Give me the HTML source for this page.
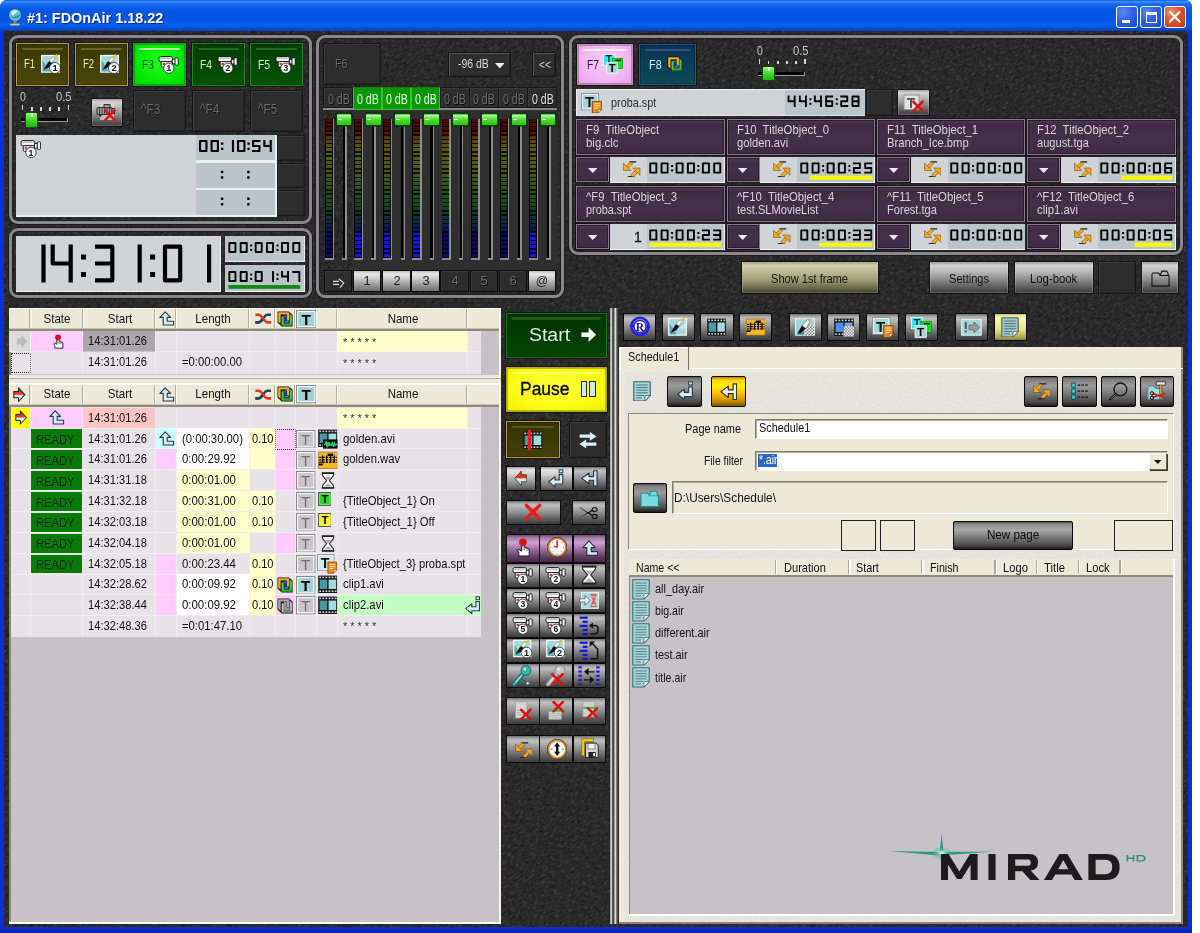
<!DOCTYPE html><html><head><meta charset="utf-8"><title>FDOnAir</title><style>
html,body{margin:0;padding:0;background:#fff;overflow:hidden}
body{width:1200px;height:933px;position:relative;font-family:"Liberation Sans",sans-serif}
.a{position:absolute;box-sizing:border-box}
.t{white-space:nowrap;font-family:"Liberation Sans",sans-serif}
.rp{border:3px solid #8a888a;border-radius:9px;box-shadow:0 0 0 1px #1c1c1c, inset 0 0 0 1px #1c1c1c}
.dk{background:#2d2d2d;border:1px solid #181818;box-shadow:inset 1px 1px 0 #3b3b3b, inset -1px -1px 0 #242424}
.mt{background:linear-gradient(#8e8e8e 0%,#d2d2d2 10%,#bdbdbd 28%,#8f8f8f 55%,#555 85%,#3a3a3a 100%);border:1px solid #111;box-shadow:inset 0 0 0 1px rgba(255,255,255,.18)}
.mtd{background:linear-gradient(#5e5e5e 0%,#8a8a8a 8%,#6f6f6f 35%,#4a4a4a 70%,#2c2c2c 100%);border:1px solid #0c0c0c;box-shadow:inset 0 0 0 1px rgba(255,255,255,.12)}
.lcd{background:#d0d4d6}
.lcd2{background:#b9c5c9}
</style></head><body><div style="position:absolute;left:0;top:0;width:1200px;height:933px;opacity:0.999"><div class="a" style="left:0px;top:0px;width:1192px;height:933px;background:linear-gradient(#0a31d8 0,#0a31d8 99.3%,#0820a8 100%);border-radius:7px 7px 0 0"></div><div class="a" style="left:4px;top:31px;width:1184px;height:896px;background:#2a2a2a;overflow:hidden"><svg width="1184" height="896" style="position:absolute;left:0;top:0"><filter id="nz" x="0" y="0" width="100%" height="100%" filterUnits="objectBoundingBox"><feTurbulence type="fractalNoise" baseFrequency="0.22 0.62" numOctaves="2" seed="3"/><feColorMatrix type="matrix" values="0 0 0 0 1  0 0 0 0 1  0 0 0 0 1  3.2 0 0 0 -1.55"/></filter><filter id="nz2" x="0" y="0" width="100%" height="100%" filterUnits="objectBoundingBox"><feTurbulence type="fractalNoise" baseFrequency="0.2 0.6" numOctaves="2" seed="17"/><feColorMatrix type="matrix" values="0 0 0 0 0  0 0 0 0 0  0 0 0 0 0  3.2 0 0 0 -1.55"/></filter><g transform="rotate(-38 592 448)"><rect x="-300" y="-400" width="1800" height="1700" filter="url(#nz)" opacity="0.11"/><rect x="-300" y="-400" width="1800" height="1700" filter="url(#nz2)" opacity="0.36"/></g></svg></div><div class="a" style="left:0px;top:0px;width:1192px;height:31px;border-radius:7px 7px 0 0;background:linear-gradient(#0a5bdc 0%,#3f8cf7 5%,#1a6cf0 12%,#0558e6 30%,#0455e4 60%,#0660f0 80%,#0750d8 92%,#0340b8 100%)"></div><svg class="a" style="left:6px;top:7px" width="18" height="20" viewBox="0 0 18 20"><circle cx="9" cy="8" r="6.5" fill="#5bc0d8" stroke="#1a4a8a" stroke-width="1"/><path d="M5 5 Q8 2 12 4 Q9 7 6 9 Z" fill="#e8f8ff" opacity=".85"/><path d="M6 10 Q10 12 14 8" stroke="#2a7a9a" stroke-width="1.3" fill="none"/><rect x="7.5" y="14" width="3" height="3" fill="#888"/><rect x="4" y="16.5" width="10" height="2" rx="1" fill="#ccc" stroke="#666" stroke-width=".5"/></svg><span class="a t" style="left:27px;transform-origin:0 0;top:9.57px;font-size:14px;line-height:16px;color:#fff;font-weight:bold;transform:scaleX(1.03);text-shadow:1px 1px 1px #0a2a8a">#1: FDOnAir 1.18.22</span><div class="a" style="left:1116px;top:6px;width:21.5px;height:21.5px;border:1px solid #fff;border-radius:3px;background:radial-gradient(circle at 30% 25%,#5b8cf5 0%,#2f62e6 45%,#1d47c8 100%)"><div class="a" style="left:5px;top:13px;width:8px;height:3px;background:#fff"></div></div><div class="a" style="left:1140px;top:6px;width:21.5px;height:21.5px;border:1px solid #fff;border-radius:3px;background:radial-gradient(circle at 30% 25%,#5b8cf5 0%,#2f62e6 45%,#1d47c8 100%)"><div class="a" style="left:4.5px;top:4.5px;width:11px;height:11px;border:1.5px solid #fff;border-top-width:3px"></div></div><div class="a" style="left:1164px;top:6px;width:21.5px;height:21.5px;border:1px solid #fff;border-radius:3px;background:radial-gradient(circle at 30% 25%,#f0936f 0%,#dd5028 45%,#c03a14 100%)"><svg width="20" height="20" style="position:absolute;left:0;top:0"><path d="M5 5 L14.5 14.5 M14.5 5 L5 14.5" stroke="#fff" stroke-width="2.2" stroke-linecap="round"/></svg></div>
<div class="a rp" style="left:8.5px;top:35px;width:303.5px;height:188.8px;"></div><div class="a" style="left:16.3px;top:43.4px;width:53px;height:43px;background:linear-gradient(#3a3800,#45420a 60%,#4a4606);border:1px solid #c29a3c;box-shadow:0 0 0 1px #141414, inset 0 0 0 1px rgba(0,0,0,.25)"><div class="a" style="left:5px;top:3.6px;right:5px;height:2.4px;border-radius:1.2px;filter:blur(.5px);background:rgba(140,135,70,.55)"></div></div><span class="a t" style="left:24.1px;transform-origin:0 0;top:56.49px;font-size:13.3px;line-height:15.3px;color:#f2eab4;font-weight:normal;transform:scaleX(0.72);">F1</span><svg class="a" style="left:41.2px;top:53.9px" width="20" height="20" viewBox="0 -0.6 20 20"><rect x=".7" y=".9" width="17.6" height="16.6" fill="#a6d8da" stroke="#f0fafa" stroke-width="1.3"/><path d="M1.5 16.8 V5.4 L8.8 16.8 Z" fill="#4f9ea6" opacity=".85"/><path d="M10 11.2 L18 5.4 V11 Z" fill="#d4eef0" opacity=".8"/><path d="M2.6 15.2 L7.2 7.6 L10.6 5.2 L11.4 8.4 L8.4 12.6 Z" fill="#0c0c0c"/><path d="M8.2 6.4 L12.2 2.4 L14 4.2 L10.6 8.4 Z" fill="#fbfbf4" stroke="#555" stroke-width=".4"/><path d="M12.2 2.4 L15.4 -.4 L17.2 .6 L14 4.2 Z" fill="#f0bc38"/><circle cx="14" cy="13.4" r="5.5" fill="#fff" stroke="#222" stroke-width=".8"/><text x="14" y="16.78" font-family="Liberation Sans" font-size="9.4" font-weight="bold" text-anchor="middle" fill="#111">1</text></svg><div class="a" style="left:74.7px;top:43.4px;width:53px;height:43px;background:linear-gradient(#3a3800,#45420a 60%,#4a4606);border:1px solid #c29a3c;box-shadow:0 0 0 1px #141414, inset 0 0 0 1px rgba(0,0,0,.25)"><div class="a" style="left:5px;top:3.6px;right:5px;height:2.4px;border-radius:1.2px;filter:blur(.5px);background:rgba(140,135,70,.55)"></div></div><span class="a t" style="left:82.5px;transform-origin:0 0;top:56.49px;font-size:13.3px;line-height:15.3px;color:#f2eab4;font-weight:normal;transform:scaleX(0.72);">F2</span><svg class="a" style="left:99.6px;top:53.9px" width="20" height="20" viewBox="0 -0.6 20 20"><rect x=".7" y=".9" width="17.6" height="16.6" fill="#a6d8da" stroke="#f0fafa" stroke-width="1.3"/><path d="M1.5 16.8 V5.4 L8.8 16.8 Z" fill="#4f9ea6" opacity=".85"/><path d="M10 11.2 L18 5.4 V11 Z" fill="#d4eef0" opacity=".8"/><path d="M2.6 15.2 L7.2 7.6 L10.6 5.2 L11.4 8.4 L8.4 12.6 Z" fill="#0c0c0c"/><path d="M8.2 6.4 L12.2 2.4 L14 4.2 L10.6 8.4 Z" fill="#fbfbf4" stroke="#555" stroke-width=".4"/><path d="M12.2 2.4 L15.4 -.4 L17.2 .6 L14 4.2 Z" fill="#f0bc38"/><circle cx="14" cy="13.4" r="5.5" fill="#fff" stroke="#222" stroke-width=".8"/><text x="14" y="16.78" font-family="Liberation Sans" font-size="9.4" font-weight="bold" text-anchor="middle" fill="#111">2</text></svg><div class="a" style="left:132.9px;top:43.4px;width:53.5px;height:42.6px;background:radial-gradient(ellipse at 50% 45%,#1cff1c 0%,#05ee05 55%,#00d400 100%);border:1px solid #19a919;box-shadow:0 0 0 1px #141414, inset 0 0 0 1px rgba(0,0,0,.25)"><div class="a" style="left:5px;top:3.6px;right:5px;height:2.4px;border-radius:1.2px;filter:blur(.5px);background:rgba(200,255,190,.85)"></div></div><span class="a t" style="left:141.6px;transform-origin:0 0;top:56.55px;font-size:13.5px;line-height:15.5px;color:#045004;font-weight:normal;transform:scaleX(0.77);">F3</span><svg class="a" style="left:157.9px;top:55.2px" width="21" height="19" viewBox="0 0 21 19"><g stroke="#111" stroke-width=".9" fill="#f4f4f4"><rect x="1" y="1.5" width="13.5" height="5.2" rx="1.8"/><rect x="3.2" y="6.6" width="11" height="5.5" rx="1"/><rect x="14.3" y="4.3" width="3" height="4.6"/><rect x="17" y="2.8" width="3.2" height="7.4" rx=".8"/></g><rect x="4.6" y="8" width="2.6" height="2" fill="#e0303a"/><path d="M2.2 3.1 H12.5" stroke="#888" stroke-width=".8"/><circle cx="10.8" cy="13.2" r="5.1" fill="#fff" stroke="#222" stroke-width=".8"/><text x="10.8" y="16.3" font-family="Liberation Sans" font-size="8.6" font-weight="bold" text-anchor="middle" fill="#111">1</text></svg><div class="a" style="left:191.5px;top:43.4px;width:53px;height:42.6px;background:linear-gradient(#013c01,#024a02 55%,#035203);border:1px solid #138f13;box-shadow:0 0 0 1px #141414, inset 0 0 0 1px rgba(0,0,0,.25)"><div class="a" style="left:5px;top:3.6px;right:5px;height:2.4px;border-radius:1.2px;filter:blur(.5px);background:rgba(60,130,60,.6)"></div></div><span class="a t" style="left:199.7px;transform-origin:0 0;top:56.55px;font-size:13.5px;line-height:15.5px;color:#cfeec4;font-weight:normal;transform:scaleX(0.77);">F4</span><svg class="a" style="left:216.5px;top:55.2px" width="21" height="19" viewBox="0 0 21 19"><g stroke="#111" stroke-width=".9" fill="#f4f4f4"><rect x="1" y="1.5" width="13.5" height="5.2" rx="1.8"/><rect x="3.2" y="6.6" width="11" height="5.5" rx="1"/><rect x="14.3" y="4.3" width="3" height="4.6"/><rect x="17" y="2.8" width="3.2" height="7.4" rx=".8"/></g><rect x="4.6" y="8" width="2.6" height="2" fill="#e0303a"/><path d="M2.2 3.1 H12.5" stroke="#888" stroke-width=".8"/><circle cx="10.8" cy="13.2" r="5.1" fill="#fff" stroke="#222" stroke-width=".8"/><text x="10.8" y="16.3" font-family="Liberation Sans" font-size="8.6" font-weight="bold" text-anchor="middle" fill="#111">2</text></svg><div class="a" style="left:250px;top:43.4px;width:53px;height:42.6px;background:linear-gradient(#013c01,#024a02 55%,#035203);border:1px solid #138f13;box-shadow:0 0 0 1px #141414, inset 0 0 0 1px rgba(0,0,0,.25)"><div class="a" style="left:5px;top:3.6px;right:5px;height:2.4px;border-radius:1.2px;filter:blur(.5px);background:rgba(60,130,60,.6)"></div></div><span class="a t" style="left:258.2px;transform-origin:0 0;top:56.55px;font-size:13.5px;line-height:15.5px;color:#cfeec4;font-weight:normal;transform:scaleX(0.77);">F5</span><svg class="a" style="left:275px;top:55.2px" width="21" height="19" viewBox="0 0 21 19"><g stroke="#111" stroke-width=".9" fill="#f4f4f4"><rect x="1" y="1.5" width="13.5" height="5.2" rx="1.8"/><rect x="3.2" y="6.6" width="11" height="5.5" rx="1"/><rect x="14.3" y="4.3" width="3" height="4.6"/><rect x="17" y="2.8" width="3.2" height="7.4" rx=".8"/></g><rect x="4.6" y="8" width="2.6" height="2" fill="#e0303a"/><path d="M2.2 3.1 H12.5" stroke="#888" stroke-width=".8"/><circle cx="10.8" cy="13.2" r="5.1" fill="#fff" stroke="#222" stroke-width=".8"/><text x="10.8" y="16.3" font-family="Liberation Sans" font-size="8.6" font-weight="bold" text-anchor="middle" fill="#111">3</text></svg><span class="a t" style="left:20.4px;transform-origin:0 0;top:90.4px;font-size:12.6px;line-height:14.6px;color:#c4c4c4;font-weight:normal;transform:scaleX(0.83);">0</span><span class="a t" style="left:55.7px;transform-origin:0 0;top:90.4px;font-size:12.6px;line-height:14.6px;color:#c4c4c4;font-weight:normal;transform:scaleX(0.89);">0.5</span><div class="a" style="left:21.8px;top:105.2px;width:1.6px;height:5.3px;background:#d8d8d8"></div><div class="a" style="left:30.96px;top:107px;width:1.6px;height:3.5px;background:#d8d8d8"></div><div class="a" style="left:40.12px;top:107px;width:1.6px;height:3.5px;background:#d8d8d8"></div><div class="a" style="left:49.28px;top:107px;width:1.6px;height:3.5px;background:#d8d8d8"></div><div class="a" style="left:58.44px;top:107px;width:1.6px;height:3.5px;background:#d8d8d8"></div><div class="a" style="left:67.6px;top:105.2px;width:1.6px;height:5.3px;background:#d8d8d8"></div><div class="a" style="left:21.1px;top:118.2px;width:47.4px;height:2.6px;background:#050505"></div><div class="a" style="left:21.1px;top:120.8px;width:47.4px;height:1.2px;background:#9a9a9a"></div><div class="a" style="left:67.3px;top:118.2px;width:1.2px;height:3.8px;background:#9a9a9a"></div><div class="a" style="left:25.4px;top:112px;width:12.9px;height:15.6px;border:1px solid #0b4d0b;border-radius:2px;background:linear-gradient(#9cf58a 0%,#63ea4a 25%,#35d51f 60%,#22b510 100%)"><div class="a" style="left:5px;top:0;width:1.4px;height:4px;background:#e8ffe0"></div></div><div class="a mt" style="left:90.6px;top:97.8px;width:32.6px;height:28.8px;"><svg class="a" style="left:4.6px;top:3.6px" width="22" height="20" viewBox="0 0 22 20"><rect x="4" y="1" width="14" height="17" fill="#d8d8d8" opacity=".75"/><g stroke="#222" stroke-width=".9" fill="#9a9a9a"><rect x="1" y="5.5" width="15" height="7" rx="1"/><rect x="8" y="2.6" width="6" height="3.2"/><rect x="16" y="6.4" width="2.6" height="5"/></g><path d="M3.5 6 V12 M6 6 V12 M8.5 6 V12 M11 6 V12 M13.5 6 V12" stroke="#333" stroke-width=".8"/><path d="M2.5 12.5 L4.5 15 L6 12.5 Z" fill="#222"/><path d="M9.4 8.6 L18.6 17.8 M18.6 8.6 L9.4 17.8" stroke="#e01010" stroke-width="2.4" stroke-linecap="round"/></svg></div><div class="a dk" style="left:132.9px;top:89.5px;width:53.4px;height:42.4px;"></div><span class="a t" style="left:140.9px;transform-origin:0 0;top:102.41px;font-size:13.8px;line-height:15.8px;color:#6a6a6a;font-weight:normal;transform:scaleX(0.85);text-shadow:1px 1px 0 #111">^F3</span><div class="a dk" style="left:191.5px;top:89.5px;width:53.4px;height:42.4px;"></div><span class="a t" style="left:199.5px;transform-origin:0 0;top:102.41px;font-size:13.8px;line-height:15.8px;color:#6a6a6a;font-weight:normal;transform:scaleX(0.85);text-shadow:1px 1px 0 #111">^F4</span><div class="a dk" style="left:250px;top:89.5px;width:53.4px;height:42.4px;"></div><span class="a t" style="left:258px;transform-origin:0 0;top:102.41px;font-size:13.8px;line-height:15.8px;color:#6a6a6a;font-weight:normal;transform:scaleX(0.85);text-shadow:1px 1px 0 #111">^F5</span><div class="a" style="left:15.6px;top:134.6px;width:261px;height:82.8px;background:#eef0f0"></div><div class="a lcd" style="left:16.4px;top:135.2px;width:179.6px;height:80px;"></div><div class="a lcd2" style="left:196px;top:135.2px;width:78.6px;height:25.2px;"></div><div class="a dk" style="left:277px;top:135.2px;width:28px;height:25.8px;"></div><div class="a lcd2" style="left:196px;top:163px;width:78.6px;height:24.6px;"></div><div class="a dk" style="left:277px;top:163px;width:28px;height:25.2px;"></div><div class="a lcd2" style="left:196px;top:190px;width:78.6px;height:25.2px;"></div><div class="a dk" style="left:277px;top:190px;width:28px;height:25.8px;"></div><svg class="a" style="left:19.5px;top:138.5px" width="21.42" height="19.38" viewBox="0 0 21 19"><g stroke="#111" stroke-width=".9" fill="#f4f4f4"><rect x="1" y="1.5" width="13.5" height="5.2" rx="1.8"/><rect x="3.2" y="6.6" width="11" height="5.5" rx="1"/><rect x="14.3" y="4.3" width="3" height="4.6"/><rect x="17" y="2.8" width="3.2" height="7.4" rx=".8"/></g><rect x="4.6" y="8" width="2.6" height="2" fill="#e0303a"/><path d="M2.2 3.1 H12.5" stroke="#888" stroke-width=".8"/><circle cx="10.8" cy="13.2" r="5.1" fill="#fff" stroke="#222" stroke-width=".8"/><text x="10.8" y="16.3" font-family="Liberation Sans" font-size="8.6" font-weight="bold" text-anchor="middle" fill="#111">1</text></svg><svg class="a" style="left:190px;top:130px" width="100" height="90" viewBox="190 130 100 90" ><path d="M200.05 141.05H206.45V150.95H200.05Z" fill="none" stroke="#000" stroke-width="2.1" stroke-linejoin="round" stroke-linecap="square"/><path d="M211.55 141.05H217.95V150.95H211.55Z" fill="none" stroke="#000" stroke-width="2.1" stroke-linejoin="round" stroke-linecap="square"/><rect x="221.05" y="142.45" width="2.3" height="2.3" fill="#000"/><rect x="221.05" y="147.73" width="2.3" height="2.3" fill="#000"/><path d="M232.95 141.05V150.95" fill="none" stroke="#000" stroke-width="2.1" stroke-linejoin="round" stroke-linecap="square"/><path d="M238.05 141.05H244.45V150.95H238.05Z" fill="none" stroke="#000" stroke-width="2.1" stroke-linejoin="round" stroke-linecap="square"/><rect x="247.45" y="142.45" width="2.3" height="2.3" fill="#000"/><rect x="247.45" y="147.73" width="2.3" height="2.3" fill="#000"/><path d="M259.45 141.05H253.05V146H259.45V150.95H253.05" fill="none" stroke="#000" stroke-width="2.1" stroke-linejoin="round" stroke-linecap="square"/><path d="M264.35 141.05V146H270.75M270.75 141.05V150.95" fill="none" stroke="#000" stroke-width="2.1" stroke-linejoin="round" stroke-linecap="square"/><rect x="220.9" y="170.76" width="2.4" height="2.4" fill="#000"/><rect x="220.9" y="176.28" width="2.4" height="2.4" fill="#000"/><rect x="247.2" y="170.76" width="2.4" height="2.4" fill="#000"/><rect x="247.2" y="176.28" width="2.4" height="2.4" fill="#000"/><rect x="220.9" y="197.56" width="2.4" height="2.4" fill="#000"/><rect x="220.9" y="203.08" width="2.4" height="2.4" fill="#000"/><rect x="247.2" y="197.56" width="2.4" height="2.4" fill="#000"/><rect x="247.2" y="203.08" width="2.4" height="2.4" fill="#000"/></svg><div class="a rp" style="left:8.5px;top:228.3px;width:303.5px;height:69.9px;"></div><div class="a lcd" style="left:15.6px;top:235.6px;width:205.2px;height:56.2px;border:1px solid #eef0f0;border-left:0;border-top:0"></div><div class="a lcd2" style="left:224.8px;top:235.6px;width:79.8px;height:26.8px;border:1px solid #eef0f0;border-left:0;border-top:0"></div><div class="a lcd2" style="left:224.8px;top:265.4px;width:79.8px;height:26.6px;border:1px solid #eef0f0;border-left:0;border-top:0"></div><svg class="a" style="left:10px;top:230px" width="300" height="66" viewBox="10 230 300 66" ><path d="M43.5 246.6V280.4" fill="none" stroke="#000" stroke-width="4.2" stroke-linejoin="round" stroke-linecap="square"/><path d="M52.7 246.6V263.5H70.7M70.7 246.6V280.4" fill="none" stroke="#000" stroke-width="4.2" stroke-linejoin="round" stroke-linecap="square"/><path d="M97.1 246.6H112.3V280.4H97.1M97.1 263.5H112.3" fill="none" stroke="#000" stroke-width="4.2" stroke-linejoin="round" stroke-linecap="square"/><path d="M139.7 246.6V280.4" fill="none" stroke="#000" stroke-width="4.2" stroke-linejoin="round" stroke-linecap="square"/><path d="M165 246.6H180.2V280.4H165Z" fill="none" stroke="#000" stroke-width="4.2" stroke-linejoin="round" stroke-linecap="square"/><path d="M209.1 246.6V280.4" fill="none" stroke="#000" stroke-width="4.2" stroke-linejoin="round" stroke-linecap="square"/><rect x="81" y="254.54" width="5" height="5" fill="#000"/><rect x="81" y="272.02" width="5" height="5" fill="#000"/><rect x="150.1" y="254.54" width="5" height="5" fill="#000"/><rect x="150.1" y="272.02" width="5" height="5" fill="#000"/><path d="M229.35 242.95H235.45V252.05H229.35Z" fill="none" stroke="#000" stroke-width="1.9" stroke-linejoin="round" stroke-linecap="square"/><path d="M240.65 242.95H246.75V252.05H240.65Z" fill="none" stroke="#000" stroke-width="1.9" stroke-linejoin="round" stroke-linecap="square"/><rect x="250.2" y="244.52" width="2" height="2" fill="#000"/><rect x="250.2" y="248.92" width="2" height="2" fill="#000"/><path d="M255.65 242.95H261.75V252.05H255.65Z" fill="none" stroke="#000" stroke-width="1.9" stroke-linejoin="round" stroke-linecap="square"/><path d="M266.95 242.95H273.05V252.05H266.95Z" fill="none" stroke="#000" stroke-width="1.9" stroke-linejoin="round" stroke-linecap="square"/><rect x="276.5" y="244.52" width="2" height="2" fill="#000"/><rect x="276.5" y="248.92" width="2" height="2" fill="#000"/><path d="M281.95 242.95H288.05V252.05H281.95Z" fill="none" stroke="#000" stroke-width="1.9" stroke-linejoin="round" stroke-linecap="square"/><path d="M293.25 242.95H299.35V252.05H293.25Z" fill="none" stroke="#000" stroke-width="1.9" stroke-linejoin="round" stroke-linecap="square"/><path d="M229.35 271.95H235.45V281.05H229.35Z" fill="none" stroke="#000" stroke-width="1.9" stroke-linejoin="round" stroke-linecap="square"/><path d="M240.65 271.95H246.75V281.05H240.65Z" fill="none" stroke="#000" stroke-width="1.9" stroke-linejoin="round" stroke-linecap="square"/><rect x="250.2" y="273.52" width="2" height="2" fill="#000"/><rect x="250.2" y="277.92" width="2" height="2" fill="#000"/><path d="M255.65 271.95H261.75V281.05H255.65Z" fill="none" stroke="#000" stroke-width="1.9" stroke-linejoin="round" stroke-linecap="square"/><path d="M273.05 271.95V281.05" fill="none" stroke="#000" stroke-width="1.9" stroke-linejoin="round" stroke-linecap="square"/><rect x="276.5" y="273.52" width="2" height="2" fill="#000"/><rect x="276.5" y="277.92" width="2" height="2" fill="#000"/><path d="M281.95 271.95V276.5H288.05M288.05 271.95V281.05" fill="none" stroke="#000" stroke-width="1.9" stroke-linejoin="round" stroke-linecap="square"/><path d="M293.25 271.95H299.35V281.05" fill="none" stroke="#000" stroke-width="1.9" stroke-linejoin="round" stroke-linecap="square"/><rect x="228.4" y="285" width="71.8" height="3.8" fill="#128a12"/></svg>
<div class="a rp" style="left:316.2px;top:35px;width:248px;height:263px;"></div><div class="a" style="left:352px;top:110px;width:205px;height:159.5px;background:#2f2f2f"></div><div class="a dk" style="left:323.4px;top:43.4px;width:58px;height:41.4px;"></div><span class="a t" style="left:334.5px;transform-origin:0 0;top:56.35px;font-size:13.5px;line-height:15.5px;color:#6a6a6a;font-weight:normal;transform:scaleX(0.79);text-shadow:1px 1px 0 #111">F6</span><div class="a" style="left:448.2px;top:52.4px;width:63px;height:24.6px;background:#2e2e2e;border:1px solid #151515;box-shadow:inset 1px 1px 0 #555,inset -1px -1px 0 #222"></div><span class="a t" style="left:457.5px;transform-origin:0 0;top:56.44px;font-size:13.6px;line-height:15.6px;color:#d8d8d8;font-weight:normal;transform:scaleX(0.77);">-96 dB</span><svg class="a" style="left:494.6px;top:62.6px" width="9.6" height="5.4" viewBox="0 0 9.6 5.4"><path d="M0 0 H9.6 L4.8 5.4 Z" fill="#f0f0f0"/></svg><div class="a" style="left:532px;top:52.4px;width:24.4px;height:24.2px;background:#2e2e2e;border:1px solid #151515;box-shadow:inset 1px 1px 0 #555,inset -1px -1px 0 #222"></div><span class="a t" style="left:538.6px;transform-origin:0 0;top:57.43px;font-size:13px;line-height:15px;color:#d0d0d0;font-weight:normal;transform:scaleX(0.79);">&lt;&lt;</span><div class="a" style="left:323.4px;top:87.4px;width:29.55px;height:20.4px;background:#2d2d2d;border:1px solid #171717;box-shadow:inset 1px 1px 0 #3a3a3a"></div><div class="a" style="left:323.4px;top:107.8px;width:29.55px;height:1.8px;background:#858585"></div><span class="a t" style="left:327.6px;transform-origin:0 0;top:90.97px;font-size:14px;line-height:16px;color:#6e6e6e;font-weight:normal;transform:scaleX(0.76);text-shadow:1px 1px 0 #0c0c0c">0 dB</span><div class="a" style="left:352.55px;top:87.4px;width:29.55px;height:22.2px;background:#0a970a;border:1px solid #38c238;border-top-color:#0d800d"></div><span class="a t" style="left:356.75px;transform-origin:0 0;top:90.97px;font-size:14px;line-height:16px;color:#dcffd8;font-weight:normal;transform:scaleX(0.76);">0 dB</span><div class="a" style="left:381.7px;top:87.4px;width:29.55px;height:22.2px;background:#0a970a;border:1px solid #38c238;border-top-color:#0d800d"></div><span class="a t" style="left:385.9px;transform-origin:0 0;top:90.97px;font-size:14px;line-height:16px;color:#dcffd8;font-weight:normal;transform:scaleX(0.76);">0 dB</span><div class="a" style="left:410.85px;top:87.4px;width:29.55px;height:22.2px;background:#0a970a;border:1px solid #38c238;border-top-color:#0d800d"></div><span class="a t" style="left:415.05px;transform-origin:0 0;top:90.97px;font-size:14px;line-height:16px;color:#dcffd8;font-weight:normal;transform:scaleX(0.76);">0 dB</span><div class="a" style="left:440px;top:87.4px;width:29.55px;height:20.4px;background:#2d2d2d;border:1px solid #171717;box-shadow:inset 1px 1px 0 #3a3a3a"></div><div class="a" style="left:440px;top:107.8px;width:29.55px;height:1.8px;background:#858585"></div><span class="a t" style="left:444.2px;transform-origin:0 0;top:90.97px;font-size:14px;line-height:16px;color:#6e6e6e;font-weight:normal;transform:scaleX(0.76);text-shadow:1px 1px 0 #0c0c0c">0 dB</span><div class="a" style="left:469.15px;top:87.4px;width:29.55px;height:20.4px;background:#2d2d2d;border:1px solid #171717;box-shadow:inset 1px 1px 0 #3a3a3a"></div><div class="a" style="left:469.15px;top:107.8px;width:29.55px;height:1.8px;background:#858585"></div><span class="a t" style="left:473.35px;transform-origin:0 0;top:90.97px;font-size:14px;line-height:16px;color:#6e6e6e;font-weight:normal;transform:scaleX(0.76);text-shadow:1px 1px 0 #0c0c0c">0 dB</span><div class="a" style="left:498.3px;top:87.4px;width:29.55px;height:20.4px;background:#2d2d2d;border:1px solid #171717;box-shadow:inset 1px 1px 0 #3a3a3a"></div><div class="a" style="left:498.3px;top:107.8px;width:29.55px;height:1.8px;background:#858585"></div><span class="a t" style="left:502.5px;transform-origin:0 0;top:90.97px;font-size:14px;line-height:16px;color:#6e6e6e;font-weight:normal;transform:scaleX(0.76);text-shadow:1px 1px 0 #0c0c0c">0 dB</span><div class="a" style="left:527.45px;top:87.4px;width:29.55px;height:20.4px;background:#2d2d2d;border:1px solid #171717;box-shadow:inset 1px 1px 0 #3a3a3a"></div><div class="a" style="left:527.45px;top:107.8px;width:29.55px;height:1.8px;background:#858585"></div><span class="a t" style="left:531.65px;transform-origin:0 0;top:90.97px;font-size:14px;line-height:16px;color:#e0e0e0;font-weight:normal;transform:scaleX(0.76);text-shadow:1px 1px 0 #0c0c0c">0 dB</span><div class="a" style="left:325px;top:118.6px;width:8px;height:140.2px;background:#000"></div><div class="a" style="left:325.8px;top:119.4px;width:6.4px;height:139px;background:linear-gradient(#4e0606 0%,#4e0606 8%,#582406 11%,#5c480c 16%,#5a5a14 22%,#4c5a14 38%,#285816 48%,#184c16 60%,#093e24 68%,#07303e 72%,#09244e 77%,#09095a 83%,#090962 100%)"><div class="a" style="left:0;top:0;width:100%;height:100%;background:repeating-linear-gradient(rgba(0,0,0,0) 0,rgba(0,0,0,0) 2.8px,rgba(0,0,0,.8) 2.8px,rgba(0,0,0,.8) 4.21px)"></div></div><div class="a" style="left:332.6px;top:119px;width:1.6px;height:140.6px;background:#8e8e8e"></div><div class="a" style="left:325px;top:258.4px;width:8px;height:1.3px;background:#8c8c8c"></div><div class="a" style="left:343px;top:125px;width:2.2px;height:133.6px;background:#000"></div><div class="a" style="left:345.2px;top:125px;width:1.6px;height:134.6px;background:#8e8e8e"></div><div class="a" style="left:342.2px;top:258.4px;width:3.4px;height:1.3px;background:#8c8c8c"></div><div class="a" style="left:335.6px;top:112.8px;width:16.8px;height:13.4px;border:1px solid #094a09;border-radius:2px;background:linear-gradient(#4aa84a 0%,#b6f7a4 14%,#7fe865 30%,#48d92c 55%,#2fc414 100%);box-shadow:0 0 0 .6px #0a2a0a"><div class="a" style="left:1px;top:5px;width:4px;height:1.3px;background:#f0fff0"></div></div><div class="a" style="left:354.15px;top:118.6px;width:8px;height:140.2px;background:#000"></div><div class="a" style="left:354.95px;top:119.4px;width:6.4px;height:139px;background:linear-gradient(#4e0606 0%,#4e0606 8%,#582406 11%,#5c480c 16%,#5a5a14 22%,#4c5a14 38%,#285816 48%,#184c16 60%,#093e24 68%,#07303e 72%,#09244e 77%,#09095a 83%,#090962 100%)"><div class="a" style="left:0;top:113px;width:100%;height:26px;background:#1515dc"></div><div class="a" style="left:0;top:0;width:100%;height:100%;background:repeating-linear-gradient(rgba(0,0,0,0) 0,rgba(0,0,0,0) 2.8px,rgba(0,0,0,.8) 2.8px,rgba(0,0,0,.8) 4.21px)"></div></div><div class="a" style="left:361.75px;top:119px;width:1.6px;height:140.6px;background:#8e8e8e"></div><div class="a" style="left:354.15px;top:258.4px;width:8px;height:1.3px;background:#8c8c8c"></div><div class="a" style="left:372.15px;top:125px;width:2.2px;height:133.6px;background:#000"></div><div class="a" style="left:374.35px;top:125px;width:1.6px;height:134.6px;background:#8e8e8e"></div><div class="a" style="left:371.35px;top:258.4px;width:3.4px;height:1.3px;background:#8c8c8c"></div><div class="a" style="left:364.75px;top:112.8px;width:16.8px;height:13.4px;border:1px solid #094a09;border-radius:2px;background:linear-gradient(#4aa84a 0%,#b6f7a4 14%,#7fe865 30%,#48d92c 55%,#2fc414 100%);box-shadow:0 0 0 .6px #0a2a0a"><div class="a" style="left:1px;top:5px;width:4px;height:1.3px;background:#f0fff0"></div></div><div class="a" style="left:383.3px;top:118.6px;width:8px;height:140.2px;background:#000"></div><div class="a" style="left:384.1px;top:119.4px;width:6.4px;height:139px;background:linear-gradient(#4e0606 0%,#4e0606 8%,#582406 11%,#5c480c 16%,#5a5a14 22%,#4c5a14 38%,#285816 48%,#184c16 60%,#093e24 68%,#07303e 72%,#09244e 77%,#09095a 83%,#090962 100%)"><div class="a" style="left:0;top:113px;width:100%;height:26px;background:#1515dc"></div><div class="a" style="left:0;top:0;width:100%;height:100%;background:repeating-linear-gradient(rgba(0,0,0,0) 0,rgba(0,0,0,0) 2.8px,rgba(0,0,0,.8) 2.8px,rgba(0,0,0,.8) 4.21px)"></div></div><div class="a" style="left:390.9px;top:119px;width:1.6px;height:140.6px;background:#8e8e8e"></div><div class="a" style="left:383.3px;top:258.4px;width:8px;height:1.3px;background:#8c8c8c"></div><div class="a" style="left:401.3px;top:125px;width:2.2px;height:133.6px;background:#000"></div><div class="a" style="left:403.5px;top:125px;width:1.6px;height:134.6px;background:#8e8e8e"></div><div class="a" style="left:400.5px;top:258.4px;width:3.4px;height:1.3px;background:#8c8c8c"></div><div class="a" style="left:393.9px;top:112.8px;width:16.8px;height:13.4px;border:1px solid #094a09;border-radius:2px;background:linear-gradient(#4aa84a 0%,#b6f7a4 14%,#7fe865 30%,#48d92c 55%,#2fc414 100%);box-shadow:0 0 0 .6px #0a2a0a"><div class="a" style="left:1px;top:5px;width:4px;height:1.3px;background:#f0fff0"></div></div><div class="a" style="left:412.45px;top:118.6px;width:8px;height:140.2px;background:#000"></div><div class="a" style="left:413.25px;top:119.4px;width:6.4px;height:139px;background:linear-gradient(#4e0606 0%,#4e0606 8%,#582406 11%,#5c480c 16%,#5a5a14 22%,#4c5a14 38%,#285816 48%,#184c16 60%,#093e24 68%,#07303e 72%,#09244e 77%,#09095a 83%,#090962 100%)"><div class="a" style="left:0;top:113px;width:100%;height:26px;background:#1515dc"></div><div class="a" style="left:0;top:0;width:100%;height:100%;background:repeating-linear-gradient(rgba(0,0,0,0) 0,rgba(0,0,0,0) 2.8px,rgba(0,0,0,.8) 2.8px,rgba(0,0,0,.8) 4.21px)"></div></div><div class="a" style="left:420.05px;top:119px;width:1.6px;height:140.6px;background:#8e8e8e"></div><div class="a" style="left:412.45px;top:258.4px;width:8px;height:1.3px;background:#8c8c8c"></div><div class="a" style="left:430.45px;top:125px;width:2.2px;height:133.6px;background:#000"></div><div class="a" style="left:432.65px;top:125px;width:1.6px;height:134.6px;background:#8e8e8e"></div><div class="a" style="left:429.65px;top:258.4px;width:3.4px;height:1.3px;background:#8c8c8c"></div><div class="a" style="left:423.05px;top:112.8px;width:16.8px;height:13.4px;border:1px solid #094a09;border-radius:2px;background:linear-gradient(#4aa84a 0%,#b6f7a4 14%,#7fe865 30%,#48d92c 55%,#2fc414 100%);box-shadow:0 0 0 .6px #0a2a0a"><div class="a" style="left:1px;top:5px;width:4px;height:1.3px;background:#f0fff0"></div></div><div class="a" style="left:441.6px;top:118.6px;width:8px;height:140.2px;background:#000"></div><div class="a" style="left:442.4px;top:119.4px;width:6.4px;height:139px;background:linear-gradient(#4e0606 0%,#4e0606 8%,#582406 11%,#5c480c 16%,#5a5a14 22%,#4c5a14 38%,#285816 48%,#184c16 60%,#093e24 68%,#07303e 72%,#09244e 77%,#09095a 83%,#090962 100%)"><div class="a" style="left:0;top:0;width:100%;height:100%;background:repeating-linear-gradient(rgba(0,0,0,0) 0,rgba(0,0,0,0) 2.8px,rgba(0,0,0,.8) 2.8px,rgba(0,0,0,.8) 4.21px)"></div></div><div class="a" style="left:449.2px;top:119px;width:1.6px;height:140.6px;background:#8e8e8e"></div><div class="a" style="left:441.6px;top:258.4px;width:8px;height:1.3px;background:#8c8c8c"></div><div class="a" style="left:459.6px;top:125px;width:2.2px;height:133.6px;background:#000"></div><div class="a" style="left:461.8px;top:125px;width:1.6px;height:134.6px;background:#8e8e8e"></div><div class="a" style="left:458.8px;top:258.4px;width:3.4px;height:1.3px;background:#8c8c8c"></div><div class="a" style="left:452.2px;top:112.8px;width:16.8px;height:13.4px;border:1px solid #094a09;border-radius:2px;background:linear-gradient(#4aa84a 0%,#b6f7a4 14%,#7fe865 30%,#48d92c 55%,#2fc414 100%);box-shadow:0 0 0 .6px #0a2a0a"><div class="a" style="left:1px;top:5px;width:4px;height:1.3px;background:#f0fff0"></div></div><div class="a" style="left:470.75px;top:118.6px;width:8px;height:140.2px;background:#000"></div><div class="a" style="left:471.55px;top:119.4px;width:6.4px;height:139px;background:linear-gradient(#4e0606 0%,#4e0606 8%,#582406 11%,#5c480c 16%,#5a5a14 22%,#4c5a14 38%,#285816 48%,#184c16 60%,#093e24 68%,#07303e 72%,#09244e 77%,#09095a 83%,#090962 100%)"><div class="a" style="left:0;top:0;width:100%;height:100%;background:repeating-linear-gradient(rgba(0,0,0,0) 0,rgba(0,0,0,0) 2.8px,rgba(0,0,0,.8) 2.8px,rgba(0,0,0,.8) 4.21px)"></div></div><div class="a" style="left:478.35px;top:119px;width:1.6px;height:140.6px;background:#8e8e8e"></div><div class="a" style="left:470.75px;top:258.4px;width:8px;height:1.3px;background:#8c8c8c"></div><div class="a" style="left:488.75px;top:125px;width:2.2px;height:133.6px;background:#000"></div><div class="a" style="left:490.95px;top:125px;width:1.6px;height:134.6px;background:#8e8e8e"></div><div class="a" style="left:487.95px;top:258.4px;width:3.4px;height:1.3px;background:#8c8c8c"></div><div class="a" style="left:481.35px;top:112.8px;width:16.8px;height:13.4px;border:1px solid #094a09;border-radius:2px;background:linear-gradient(#4aa84a 0%,#b6f7a4 14%,#7fe865 30%,#48d92c 55%,#2fc414 100%);box-shadow:0 0 0 .6px #0a2a0a"><div class="a" style="left:1px;top:5px;width:4px;height:1.3px;background:#f0fff0"></div></div><div class="a" style="left:499.9px;top:118.6px;width:8px;height:140.2px;background:#000"></div><div class="a" style="left:500.7px;top:119.4px;width:6.4px;height:139px;background:linear-gradient(#4e0606 0%,#4e0606 8%,#582406 11%,#5c480c 16%,#5a5a14 22%,#4c5a14 38%,#285816 48%,#184c16 60%,#093e24 68%,#07303e 72%,#09244e 77%,#09095a 83%,#090962 100%)"><div class="a" style="left:0;top:0;width:100%;height:100%;background:repeating-linear-gradient(rgba(0,0,0,0) 0,rgba(0,0,0,0) 2.8px,rgba(0,0,0,.8) 2.8px,rgba(0,0,0,.8) 4.21px)"></div></div><div class="a" style="left:507.5px;top:119px;width:1.6px;height:140.6px;background:#8e8e8e"></div><div class="a" style="left:499.9px;top:258.4px;width:8px;height:1.3px;background:#8c8c8c"></div><div class="a" style="left:517.9px;top:125px;width:2.2px;height:133.6px;background:#000"></div><div class="a" style="left:520.1px;top:125px;width:1.6px;height:134.6px;background:#8e8e8e"></div><div class="a" style="left:517.1px;top:258.4px;width:3.4px;height:1.3px;background:#8c8c8c"></div><div class="a" style="left:510.5px;top:112.8px;width:16.8px;height:13.4px;border:1px solid #094a09;border-radius:2px;background:linear-gradient(#4aa84a 0%,#b6f7a4 14%,#7fe865 30%,#48d92c 55%,#2fc414 100%);box-shadow:0 0 0 .6px #0a2a0a"><div class="a" style="left:1px;top:5px;width:4px;height:1.3px;background:#f0fff0"></div></div><div class="a" style="left:529.05px;top:118.6px;width:8px;height:140.2px;background:#000"></div><div class="a" style="left:529.85px;top:119.4px;width:6.4px;height:139px;background:linear-gradient(#4e0606 0%,#4e0606 8%,#582406 11%,#5c480c 16%,#5a5a14 22%,#4c5a14 38%,#285816 48%,#184c16 60%,#093e24 68%,#07303e 72%,#09244e 77%,#09095a 83%,#090962 100%)"><div class="a" style="left:0;top:113px;width:100%;height:26px;background:#1515dc"></div><div class="a" style="left:0;top:0;width:100%;height:100%;background:repeating-linear-gradient(rgba(0,0,0,0) 0,rgba(0,0,0,0) 2.8px,rgba(0,0,0,.8) 2.8px,rgba(0,0,0,.8) 4.21px)"></div></div><div class="a" style="left:536.65px;top:119px;width:1.6px;height:140.6px;background:#8e8e8e"></div><div class="a" style="left:529.05px;top:258.4px;width:8px;height:1.3px;background:#8c8c8c"></div><div class="a" style="left:547.05px;top:125px;width:2.2px;height:133.6px;background:#000"></div><div class="a" style="left:549.25px;top:125px;width:1.6px;height:134.6px;background:#8e8e8e"></div><div class="a" style="left:546.25px;top:258.4px;width:3.4px;height:1.3px;background:#8c8c8c"></div><div class="a" style="left:539.65px;top:112.8px;width:16.8px;height:13.4px;border:1px solid #094a09;border-radius:2px;background:linear-gradient(#4aa84a 0%,#b6f7a4 14%,#7fe865 30%,#48d92c 55%,#2fc414 100%);box-shadow:0 0 0 .6px #0a2a0a"><div class="a" style="left:1px;top:5px;width:4px;height:1.3px;background:#f0fff0"></div></div><div class="a" style="left:323.8px;top:270px;width:28.65px;height:22.4px;background:#2d2d2d;border:1px solid #0c0c0c;box-shadow:inset 1px 1px 0 #3a3a3a"></div><div class="a" style="left:353.15px;top:270px;width:28.25px;height:22.4px;background:linear-gradient(#bdbdbd 0%,#e6e6e6 14%,#cfcfcf 35%,#a4a4a4 62%,#6e6e6e 100%);border:1px solid #0a0a0a"></div><span class="a t" style="left:367.42px;transform-origin:0 0;top:273.24px;font-size:13.6px;line-height:15.6px;color:#222;font-weight:normal;transform:scaleX(0.95) translateX(-50%);">1</span><div class="a" style="left:382.3px;top:270px;width:28.25px;height:22.4px;background:linear-gradient(#bdbdbd 0%,#e6e6e6 14%,#cfcfcf 35%,#a4a4a4 62%,#6e6e6e 100%);border:1px solid #0a0a0a"></div><span class="a t" style="left:396.57px;transform-origin:0 0;top:273.24px;font-size:13.6px;line-height:15.6px;color:#222;font-weight:normal;transform:scaleX(0.95) translateX(-50%);">2</span><div class="a" style="left:411.45px;top:270px;width:28.25px;height:22.4px;background:linear-gradient(#bdbdbd 0%,#e6e6e6 14%,#cfcfcf 35%,#a4a4a4 62%,#6e6e6e 100%);border:1px solid #0a0a0a"></div><span class="a t" style="left:425.73px;transform-origin:0 0;top:273.24px;font-size:13.6px;line-height:15.6px;color:#222;font-weight:normal;transform:scaleX(0.95) translateX(-50%);">3</span><div class="a" style="left:440.4px;top:270px;width:28.65px;height:22.4px;background:#2d2d2d;border:1px solid #0c0c0c;box-shadow:inset 1px 1px 0 #3a3a3a"></div><span class="a t" style="left:454.88px;transform-origin:0 0;top:273.24px;font-size:13.6px;line-height:15.6px;color:#6e6e6e;font-weight:normal;transform:scaleX(0.95) translateX(-50%);text-shadow:1px 1px 0 #0c0c0c">4</span><div class="a" style="left:469.55px;top:270px;width:28.65px;height:22.4px;background:#2d2d2d;border:1px solid #0c0c0c;box-shadow:inset 1px 1px 0 #3a3a3a"></div><span class="a t" style="left:484.02px;transform-origin:0 0;top:273.24px;font-size:13.6px;line-height:15.6px;color:#6e6e6e;font-weight:normal;transform:scaleX(0.95) translateX(-50%);text-shadow:1px 1px 0 #0c0c0c">5</span><div class="a" style="left:498.7px;top:270px;width:28.65px;height:22.4px;background:#2d2d2d;border:1px solid #0c0c0c;box-shadow:inset 1px 1px 0 #3a3a3a"></div><span class="a t" style="left:513.17px;transform-origin:0 0;top:273.24px;font-size:13.6px;line-height:15.6px;color:#6e6e6e;font-weight:normal;transform:scaleX(0.95) translateX(-50%);text-shadow:1px 1px 0 #0c0c0c">6</span><div class="a" style="left:528.05px;top:270px;width:28.25px;height:22.4px;background:linear-gradient(#bdbdbd 0%,#e6e6e6 14%,#cfcfcf 35%,#a4a4a4 62%,#6e6e6e 100%);border:1px solid #0a0a0a"></div><span class="a t" style="left:542.33px;transform-origin:0 0;top:273.24px;font-size:13.6px;line-height:15.6px;color:#222;font-weight:normal;transform:scaleX(0.9) translateX(-50%);">@</span><svg class="a" style="left:332.4px;top:277.6px" width="14" height="10" viewBox="0 0 14 10"><path d="M1 3.4 H7 M1 6.4 H7" stroke="#ddd" stroke-width="1.1"/><path d="M6.6 .8 L11.8 4.9 L8 9.6" stroke="#ddd" stroke-width="1.1" fill="none"/></svg>
<div class="a rp" style="left:568.6px;top:35px;width:614.4px;height:219.6px;"></div><div class="a" style="left:576.6px;top:44px;width:56.8px;height:41.4px;background:radial-gradient(ellipse at 50% 40%,#f9cbf9 0%,#f2b6f2 60%,#e6a0e6 100%);border:1px solid #c48ac4;box-shadow:0 0 0 1px #141414, inset 0 0 0 1px rgba(0,0,0,.25)"><div class="a" style="left:5px;top:3.6px;right:5px;height:2.4px;border-radius:1.2px;filter:blur(.5px);background:rgba(255,240,255,.9)"></div></div><span class="a t" style="left:586.6px;transform-origin:0 0;top:56.87px;font-size:13.4px;line-height:15.4px;color:#3c123c;font-weight:normal;transform:scaleX(0.77);">F7</span><svg class="a" style="left:603px;top:54.4px" width="20.58" height="20.58" viewBox="0 0 21 21"><rect x=".5" y=".5" width="11" height="11" fill="#35e6f2" stroke="#e8ffff" stroke-width=".8"/><text x="6" y="9.6" font-family="Liberation Sans" font-weight="bold" font-size="10.5" text-anchor="middle" fill="#062a3a">T</text><rect x="9.5" y="4.5" width="10.5" height="10.5" fill="#12e21a" stroke="#0a7a0a" stroke-width=".6"/><path d="M12.5 6.6 H18.5" stroke="#053a05" stroke-width="1.6"/><rect x="4" y="8.5" width="11" height="11.5" fill="#a6d6d6" stroke="#f4ffff" stroke-width=".8"/><text x="9.5" y="18.4" font-family="Liberation Sans" font-weight="bold" font-size="11.5" text-anchor="middle" fill="#0a0a0a">T</text></svg><div class="a" style="left:638.8px;top:44px;width:57.6px;height:41.4px;background:linear-gradient(#0a3358,#0b3f5a 50%,#0c4a52);border:1px solid #1d5e92;box-shadow:0 0 0 1px #141414, inset 0 0 0 1px rgba(0,0,0,.25)"><div class="a" style="left:5px;top:3.6px;right:5px;height:2.4px;border-radius:1.2px;filter:blur(.5px);background:rgba(70,110,140,.6)"></div></div><span class="a t" style="left:648.6px;transform-origin:0 0;top:56.87px;font-size:13.4px;line-height:15.4px;color:#dce8f2;font-weight:normal;transform:scaleX(0.81);">F8</span><svg class="a" style="left:667.2px;top:55.8px" width="15.68" height="15.68" viewBox="0 0 16 16"><path d="M.9 .5 H11.9 L15.6 3.7 V15.4 H4.7 L.5 11.6 V.9 Z" fill="#181404"/><path d="M1.2 1.2 H12.2 V9.6 H9.8 V3.6 H3.6 V12.8 L1.2 10.8 Z" fill="#eba832"/><path d="M6.9 3.7 H9.7 V9.7 H12.5 V12.5 H6.9 Z" fill="#1c3c80"/><path d="M4.6 5.2 H6.8 V12.6 H12.7 V2.6 L14.9 4.4 V14.7 H5.2 L4.6 14.1 Z" fill="#4cc83c"/><path d="M7.6 4.6 L9 5.4 L8.2 6.6 Z M7.8 10.4 L10.6 9.8 L11.4 11 L8.6 11.6 Z" fill="#5a90d8"/><path d="M5 14.6 H14.9 V13.2 H6.2" fill="none" stroke="#1f7a16" stroke-width=".7"/></svg><span class="a t" style="left:757.2px;transform-origin:0 0;top:44.2px;font-size:12.6px;line-height:14.6px;color:#c4c4c4;font-weight:normal;transform:scaleX(0.83);">0</span><span class="a t" style="left:792.5px;transform-origin:0 0;top:44.2px;font-size:12.6px;line-height:14.6px;color:#c4c4c4;font-weight:normal;transform:scaleX(0.89);">0.5</span><div class="a" style="left:758.6px;top:59px;width:1.6px;height:5.3px;background:#d8d8d8"></div><div class="a" style="left:767.76px;top:60.8px;width:1.6px;height:3.5px;background:#d8d8d8"></div><div class="a" style="left:776.92px;top:60.8px;width:1.6px;height:3.5px;background:#d8d8d8"></div><div class="a" style="left:786.08px;top:60.8px;width:1.6px;height:3.5px;background:#d8d8d8"></div><div class="a" style="left:795.24px;top:60.8px;width:1.6px;height:3.5px;background:#d8d8d8"></div><div class="a" style="left:804.4px;top:59px;width:1.6px;height:5.3px;background:#d8d8d8"></div><div class="a" style="left:757.9px;top:72px;width:47.4px;height:2.6px;background:#050505"></div><div class="a" style="left:757.9px;top:74.6px;width:47.4px;height:1.2px;background:#9a9a9a"></div><div class="a" style="left:804.1px;top:72px;width:1.2px;height:3.8px;background:#9a9a9a"></div><div class="a" style="left:762.2px;top:65.8px;width:12.9px;height:15.6px;border:1px solid #0b4d0b;border-radius:2px;background:linear-gradient(#9cf58a 0%,#63ea4a 25%,#35d51f 60%,#22b510 100%)"><div class="a" style="left:5px;top:0;width:1.4px;height:4px;background:#e8ffe0"></div></div><div class="a lcd" style="left:575.6px;top:89.2px;width:289.8px;height:26.6px;border:1px solid #eef0f0;border-right:0;border-bottom-color:#e2e4e4"></div><div class="a lcd2" style="left:785px;top:90.2px;width:80.4px;height:25px;"></div><svg class="a" style="left:580.6px;top:92.8px" width="21.56" height="20.58" viewBox="0 0 22 21"><rect x=".6" y=".6" width="17.4" height="16.6" fill="#a4d6d6" stroke="#8a8a8a" stroke-width="1"/><rect x="1.6" y="1.6" width="15.4" height="14.6" fill="none" stroke="#f2ffff" stroke-width=".9"/><text x="8.6" y="14.6" font-family="Liberation Sans" font-weight="bold" font-size="15" text-anchor="middle" fill="#111">T</text><path d="M11.6 8.6 H21 V17 L17.6 20.4 H11.6 Z" fill="#f08a1c" stroke="#7a3a08" stroke-width=".8"/><path d="M13.4 11 H19.4 M13.4 13.2 H19.4 M13.4 15.4 H17.4" stroke="#ffe4b0" stroke-width="1"/><path d="M17.6 20.4 V17 H21 Z" fill="#fff" stroke="#7a3a08" stroke-width=".5"/></svg><span class="a t" style="left:610.8px;transform-origin:0 0;top:95.6px;font-size:12.6px;line-height:14.6px;color:#2a2a2a;font-weight:normal;transform:scaleX(0.86);">proba.spt</span><svg class="a" style="left:785px;top:90px" width="80" height="26" viewBox="785 90 80 26" ><path d="M788.55 96.55V101.3H794.65M794.65 96.55V106.05" fill="none" stroke="#000" stroke-width="1.9" stroke-linejoin="round" stroke-linecap="square"/><path d="M799.85 96.55V101.3H805.95M805.95 96.55V106.05" fill="none" stroke="#000" stroke-width="1.9" stroke-linejoin="round" stroke-linecap="square"/><rect x="809.4" y="98.25" width="2" height="2" fill="#000"/><rect x="809.4" y="102.81" width="2" height="2" fill="#000"/><path d="M814.85 96.55V101.3H820.95M820.95 96.55V106.05" fill="none" stroke="#000" stroke-width="1.9" stroke-linejoin="round" stroke-linecap="square"/><path d="M832.25 96.55H826.15V106.05H832.25V101.3H826.15" fill="none" stroke="#000" stroke-width="1.9" stroke-linejoin="round" stroke-linecap="square"/><rect x="835.7" y="98.25" width="2" height="2" fill="#000"/><rect x="835.7" y="102.81" width="2" height="2" fill="#000"/><path d="M841.15 96.55H847.25V101.3H841.15V106.05H847.25" fill="none" stroke="#000" stroke-width="1.9" stroke-linejoin="round" stroke-linecap="square"/><path d="M852.45 96.55H858.55V106.05H852.45ZM852.45 101.3H858.55" fill="none" stroke="#000" stroke-width="1.9" stroke-linejoin="round" stroke-linecap="square"/></svg><div class="a dk" style="left:866px;top:89.2px;width:27.4px;height:26.4px;"></div><div class="a mt" style="left:897px;top:89.2px;width:32.6px;height:26.4px;"><svg class="a" style="left:5.4px;top:3.6px" width="22" height="19" viewBox="0 0 22 19"><rect x="1" y="1" width="15" height="14.6" fill="#e2e2e2" stroke="#8a8a8a" stroke-width=".9"/><text x="8" y="13.6" font-family="Liberation Sans" font-weight="bold" font-size="14" text-anchor="middle" fill="#555">T</text><path d="M10.2 7.6 L19.8 17.2 M19.8 7.6 L10.2 17.2" stroke="#e01010" stroke-width="2.5" stroke-linecap="round"/></svg></div><div class="a" style="left:576.3px;top:118.8px;width:148.4px;height:36.4px;background:linear-gradient(#3b2a3e,#45304a 50%,#3e2b42);border:1px solid #8c7a8e;box-shadow:0 0 0 1px #1a121c, inset 0 0 0 1px #2a1c2c, inset 0 5px 4px -3px rgba(110,80,115,.55)"></div><span class="a t" style="left:586.2px;transform-origin:0 0;top:123.16px;font-size:12.2px;line-height:14.2px;color:#dcd4dc;font-weight:normal;transform:scaleX(0.93);">F9&nbsp; TitleObject</span><span class="a t" style="left:586.2px;transform-origin:0 0;top:136.46px;font-size:12.2px;line-height:14.2px;color:#dcd4dc;font-weight:normal;transform:scaleX(0.94);">big.clc</span><div class="a" style="left:576.3px;top:157.4px;width:33px;height:25px;background:linear-gradient(#3b2a3e,#45304a 50%,#3e2b42);border:1px solid #8c7a8e;box-shadow:0 0 0 1px #1a121c, inset 0 0 0 1px #2a1c2c, inset 0 5px 4px -3px rgba(110,80,115,.55)"></div><svg class="a" style="left:587.9px;top:167.8px" width="9.4" height="5" viewBox="0 0 9.4 5"><path d="M0 0 H9.4 L4.7 5 Z" fill="#f0e8f0"/></svg><div class="a lcd" style="left:610.1px;top:156.8px;width:114.8px;height:26.3px;border:1px solid #eef0f0;border-left:0;border-top:0"></div><div class="a lcd2" style="left:646.9px;top:156.8px;width:77.2px;height:25.5px;"></div><svg class="a" style="left:623.1px;top:160.8px" width="17.5" height="16.5" viewBox="0 0 17.5 16.5"><path d="M6.4 .9 H13.2" stroke="#222" stroke-width="1.3"/><path d="M4.8 15.7 H11.6" stroke="#222" stroke-width="1.3"/><path d="M2.6 5.6 L7.4 .8 L9.6 2.8 L4.8 7.6 Z" fill="#f7a81c" stroke="#5a3a08" stroke-width=".5" stroke-linejoin="round"/><path d="M.6 2.2 V9.5 H7.9 Z" fill="#f7a81c" stroke="#5a3a08" stroke-width=".5" stroke-linejoin="round"/><path d="M12.7 8.9 L15 11.1 L10.2 16 L7.9 13.8 Z" fill="#f7a81c" stroke="#5a3a08" stroke-width=".5" stroke-linejoin="round"/><path d="M17 7 H9.7 L17 14.3 Z" fill="#f7a81c" stroke="#5a3a08" stroke-width=".5" stroke-linejoin="round"/></svg><svg class="a" style="left:636.3px;top:157.4px" width="92" height="27" viewBox="636.3 157.4 92 27" ><path d="M650.55 163.75H656.65V173.05H650.55Z" fill="none" stroke="#000" stroke-width="1.9" stroke-linejoin="round" stroke-linecap="square"/><path d="M661.85 163.75H667.95V173.05H661.85Z" fill="none" stroke="#000" stroke-width="1.9" stroke-linejoin="round" stroke-linecap="square"/><rect x="671.4" y="165.38" width="2" height="2" fill="#000"/><rect x="671.4" y="169.86" width="2" height="2" fill="#000"/><path d="M676.85 163.75H682.95V173.05H676.85Z" fill="none" stroke="#000" stroke-width="1.9" stroke-linejoin="round" stroke-linecap="square"/><path d="M688.15 163.75H694.25V173.05H688.15Z" fill="none" stroke="#000" stroke-width="1.9" stroke-linejoin="round" stroke-linecap="square"/><rect x="697.7" y="165.38" width="2" height="2" fill="#000"/><rect x="697.7" y="169.86" width="2" height="2" fill="#000"/><path d="M703.15 163.75H709.25V173.05H703.15Z" fill="none" stroke="#000" stroke-width="1.9" stroke-linejoin="round" stroke-linecap="square"/><path d="M714.45 163.75H720.55V173.05H714.45Z" fill="none" stroke="#000" stroke-width="1.9" stroke-linejoin="round" stroke-linecap="square"/></svg><div class="a" style="left:726.6px;top:118.8px;width:148.4px;height:36.4px;background:linear-gradient(#3b2a3e,#45304a 50%,#3e2b42);border:1px solid #8c7a8e;box-shadow:0 0 0 1px #1a121c, inset 0 0 0 1px #2a1c2c, inset 0 5px 4px -3px rgba(110,80,115,.55)"></div><span class="a t" style="left:736.5px;transform-origin:0 0;top:123.16px;font-size:12.2px;line-height:14.2px;color:#dcd4dc;font-weight:normal;transform:scaleX(0.93);">F10&nbsp; TitleObject_0</span><span class="a t" style="left:736.5px;transform-origin:0 0;top:136.46px;font-size:12.2px;line-height:14.2px;color:#dcd4dc;font-weight:normal;transform:scaleX(0.92);">golden.avi</span><div class="a" style="left:726.6px;top:157.4px;width:33px;height:25px;background:linear-gradient(#3b2a3e,#45304a 50%,#3e2b42);border:1px solid #8c7a8e;box-shadow:0 0 0 1px #1a121c, inset 0 0 0 1px #2a1c2c, inset 0 5px 4px -3px rgba(110,80,115,.55)"></div><svg class="a" style="left:738.2px;top:167.8px" width="9.4" height="5" viewBox="0 0 9.4 5"><path d="M0 0 H9.4 L4.7 5 Z" fill="#f0e8f0"/></svg><div class="a lcd" style="left:760.4px;top:156.8px;width:114.8px;height:26.3px;border:1px solid #eef0f0;border-left:0;border-top:0"></div><div class="a lcd2" style="left:797.2px;top:156.8px;width:77.2px;height:25.5px;"></div><svg class="a" style="left:773.4px;top:160.8px" width="17.5" height="16.5" viewBox="0 0 17.5 16.5"><path d="M6.4 .9 H13.2" stroke="#222" stroke-width="1.3"/><path d="M4.8 15.7 H11.6" stroke="#222" stroke-width="1.3"/><path d="M2.6 5.6 L7.4 .8 L9.6 2.8 L4.8 7.6 Z" fill="#f7a81c" stroke="#5a3a08" stroke-width=".5" stroke-linejoin="round"/><path d="M.6 2.2 V9.5 H7.9 Z" fill="#f7a81c" stroke="#5a3a08" stroke-width=".5" stroke-linejoin="round"/><path d="M12.7 8.9 L15 11.1 L10.2 16 L7.9 13.8 Z" fill="#f7a81c" stroke="#5a3a08" stroke-width=".5" stroke-linejoin="round"/><path d="M17 7 H9.7 L17 14.3 Z" fill="#f7a81c" stroke="#5a3a08" stroke-width=".5" stroke-linejoin="round"/></svg><svg class="a" style="left:786.6px;top:157.4px" width="92" height="27" viewBox="786.6 157.4 92 27" ><path d="M800.85 163.75H806.95V173.05H800.85Z" fill="none" stroke="#000" stroke-width="1.9" stroke-linejoin="round" stroke-linecap="square"/><path d="M812.15 163.75H818.25V173.05H812.15Z" fill="none" stroke="#000" stroke-width="1.9" stroke-linejoin="round" stroke-linecap="square"/><rect x="821.7" y="165.38" width="2" height="2" fill="#000"/><rect x="821.7" y="169.86" width="2" height="2" fill="#000"/><path d="M827.15 163.75H833.25V173.05H827.15Z" fill="none" stroke="#000" stroke-width="1.9" stroke-linejoin="round" stroke-linecap="square"/><path d="M838.45 163.75H844.55V173.05H838.45Z" fill="none" stroke="#000" stroke-width="1.9" stroke-linejoin="round" stroke-linecap="square"/><rect x="848" y="165.38" width="2" height="2" fill="#000"/><rect x="848" y="169.86" width="2" height="2" fill="#000"/><path d="M853.45 163.75H859.55V168.4H853.45V173.05H859.55" fill="none" stroke="#000" stroke-width="1.9" stroke-linejoin="round" stroke-linecap="square"/><path d="M870.85 163.75H864.75V168.4H870.85V173.05H864.75" fill="none" stroke="#000" stroke-width="1.9" stroke-linejoin="round" stroke-linecap="square"/><rect x="809.4" y="176" width="62.6" height="4.2" fill="#f6f60e"/></svg><div class="a" style="left:876.9px;top:118.8px;width:148.4px;height:36.4px;background:linear-gradient(#3b2a3e,#45304a 50%,#3e2b42);border:1px solid #8c7a8e;box-shadow:0 0 0 1px #1a121c, inset 0 0 0 1px #2a1c2c, inset 0 5px 4px -3px rgba(110,80,115,.55)"></div><span class="a t" style="left:886.8px;transform-origin:0 0;top:123.16px;font-size:12.2px;line-height:14.2px;color:#dcd4dc;font-weight:normal;transform:scaleX(0.93);">F11&nbsp; TitleObject_1</span><span class="a t" style="left:886.8px;transform-origin:0 0;top:136.46px;font-size:12.2px;line-height:14.2px;color:#dcd4dc;font-weight:normal;transform:scaleX(0.92);">Branch_Ice.bmp</span><div class="a" style="left:876.9px;top:157.4px;width:33px;height:25px;background:linear-gradient(#3b2a3e,#45304a 50%,#3e2b42);border:1px solid #8c7a8e;box-shadow:0 0 0 1px #1a121c, inset 0 0 0 1px #2a1c2c, inset 0 5px 4px -3px rgba(110,80,115,.55)"></div><svg class="a" style="left:888.5px;top:167.8px" width="9.4" height="5" viewBox="0 0 9.4 5"><path d="M0 0 H9.4 L4.7 5 Z" fill="#f0e8f0"/></svg><div class="a lcd" style="left:910.7px;top:156.8px;width:114.8px;height:26.3px;border:1px solid #eef0f0;border-left:0;border-top:0"></div><div class="a lcd2" style="left:947.5px;top:156.8px;width:77.2px;height:25.5px;"></div><svg class="a" style="left:923.7px;top:160.8px" width="17.5" height="16.5" viewBox="0 0 17.5 16.5"><path d="M6.4 .9 H13.2" stroke="#222" stroke-width="1.3"/><path d="M4.8 15.7 H11.6" stroke="#222" stroke-width="1.3"/><path d="M2.6 5.6 L7.4 .8 L9.6 2.8 L4.8 7.6 Z" fill="#f7a81c" stroke="#5a3a08" stroke-width=".5" stroke-linejoin="round"/><path d="M.6 2.2 V9.5 H7.9 Z" fill="#f7a81c" stroke="#5a3a08" stroke-width=".5" stroke-linejoin="round"/><path d="M12.7 8.9 L15 11.1 L10.2 16 L7.9 13.8 Z" fill="#f7a81c" stroke="#5a3a08" stroke-width=".5" stroke-linejoin="round"/><path d="M17 7 H9.7 L17 14.3 Z" fill="#f7a81c" stroke="#5a3a08" stroke-width=".5" stroke-linejoin="round"/></svg><svg class="a" style="left:936.9px;top:157.4px" width="92" height="27" viewBox="936.9 157.4 92 27" ><path d="M951.15 163.75H957.25V173.05H951.15Z" fill="none" stroke="#000" stroke-width="1.9" stroke-linejoin="round" stroke-linecap="square"/><path d="M962.45 163.75H968.55V173.05H962.45Z" fill="none" stroke="#000" stroke-width="1.9" stroke-linejoin="round" stroke-linecap="square"/><rect x="972" y="165.38" width="2" height="2" fill="#000"/><rect x="972" y="169.86" width="2" height="2" fill="#000"/><path d="M977.45 163.75H983.55V173.05H977.45Z" fill="none" stroke="#000" stroke-width="1.9" stroke-linejoin="round" stroke-linecap="square"/><path d="M988.75 163.75H994.85V173.05H988.75Z" fill="none" stroke="#000" stroke-width="1.9" stroke-linejoin="round" stroke-linecap="square"/><rect x="998.3" y="165.38" width="2" height="2" fill="#000"/><rect x="998.3" y="169.86" width="2" height="2" fill="#000"/><path d="M1003.75 163.75H1009.85V173.05H1003.75Z" fill="none" stroke="#000" stroke-width="1.9" stroke-linejoin="round" stroke-linecap="square"/><path d="M1015.05 163.75H1021.15V173.05H1015.05Z" fill="none" stroke="#000" stroke-width="1.9" stroke-linejoin="round" stroke-linecap="square"/></svg><div class="a" style="left:1027.2px;top:118.8px;width:148.4px;height:36.4px;background:linear-gradient(#3b2a3e,#45304a 50%,#3e2b42);border:1px solid #8c7a8e;box-shadow:0 0 0 1px #1a121c, inset 0 0 0 1px #2a1c2c, inset 0 5px 4px -3px rgba(110,80,115,.55)"></div><span class="a t" style="left:1037.1px;transform-origin:0 0;top:123.16px;font-size:12.2px;line-height:14.2px;color:#dcd4dc;font-weight:normal;transform:scaleX(0.93);">F12&nbsp; TitleObject_2</span><span class="a t" style="left:1037.1px;transform-origin:0 0;top:136.46px;font-size:12.2px;line-height:14.2px;color:#dcd4dc;font-weight:normal;transform:scaleX(0.91);">august.tga</span><div class="a" style="left:1027.2px;top:157.4px;width:33px;height:25px;background:linear-gradient(#3b2a3e,#45304a 50%,#3e2b42);border:1px solid #8c7a8e;box-shadow:0 0 0 1px #1a121c, inset 0 0 0 1px #2a1c2c, inset 0 5px 4px -3px rgba(110,80,115,.55)"></div><svg class="a" style="left:1038.8px;top:167.8px" width="9.4" height="5" viewBox="0 0 9.4 5"><path d="M0 0 H9.4 L4.7 5 Z" fill="#f0e8f0"/></svg><div class="a lcd" style="left:1061px;top:156.8px;width:114.8px;height:26.3px;border:1px solid #eef0f0;border-left:0;border-top:0"></div><div class="a lcd2" style="left:1097.8px;top:156.8px;width:77.2px;height:25.5px;"></div><svg class="a" style="left:1074px;top:160.8px" width="17.5" height="16.5" viewBox="0 0 17.5 16.5"><path d="M6.4 .9 H13.2" stroke="#222" stroke-width="1.3"/><path d="M4.8 15.7 H11.6" stroke="#222" stroke-width="1.3"/><path d="M2.6 5.6 L7.4 .8 L9.6 2.8 L4.8 7.6 Z" fill="#f7a81c" stroke="#5a3a08" stroke-width=".5" stroke-linejoin="round"/><path d="M.6 2.2 V9.5 H7.9 Z" fill="#f7a81c" stroke="#5a3a08" stroke-width=".5" stroke-linejoin="round"/><path d="M12.7 8.9 L15 11.1 L10.2 16 L7.9 13.8 Z" fill="#f7a81c" stroke="#5a3a08" stroke-width=".5" stroke-linejoin="round"/><path d="M17 7 H9.7 L17 14.3 Z" fill="#f7a81c" stroke="#5a3a08" stroke-width=".5" stroke-linejoin="round"/></svg><svg class="a" style="left:1087.2px;top:157.4px" width="92" height="27" viewBox="1087.2 157.4 92 27" ><path d="M1101.45 163.75H1107.55V173.05H1101.45Z" fill="none" stroke="#000" stroke-width="1.9" stroke-linejoin="round" stroke-linecap="square"/><path d="M1112.75 163.75H1118.85V173.05H1112.75Z" fill="none" stroke="#000" stroke-width="1.9" stroke-linejoin="round" stroke-linecap="square"/><rect x="1122.3" y="165.38" width="2" height="2" fill="#000"/><rect x="1122.3" y="169.86" width="2" height="2" fill="#000"/><path d="M1127.75 163.75H1133.85V173.05H1127.75Z" fill="none" stroke="#000" stroke-width="1.9" stroke-linejoin="round" stroke-linecap="square"/><path d="M1139.05 163.75H1145.15V173.05H1139.05Z" fill="none" stroke="#000" stroke-width="1.9" stroke-linejoin="round" stroke-linecap="square"/><rect x="1148.6" y="165.38" width="2" height="2" fill="#000"/><rect x="1148.6" y="169.86" width="2" height="2" fill="#000"/><path d="M1154.05 163.75H1160.15V173.05H1154.05Z" fill="none" stroke="#000" stroke-width="1.9" stroke-linejoin="round" stroke-linecap="square"/><path d="M1171.45 163.75H1165.35V173.05H1171.45V168.4H1165.35" fill="none" stroke="#000" stroke-width="1.9" stroke-linejoin="round" stroke-linecap="square"/><rect x="1121.8" y="176" width="50.6" height="4.2" fill="#f6f60e"/></svg><div class="a" style="left:576.3px;top:185.7px;width:148.4px;height:36.4px;background:linear-gradient(#3b2a3e,#45304a 50%,#3e2b42);border:1px solid #8c7a8e;box-shadow:0 0 0 1px #1a121c, inset 0 0 0 1px #2a1c2c, inset 0 5px 4px -3px rgba(110,80,115,.55)"></div><span class="a t" style="left:586.2px;transform-origin:0 0;top:190.06px;font-size:12.2px;line-height:14.2px;color:#dcd4dc;font-weight:normal;transform:scaleX(0.93);">^F9&nbsp; TitleObject_3</span><span class="a t" style="left:586.2px;transform-origin:0 0;top:203.36px;font-size:12.2px;line-height:14.2px;color:#dcd4dc;font-weight:normal;transform:scaleX(0.89);">proba.spt</span><div class="a" style="left:576.3px;top:224.3px;width:33px;height:25px;background:linear-gradient(#3b2a3e,#45304a 50%,#3e2b42);border:1px solid #8c7a8e;box-shadow:0 0 0 1px #1a121c, inset 0 0 0 1px #2a1c2c, inset 0 5px 4px -3px rgba(110,80,115,.55)"></div><svg class="a" style="left:587.9px;top:234.7px" width="9.4" height="5" viewBox="0 0 9.4 5"><path d="M0 0 H9.4 L4.7 5 Z" fill="#f0e8f0"/></svg><div class="a lcd" style="left:610.1px;top:223.7px;width:114.8px;height:26.3px;border:1px solid #eef0f0;border-left:0;border-top:0"></div><div class="a lcd2" style="left:646.9px;top:223.7px;width:77.2px;height:25.5px;"></div><span class="a t" style="left:633.5px;transform-origin:0 0;top:228.58px;font-size:14.6px;line-height:16.6px;color:#111;font-weight:normal;transform:scaleX(0.95);-webkit-text-stroke:.3px #111">1</span><svg class="a" style="left:636.3px;top:224.3px" width="92" height="27" viewBox="636.3 224.3 92 27" ><path d="M650.55 230.65H656.65V239.95H650.55Z" fill="none" stroke="#000" stroke-width="1.9" stroke-linejoin="round" stroke-linecap="square"/><path d="M661.85 230.65H667.95V239.95H661.85Z" fill="none" stroke="#000" stroke-width="1.9" stroke-linejoin="round" stroke-linecap="square"/><rect x="671.4" y="232.28" width="2" height="2" fill="#000"/><rect x="671.4" y="236.76" width="2" height="2" fill="#000"/><path d="M676.85 230.65H682.95V239.95H676.85Z" fill="none" stroke="#000" stroke-width="1.9" stroke-linejoin="round" stroke-linecap="square"/><path d="M688.15 230.65H694.25V239.95H688.15Z" fill="none" stroke="#000" stroke-width="1.9" stroke-linejoin="round" stroke-linecap="square"/><rect x="697.7" y="232.28" width="2" height="2" fill="#000"/><rect x="697.7" y="236.76" width="2" height="2" fill="#000"/><path d="M703.15 230.65H709.25V235.3H703.15V239.95H709.25" fill="none" stroke="#000" stroke-width="1.9" stroke-linejoin="round" stroke-linecap="square"/><path d="M714.45 230.65H720.55V239.95H714.45M714.45 235.3H720.55" fill="none" stroke="#000" stroke-width="1.9" stroke-linejoin="round" stroke-linecap="square"/><rect x="649.6" y="242.9" width="72.2" height="4.2" fill="#f6f60e"/></svg><div class="a" style="left:726.6px;top:185.7px;width:148.4px;height:36.4px;background:linear-gradient(#3b2a3e,#45304a 50%,#3e2b42);border:1px solid #8c7a8e;box-shadow:0 0 0 1px #1a121c, inset 0 0 0 1px #2a1c2c, inset 0 5px 4px -3px rgba(110,80,115,.55)"></div><span class="a t" style="left:736.5px;transform-origin:0 0;top:190.06px;font-size:12.2px;line-height:14.2px;color:#dcd4dc;font-weight:normal;transform:scaleX(0.93);">^F10&nbsp; TitleObject_4</span><span class="a t" style="left:736.5px;transform-origin:0 0;top:203.36px;font-size:12.2px;line-height:14.2px;color:#dcd4dc;font-weight:normal;transform:scaleX(0.91);">test.SLMovieList</span><div class="a" style="left:726.6px;top:224.3px;width:33px;height:25px;background:linear-gradient(#3b2a3e,#45304a 50%,#3e2b42);border:1px solid #8c7a8e;box-shadow:0 0 0 1px #1a121c, inset 0 0 0 1px #2a1c2c, inset 0 5px 4px -3px rgba(110,80,115,.55)"></div><svg class="a" style="left:738.2px;top:234.7px" width="9.4" height="5" viewBox="0 0 9.4 5"><path d="M0 0 H9.4 L4.7 5 Z" fill="#f0e8f0"/></svg><div class="a lcd" style="left:760.4px;top:223.7px;width:114.8px;height:26.3px;border:1px solid #eef0f0;border-left:0;border-top:0"></div><div class="a lcd2" style="left:797.2px;top:223.7px;width:77.2px;height:25.5px;"></div><svg class="a" style="left:773.4px;top:227.7px" width="17.5" height="16.5" viewBox="0 0 17.5 16.5"><path d="M6.4 .9 H13.2" stroke="#222" stroke-width="1.3"/><path d="M4.8 15.7 H11.6" stroke="#222" stroke-width="1.3"/><path d="M2.6 5.6 L7.4 .8 L9.6 2.8 L4.8 7.6 Z" fill="#f7a81c" stroke="#5a3a08" stroke-width=".5" stroke-linejoin="round"/><path d="M.6 2.2 V9.5 H7.9 Z" fill="#f7a81c" stroke="#5a3a08" stroke-width=".5" stroke-linejoin="round"/><path d="M12.7 8.9 L15 11.1 L10.2 16 L7.9 13.8 Z" fill="#f7a81c" stroke="#5a3a08" stroke-width=".5" stroke-linejoin="round"/><path d="M17 7 H9.7 L17 14.3 Z" fill="#f7a81c" stroke="#5a3a08" stroke-width=".5" stroke-linejoin="round"/></svg><svg class="a" style="left:786.6px;top:224.3px" width="92" height="27" viewBox="786.6 224.3 92 27" ><path d="M800.85 230.65H806.95V239.95H800.85Z" fill="none" stroke="#000" stroke-width="1.9" stroke-linejoin="round" stroke-linecap="square"/><path d="M812.15 230.65H818.25V239.95H812.15Z" fill="none" stroke="#000" stroke-width="1.9" stroke-linejoin="round" stroke-linecap="square"/><rect x="821.7" y="232.28" width="2" height="2" fill="#000"/><rect x="821.7" y="236.76" width="2" height="2" fill="#000"/><path d="M827.15 230.65H833.25V239.95H827.15Z" fill="none" stroke="#000" stroke-width="1.9" stroke-linejoin="round" stroke-linecap="square"/><path d="M838.45 230.65H844.55V239.95H838.45Z" fill="none" stroke="#000" stroke-width="1.9" stroke-linejoin="round" stroke-linecap="square"/><rect x="848" y="232.28" width="2" height="2" fill="#000"/><rect x="848" y="236.76" width="2" height="2" fill="#000"/><path d="M853.45 230.65H859.55V239.95H853.45M853.45 235.3H859.55" fill="none" stroke="#000" stroke-width="1.9" stroke-linejoin="round" stroke-linecap="square"/><path d="M864.75 230.65H870.85V239.95H864.75M864.75 235.3H870.85" fill="none" stroke="#000" stroke-width="1.9" stroke-linejoin="round" stroke-linecap="square"/><rect x="818.6" y="242.9" width="53.4" height="4.2" fill="#f6f60e"/></svg><div class="a" style="left:876.9px;top:185.7px;width:148.4px;height:36.4px;background:linear-gradient(#3b2a3e,#45304a 50%,#3e2b42);border:1px solid #8c7a8e;box-shadow:0 0 0 1px #1a121c, inset 0 0 0 1px #2a1c2c, inset 0 5px 4px -3px rgba(110,80,115,.55)"></div><span class="a t" style="left:886.8px;transform-origin:0 0;top:190.06px;font-size:12.2px;line-height:14.2px;color:#dcd4dc;font-weight:normal;transform:scaleX(0.93);">^F11&nbsp; TitleObject_5</span><span class="a t" style="left:886.8px;transform-origin:0 0;top:203.36px;font-size:12.2px;line-height:14.2px;color:#dcd4dc;font-weight:normal;transform:scaleX(0.91);">Forest.tga</span><div class="a" style="left:876.9px;top:224.3px;width:33px;height:25px;background:linear-gradient(#3b2a3e,#45304a 50%,#3e2b42);border:1px solid #8c7a8e;box-shadow:0 0 0 1px #1a121c, inset 0 0 0 1px #2a1c2c, inset 0 5px 4px -3px rgba(110,80,115,.55)"></div><svg class="a" style="left:888.5px;top:234.7px" width="9.4" height="5" viewBox="0 0 9.4 5"><path d="M0 0 H9.4 L4.7 5 Z" fill="#f0e8f0"/></svg><div class="a lcd" style="left:910.7px;top:223.7px;width:114.8px;height:26.3px;border:1px solid #eef0f0;border-left:0;border-top:0"></div><div class="a lcd2" style="left:947.5px;top:223.7px;width:77.2px;height:25.5px;"></div><svg class="a" style="left:923.7px;top:227.7px" width="17.5" height="16.5" viewBox="0 0 17.5 16.5"><path d="M6.4 .9 H13.2" stroke="#222" stroke-width="1.3"/><path d="M4.8 15.7 H11.6" stroke="#222" stroke-width="1.3"/><path d="M2.6 5.6 L7.4 .8 L9.6 2.8 L4.8 7.6 Z" fill="#f7a81c" stroke="#5a3a08" stroke-width=".5" stroke-linejoin="round"/><path d="M.6 2.2 V9.5 H7.9 Z" fill="#f7a81c" stroke="#5a3a08" stroke-width=".5" stroke-linejoin="round"/><path d="M12.7 8.9 L15 11.1 L10.2 16 L7.9 13.8 Z" fill="#f7a81c" stroke="#5a3a08" stroke-width=".5" stroke-linejoin="round"/><path d="M17 7 H9.7 L17 14.3 Z" fill="#f7a81c" stroke="#5a3a08" stroke-width=".5" stroke-linejoin="round"/></svg><svg class="a" style="left:936.9px;top:224.3px" width="92" height="27" viewBox="936.9 224.3 92 27" ><path d="M951.15 230.65H957.25V239.95H951.15Z" fill="none" stroke="#000" stroke-width="1.9" stroke-linejoin="round" stroke-linecap="square"/><path d="M962.45 230.65H968.55V239.95H962.45Z" fill="none" stroke="#000" stroke-width="1.9" stroke-linejoin="round" stroke-linecap="square"/><rect x="972" y="232.28" width="2" height="2" fill="#000"/><rect x="972" y="236.76" width="2" height="2" fill="#000"/><path d="M977.45 230.65H983.55V239.95H977.45Z" fill="none" stroke="#000" stroke-width="1.9" stroke-linejoin="round" stroke-linecap="square"/><path d="M988.75 230.65H994.85V239.95H988.75Z" fill="none" stroke="#000" stroke-width="1.9" stroke-linejoin="round" stroke-linecap="square"/><rect x="998.3" y="232.28" width="2" height="2" fill="#000"/><rect x="998.3" y="236.76" width="2" height="2" fill="#000"/><path d="M1003.75 230.65H1009.85V239.95H1003.75Z" fill="none" stroke="#000" stroke-width="1.9" stroke-linejoin="round" stroke-linecap="square"/><path d="M1015.05 230.65H1021.15V239.95H1015.05Z" fill="none" stroke="#000" stroke-width="1.9" stroke-linejoin="round" stroke-linecap="square"/></svg><div class="a" style="left:1027.2px;top:185.7px;width:148.4px;height:36.4px;background:linear-gradient(#3b2a3e,#45304a 50%,#3e2b42);border:1px solid #8c7a8e;box-shadow:0 0 0 1px #1a121c, inset 0 0 0 1px #2a1c2c, inset 0 5px 4px -3px rgba(110,80,115,.55)"></div><span class="a t" style="left:1037.1px;transform-origin:0 0;top:190.06px;font-size:12.2px;line-height:14.2px;color:#dcd4dc;font-weight:normal;transform:scaleX(0.93);">^F12&nbsp; TitleObject_6</span><span class="a t" style="left:1037.1px;transform-origin:0 0;top:203.36px;font-size:12.2px;line-height:14.2px;color:#dcd4dc;font-weight:normal;transform:scaleX(0.93);">clip1.avi</span><div class="a" style="left:1027.2px;top:224.3px;width:33px;height:25px;background:linear-gradient(#3b2a3e,#45304a 50%,#3e2b42);border:1px solid #8c7a8e;box-shadow:0 0 0 1px #1a121c, inset 0 0 0 1px #2a1c2c, inset 0 5px 4px -3px rgba(110,80,115,.55)"></div><svg class="a" style="left:1038.8px;top:234.7px" width="9.4" height="5" viewBox="0 0 9.4 5"><path d="M0 0 H9.4 L4.7 5 Z" fill="#f0e8f0"/></svg><div class="a lcd" style="left:1061px;top:223.7px;width:114.8px;height:26.3px;border:1px solid #eef0f0;border-left:0;border-top:0"></div><div class="a lcd2" style="left:1097.8px;top:223.7px;width:77.2px;height:25.5px;"></div><svg class="a" style="left:1074px;top:227.7px" width="17.5" height="16.5" viewBox="0 0 17.5 16.5"><path d="M6.4 .9 H13.2" stroke="#222" stroke-width="1.3"/><path d="M4.8 15.7 H11.6" stroke="#222" stroke-width="1.3"/><path d="M2.6 5.6 L7.4 .8 L9.6 2.8 L4.8 7.6 Z" fill="#f7a81c" stroke="#5a3a08" stroke-width=".5" stroke-linejoin="round"/><path d="M.6 2.2 V9.5 H7.9 Z" fill="#f7a81c" stroke="#5a3a08" stroke-width=".5" stroke-linejoin="round"/><path d="M12.7 8.9 L15 11.1 L10.2 16 L7.9 13.8 Z" fill="#f7a81c" stroke="#5a3a08" stroke-width=".5" stroke-linejoin="round"/><path d="M17 7 H9.7 L17 14.3 Z" fill="#f7a81c" stroke="#5a3a08" stroke-width=".5" stroke-linejoin="round"/></svg><svg class="a" style="left:1087.2px;top:224.3px" width="92" height="27" viewBox="1087.2 224.3 92 27" ><path d="M1101.45 230.65H1107.55V239.95H1101.45Z" fill="none" stroke="#000" stroke-width="1.9" stroke-linejoin="round" stroke-linecap="square"/><path d="M1112.75 230.65H1118.85V239.95H1112.75Z" fill="none" stroke="#000" stroke-width="1.9" stroke-linejoin="round" stroke-linecap="square"/><rect x="1122.3" y="232.28" width="2" height="2" fill="#000"/><rect x="1122.3" y="236.76" width="2" height="2" fill="#000"/><path d="M1127.75 230.65H1133.85V239.95H1127.75Z" fill="none" stroke="#000" stroke-width="1.9" stroke-linejoin="round" stroke-linecap="square"/><path d="M1139.05 230.65H1145.15V239.95H1139.05Z" fill="none" stroke="#000" stroke-width="1.9" stroke-linejoin="round" stroke-linecap="square"/><rect x="1148.6" y="232.28" width="2" height="2" fill="#000"/><rect x="1148.6" y="236.76" width="2" height="2" fill="#000"/><path d="M1154.05 230.65H1160.15V239.95H1154.05Z" fill="none" stroke="#000" stroke-width="1.9" stroke-linejoin="round" stroke-linecap="square"/><path d="M1171.45 230.65H1165.35V235.3H1171.45V239.95H1165.35" fill="none" stroke="#000" stroke-width="1.9" stroke-linejoin="round" stroke-linecap="square"/><rect x="1134.6" y="242.9" width="37.8" height="4.2" fill="#f6f60e"/></svg><div class="a" style="left:740.6px;top:261.4px;width:138.2px;height:32.8px;background:linear-gradient(#9a9a78 0%,#d0d0ac 10%,#bcbc96 30%,#9a9a74 60%,#5c5c40 90%,#3c3c28 100%);border:1px solid #0c0c08;box-shadow:inset 0 0 0 1px rgba(255,255,220,.2)"></div><span class="a t" style="left:771.4px;transform-origin:0 0;top:271.6px;font-size:12.6px;line-height:14.6px;color:#141408;font-weight:normal;transform:scaleX(0.88);">Show 1st frame</span><div class="a mt" style="left:929.2px;top:261.4px;width:79.6px;height:32.6px;"></div><span class="a t" style="left:949.2px;transform-origin:0 0;top:271.6px;font-size:12.6px;line-height:14.6px;color:#111;font-weight:normal;transform:scaleX(0.88);">Settings</span><div class="a mt" style="left:1013.6px;top:261.4px;width:80px;height:32.6px;"></div><span class="a t" style="left:1030px;transform-origin:0 0;top:271.6px;font-size:12.6px;line-height:14.6px;color:#111;font-weight:normal;transform:scaleX(0.9);">Log-book</span><div class="a dk" style="left:1098px;top:261.4px;width:38.2px;height:32.6px;"></div><div class="a mt" style="left:1141.2px;top:261.4px;width:37.4px;height:32.6px;"><svg class="a" style="left:8.6px;top:6.2px" width="19.6" height="18.62" viewBox="0 0 20 19"><path d="M1 5 V17.5 H18.4 V6.6 H9.4 L7.6 4 H2.2 Z" fill="none" stroke="#111" stroke-width="1.1" stroke-linejoin="round"/><path d="M9.4 6.4 L11 2.2 H16.2 L17.4 4.4 V6.4" fill="none" stroke="#111" stroke-width="1.1" stroke-linejoin="round"/></svg></div>
<div class="a" style="left:8.8px;top:308.2px;width:492.4px;height:615.4px;background:#c6c2c6;border-right:2.6px solid #f6f4ee;border-bottom:2.4px solid #fff"></div><div class="a" style="left:8.8px;top:308.2px;width:2.4px;height:613px;background:#8a8678"></div><div class="a" style="left:8.8px;top:308.2px;width:489.8px;height:20.4px;background:#ece9d8"></div><div class="a" style="left:8.8px;top:328.6px;width:489.8px;height:2px;background:#8f8b7c"></div><div class="a" style="left:8.8px;top:327.6px;width:489.8px;height:1px;background:#c8c4b4"></div><div class="a" style="left:8.8px;top:308.2px;width:489.8px;height:1px;background:#fbfaf4"></div><div class="a" style="left:29.4px;top:308.8px;width:1.1px;height:19.2px;background:#b2ae9e"></div><div class="a" style="left:30.5px;top:308.8px;width:1.1px;height:19.2px;background:#fdfcf8"></div><div class="a" style="left:81.6px;top:308.8px;width:1.1px;height:19.2px;background:#b2ae9e"></div><div class="a" style="left:82.7px;top:308.8px;width:1.1px;height:19.2px;background:#fdfcf8"></div><div class="a" style="left:154.3px;top:308.8px;width:1.1px;height:19.2px;background:#b2ae9e"></div><div class="a" style="left:155.4px;top:308.8px;width:1.1px;height:19.2px;background:#fdfcf8"></div><div class="a" style="left:175.3px;top:308.8px;width:1.1px;height:19.2px;background:#b2ae9e"></div><div class="a" style="left:176.4px;top:308.8px;width:1.1px;height:19.2px;background:#fdfcf8"></div><div class="a" style="left:248.3px;top:308.8px;width:1.1px;height:19.2px;background:#b2ae9e"></div><div class="a" style="left:249.4px;top:308.8px;width:1.1px;height:19.2px;background:#fdfcf8"></div><div class="a" style="left:273.7px;top:308.8px;width:1.1px;height:19.2px;background:#b2ae9e"></div><div class="a" style="left:274.8px;top:308.8px;width:1.1px;height:19.2px;background:#fdfcf8"></div><div class="a" style="left:294.1px;top:308.8px;width:1.1px;height:19.2px;background:#b2ae9e"></div><div class="a" style="left:295.2px;top:308.8px;width:1.1px;height:19.2px;background:#fdfcf8"></div><div class="a" style="left:315.1px;top:308.8px;width:1.1px;height:19.2px;background:#b2ae9e"></div><div class="a" style="left:316.2px;top:308.8px;width:1.1px;height:19.2px;background:#fdfcf8"></div><div class="a" style="left:335.9px;top:308.8px;width:1.1px;height:19.2px;background:#b2ae9e"></div><div class="a" style="left:337px;top:308.8px;width:1.1px;height:19.2px;background:#fdfcf8"></div><div class="a" style="left:465.7px;top:308.8px;width:1.1px;height:19.2px;background:#b2ae9e"></div><div class="a" style="left:466.8px;top:308.8px;width:1.1px;height:19.2px;background:#fdfcf8"></div><span class="a t" style="left:57.2px;transform-origin:0 0;top:311.53px;font-size:12.4px;line-height:14.4px;color:#111;font-weight:normal;transform:scaleX(0.93) translateX(-50%);">State</span><span class="a t" style="left:120.05px;transform-origin:0 0;top:311.53px;font-size:12.4px;line-height:14.4px;color:#111;font-weight:normal;transform:scaleX(0.93) translateX(-50%);">Start</span><span class="a t" style="left:212.9px;transform-origin:0 0;top:311.53px;font-size:12.4px;line-height:14.4px;color:#111;font-weight:normal;transform:scaleX(0.93) translateX(-50%);">Length</span><span class="a t" style="left:402.5px;transform-origin:0 0;top:311.53px;font-size:12.4px;line-height:14.4px;color:#111;font-weight:normal;transform:scaleX(0.93) translateX(-50%);">Name</span><svg class="a" style="left:158.6px;top:310.8px" width="16" height="15" viewBox="0 0 16 15"><path d="M6.2 .8 L.8 6.4 H4.2 V14 H14.6 V10.2 H8.2 V6.4 H11.6 Z" fill="#d4ecf2" stroke="#2a3a4a" stroke-width="1.1" stroke-linejoin="round"/></svg><svg class="a" style="left:255px;top:313.2px" width="16.4" height="11.2" viewBox="0 0 16.4 11.2"><path d="M.4 9.4 H3.4 C7.2 9.4 8.8 1.8 12.6 1.8 H16" stroke="#1f4a52" stroke-width="2.6" fill="none"/><path d="M.4 1.8 H3.4 C7.2 1.8 8.8 9.4 12.6 9.4 H16" stroke="#e8341c" stroke-width="2.6" fill="none"/><path d="M.4 9.4 H3.4 C5.2 9.4 6.4 7.8 7.4 6.2" stroke="#1f4a52" stroke-width="2.6" fill="none"/></svg><svg class="a" style="left:277.2px;top:310.6px" width="16" height="16" viewBox="0 0 16 16"><path d="M.9 .5 H11.9 L15.6 3.7 V15.4 H4.7 L.5 11.6 V.9 Z" fill="#181404"/><path d="M1.2 1.2 H12.2 V9.6 H9.8 V3.6 H3.6 V12.8 L1.2 10.8 Z" fill="#eba832"/><path d="M6.9 3.7 H9.7 V9.7 H12.5 V12.5 H6.9 Z" fill="#1c3c80"/><path d="M4.6 5.2 H6.8 V12.6 H12.7 V2.6 L14.9 4.4 V14.7 H5.2 L4.6 14.1 Z" fill="#4cc83c"/><path d="M7.6 4.6 L9 5.4 L8.2 6.6 Z M7.8 10.4 L10.6 9.8 L11.4 11 L8.6 11.6 Z" fill="#5a90d8"/><path d="M5 14.6 H14.9 V13.2 H6.2" fill="none" stroke="#1f7a16" stroke-width=".7"/></svg><svg class="a" style="left:296px;top:309.6px" width="20.4" height="18.2" viewBox="0 0 20.4 18.2"><rect x=".5" y=".5" width="19.4" height="17.2" fill="#a2d2d6" stroke="#8a8a8a" stroke-width="1"/><rect x="1.6" y="1.6" width="17.2" height="15" fill="none" stroke="#f4fafa" stroke-width="1.1"/><text x="10.2" y="14.68" font-family="Liberation Sans" font-weight="bold" font-size="15.5" text-anchor="middle" fill="#000">T</text></svg><div class="a" style="left:11.2px;top:330.8px;width:470px;height:43px;background:#e7e3e7"></div><div class="a" style="left:9.2px;top:331.4px;width:21.3px;height:20.25px;background:#dcdcdc"></div><svg class="a" style="left:15.6px;top:334px" width="12.4" height="15" viewBox="0 0 12.4 15"><path d="M.8 4.4 H5.4 V.8 L11.6 7.5 L5.4 14.2 V10.6 H.8 Z" fill="#bcbcbc"/></svg><div class="a" style="left:30.9px;top:331.4px;width:51.8px;height:20.25px;background:#ffccff"></div><svg class="a" style="left:50.6px;top:333.8px" width="14.28" height="14.89" viewBox="0 0 14 14.6"><path d="M5.7 4.6 H8.1 V7.3 H9.5 V7.9 H10.9 V8.7 H11.7 V13.9 H3.7 V11 L2.5 9.6 L3.5 8.7 L5.7 10 Z" fill="#fff" stroke="#222" stroke-width=".9" stroke-linejoin="round"/><path d="M8.1 7.3 V9.8 M9.5 7.9 V9.8 M10.9 8.7 V9.9 M6.9 6 V9.4" stroke="#777" stroke-width=".8"/><circle cx="6.9" cy="3.3" r="2.9" fill="#d4101c"/></svg><div class="a" style="left:83.1px;top:331.4px;width:72.3px;height:20.25px;background:#aaa6aa"></div><div class="a" style="left:337.4px;top:331.4px;width:129.4px;height:20.25px;background:#ffffcc"></div><span class="a t" style="left:88.2px;transform-origin:0 0;top:334.48px;font-size:12.7px;line-height:14.7px;color:#111;font-weight:normal;transform:scaleX(0.88);">14:31:01.26</span><span class="a t" style="left:342.6px;transform-origin:0 0;top:335.65px;font-size:11px;line-height:13px;color:#333;font-weight:normal;transform:scaleX(0.99);">* * * * *</span><div class="a" style="left:11.4px;top:352.85px;width:20px;height:20.6px;border:1.2px dotted #222"></div><span class="a t" style="left:88.2px;transform-origin:0 0;top:355.33px;font-size:12.7px;line-height:14.7px;color:#111;font-weight:normal;transform:scaleX(0.88);">14:31:01.26</span><span class="a t" style="left:181.8px;transform-origin:0 0;top:355.33px;font-size:12.7px;line-height:14.7px;color:#111;font-weight:normal;transform:scaleX(0.89);">=0:00:00.00</span><span class="a t" style="left:342.6px;transform-origin:0 0;top:356.5px;font-size:11px;line-height:13px;color:#333;font-weight:normal;transform:scaleX(0.99);">* * * * *</span><div class="a" style="left:8.8px;top:374.6px;width:492px;height:9.4px;background:#ece9d8"></div><div class="a" style="left:8.8px;top:376.8px;width:492px;height:1.2px;background:#fff"></div><div class="a" style="left:8.8px;top:378px;width:492px;height:1.2px;background:#aca899"></div><div class="a" style="left:8.8px;top:382.8px;width:492px;height:1.2px;background:#fff"></div><div class="a" style="left:8.8px;top:384px;width:489.8px;height:20.6px;background:#ece9d8"></div><div class="a" style="left:8.8px;top:404.6px;width:489.8px;height:2px;background:#8f8b7c"></div><div class="a" style="left:8.8px;top:403.6px;width:489.8px;height:1px;background:#c8c4b4"></div><div class="a" style="left:8.8px;top:384px;width:489.8px;height:1px;background:#fbfaf4"></div><div class="a" style="left:29.4px;top:384.6px;width:1.1px;height:19.4px;background:#b2ae9e"></div><div class="a" style="left:30.5px;top:384.6px;width:1.1px;height:19.4px;background:#fdfcf8"></div><div class="a" style="left:81.6px;top:384.6px;width:1.1px;height:19.4px;background:#b2ae9e"></div><div class="a" style="left:82.7px;top:384.6px;width:1.1px;height:19.4px;background:#fdfcf8"></div><div class="a" style="left:154.3px;top:384.6px;width:1.1px;height:19.4px;background:#b2ae9e"></div><div class="a" style="left:155.4px;top:384.6px;width:1.1px;height:19.4px;background:#fdfcf8"></div><div class="a" style="left:175.3px;top:384.6px;width:1.1px;height:19.4px;background:#b2ae9e"></div><div class="a" style="left:176.4px;top:384.6px;width:1.1px;height:19.4px;background:#fdfcf8"></div><div class="a" style="left:248.3px;top:384.6px;width:1.1px;height:19.4px;background:#b2ae9e"></div><div class="a" style="left:249.4px;top:384.6px;width:1.1px;height:19.4px;background:#fdfcf8"></div><div class="a" style="left:273.7px;top:384.6px;width:1.1px;height:19.4px;background:#b2ae9e"></div><div class="a" style="left:274.8px;top:384.6px;width:1.1px;height:19.4px;background:#fdfcf8"></div><div class="a" style="left:294.1px;top:384.6px;width:1.1px;height:19.4px;background:#b2ae9e"></div><div class="a" style="left:295.2px;top:384.6px;width:1.1px;height:19.4px;background:#fdfcf8"></div><div class="a" style="left:315.1px;top:384.6px;width:1.1px;height:19.4px;background:#b2ae9e"></div><div class="a" style="left:316.2px;top:384.6px;width:1.1px;height:19.4px;background:#fdfcf8"></div><div class="a" style="left:335.9px;top:384.6px;width:1.1px;height:19.4px;background:#b2ae9e"></div><div class="a" style="left:337px;top:384.6px;width:1.1px;height:19.4px;background:#fdfcf8"></div><div class="a" style="left:465.7px;top:384.6px;width:1.1px;height:19.4px;background:#b2ae9e"></div><div class="a" style="left:466.8px;top:384.6px;width:1.1px;height:19.4px;background:#fdfcf8"></div><span class="a t" style="left:57.2px;transform-origin:0 0;top:387.33px;font-size:12.4px;line-height:14.4px;color:#111;font-weight:normal;transform:scaleX(0.93) translateX(-50%);">State</span><span class="a t" style="left:120.05px;transform-origin:0 0;top:387.33px;font-size:12.4px;line-height:14.4px;color:#111;font-weight:normal;transform:scaleX(0.93) translateX(-50%);">Start</span><span class="a t" style="left:212.9px;transform-origin:0 0;top:387.33px;font-size:12.4px;line-height:14.4px;color:#111;font-weight:normal;transform:scaleX(0.93) translateX(-50%);">Length</span><span class="a t" style="left:402.5px;transform-origin:0 0;top:387.33px;font-size:12.4px;line-height:14.4px;color:#111;font-weight:normal;transform:scaleX(0.93) translateX(-50%);">Name</span><svg class="a" style="left:158.6px;top:386.6px" width="16" height="15" viewBox="0 0 16 15"><path d="M6.2 .8 L.8 6.4 H4.2 V14 H14.6 V10.2 H8.2 V6.4 H11.6 Z" fill="#d4ecf2" stroke="#2a3a4a" stroke-width="1.1" stroke-linejoin="round"/></svg><svg class="a" style="left:255px;top:389px" width="16.4" height="11.2" viewBox="0 0 16.4 11.2"><path d="M.4 9.4 H3.4 C7.2 9.4 8.8 1.8 12.6 1.8 H16" stroke="#1f4a52" stroke-width="2.6" fill="none"/><path d="M.4 1.8 H3.4 C7.2 1.8 8.8 9.4 12.6 9.4 H16" stroke="#e8341c" stroke-width="2.6" fill="none"/><path d="M.4 9.4 H3.4 C5.2 9.4 6.4 7.8 7.4 6.2" stroke="#1f4a52" stroke-width="2.6" fill="none"/></svg><svg class="a" style="left:277.2px;top:386.4px" width="16" height="16" viewBox="0 0 16 16"><path d="M.9 .5 H11.9 L15.6 3.7 V15.4 H4.7 L.5 11.6 V.9 Z" fill="#181404"/><path d="M1.2 1.2 H12.2 V9.6 H9.8 V3.6 H3.6 V12.8 L1.2 10.8 Z" fill="#eba832"/><path d="M6.9 3.7 H9.7 V9.7 H12.5 V12.5 H6.9 Z" fill="#1c3c80"/><path d="M4.6 5.2 H6.8 V12.6 H12.7 V2.6 L14.9 4.4 V14.7 H5.2 L4.6 14.1 Z" fill="#4cc83c"/><path d="M7.6 4.6 L9 5.4 L8.2 6.6 Z M7.8 10.4 L10.6 9.8 L11.4 11 L8.6 11.6 Z" fill="#5a90d8"/><path d="M5 14.6 H14.9 V13.2 H6.2" fill="none" stroke="#1f7a16" stroke-width=".7"/></svg><svg class="a" style="left:296px;top:385.4px" width="20.4" height="18.2" viewBox="0 0 20.4 18.2"><rect x=".5" y=".5" width="19.4" height="17.2" fill="#a2d2d6" stroke="#8a8a8a" stroke-width="1"/><rect x="1.6" y="1.6" width="17.2" height="15" fill="none" stroke="#f4fafa" stroke-width="1.1"/><text x="10.2" y="14.68" font-family="Liberation Sans" font-weight="bold" font-size="15.5" text-anchor="middle" fill="#000">T</text></svg><svg class="a" style="left:13.2px;top:386.8px" width="12.65" height="15.3" viewBox="0 0 12.4 15"><clipPath id="ra518"><rect x="0" y="0" width="12" height="7.5"/></clipPath><path d="M.8 4.4 H5.4 V.8 L11.6 7.5 L5.4 14.2 V10.6 H.8 Z" fill="#cfe6ee"/><path d="M.8 4.4 H5.4 V.8 L11.6 7.5 L5.4 14.2 V10.6 H.8 Z" fill="#e8341c" clip-path="url(#ra518)"/><path d="M.8 4.4 H5.4 V.8 L11.6 7.5 L5.4 14.2 V10.6 H.8 Z" fill="none" stroke="#222" stroke-width="1" stroke-linejoin="round"/></svg><div class="a" style="left:11.2px;top:406.8px;width:470px;height:229.95px;background:#e7e3e7"></div><div class="a" style="left:83.1px;top:407.6px;width:72.3px;height:20.15px;background:#ffc4c4"></div><div class="a" style="left:337.4px;top:407.6px;width:129.4px;height:20.15px;background:#ffffcc"></div><div class="a" style="left:11.6px;top:407.6px;width:18.9px;height:20.15px;background:#ffff00"></div><svg class="a" style="left:14.6px;top:410px" width="12.4" height="15" viewBox="0 0 12.4 15"><clipPath id="ra556"><rect x="0" y="0" width="12" height="7.5"/></clipPath><path d="M.8 4.4 H5.4 V.8 L11.6 7.5 L5.4 14.2 V10.6 H.8 Z" fill="#cfe6ee"/><path d="M.8 4.4 H5.4 V.8 L11.6 7.5 L5.4 14.2 V10.6 H.8 Z" fill="#e8341c" clip-path="url(#ra556)"/><path d="M.8 4.4 H5.4 V.8 L11.6 7.5 L5.4 14.2 V10.6 H.8 Z" fill="none" stroke="#222" stroke-width="1" stroke-linejoin="round"/></svg><div class="a" style="left:30.9px;top:407.6px;width:51.8px;height:20.15px;background:#ffccff"></div><svg class="a" style="left:48.8px;top:410.2px" width="16" height="15" viewBox="0 0 16 15"><path d="M6.2 .8 L.8 6.4 H4.2 V14 H14.6 V10.2 H8.2 V6.4 H11.6 Z" fill="#d4ecf2" stroke="#2a3a4a" stroke-width="1.1" stroke-linejoin="round"/></svg><span class="a t" style="left:88.2px;transform-origin:0 0;top:410.68px;font-size:12.7px;line-height:14.7px;color:#111;font-weight:normal;transform:scaleX(0.88);">14:31:01.26</span><span class="a t" style="left:342.6px;transform-origin:0 0;top:411.85px;font-size:11px;line-height:13px;color:#333;font-weight:normal;transform:scaleX(0.99);">* * * * *</span><div class="a" style="left:155.8px;top:428.45px;width:20.6px;height:20.15px;background:#ccffff"></div><div class="a" style="left:176.8px;top:428.45px;width:72.6px;height:20.15px;background:#ffffff"></div><div class="a" style="left:249.8px;top:428.45px;width:25px;height:20.15px;background:#ffffcc"></div><div class="a" style="left:275.2px;top:428.45px;width:20px;height:20.15px;background:#ffccff"></div><div class="a" style="left:31.2px;top:429.45px;width:51px;height:18.9px;background:#067c06"></div><span class="a t" style="left:35.8px;transform-origin:0 0;top:431.98px;font-size:13px;line-height:15px;color:#012a01;font-weight:normal;transform:scaleX(0.86);">READY</span><svg class="a" style="left:158.6px;top:431.05px" width="16" height="15" viewBox="0 0 16 15"><path d="M6.2 .8 L.8 6.4 H4.2 V14 H14.6 V10.2 H8.2 V6.4 H11.6 Z" fill="#d4ecf2" stroke="#2a3a4a" stroke-width="1.1" stroke-linejoin="round"/></svg><svg class="a" style="left:296.4px;top:429.65px" width="19.4" height="18.4" viewBox="0 0 19.4 18.4"><rect x=".5" y=".5" width="18.4" height="17.4" fill="#c9c5c9" stroke="#8a8a8a" stroke-width="1"/><rect x="1.6" y="1.6" width="16.2" height="15.2" fill="none" stroke="#f4fafa" stroke-width="1.1"/><text x="9.7" y="14.6" font-family="Liberation Sans" font-weight="normal" font-size="15" text-anchor="middle" fill="#6e6e6e">T</text></svg><svg class="a" style="left:318.2px;top:428.85px" width="20.2" height="20.4" viewBox="0 0 20.2 20.4"><rect x=".2" y=".6" width="19" height="17.4" fill="#161616"/><rect x="1.3" y="1.6" width="1.7" height="1.6" fill="#d8d8d8"/><rect x="1.3" y="15.4" width="1.7" height="1.6" fill="#d8d8d8"/><rect x="4.4" y="1.6" width="1.7" height="1.6" fill="#d8d8d8"/><rect x="4.4" y="15.4" width="1.7" height="1.6" fill="#d8d8d8"/><rect x="7.5" y="1.6" width="1.7" height="1.6" fill="#d8d8d8"/><rect x="7.5" y="15.4" width="1.7" height="1.6" fill="#d8d8d8"/><rect x="10.6" y="1.6" width="1.7" height="1.6" fill="#d8d8d8"/><rect x="10.6" y="15.4" width="1.7" height="1.6" fill="#d8d8d8"/><rect x="13.7" y="1.6" width="1.7" height="1.6" fill="#d8d8d8"/><rect x="13.7" y="15.4" width="1.7" height="1.6" fill="#d8d8d8"/><rect x="16.8" y="1.6" width="1.7" height="1.6" fill="#d8d8d8"/><rect x="16.8" y="15.4" width="1.7" height="1.6" fill="#d8d8d8"/><rect x="1.6" y="4.6" width="7.6" height="9.4" fill="#4a98a2"/><rect x="10.6" y="4.6" width="7.6" height="9.4" fill="#a4dade"/><rect x="5" y="10.4" width="15" height="9.8" fill="#0a0a0a"/><path d="M6 15.4 H7.4 L8.2 12.2 L9.2 18.4 L10.2 13 L11 17.4 L11.8 14.4 L12.6 16.2 H13.6 L14.4 13 L15.2 17.8 L16.2 14 L17 16.6 L17.8 15.4 H19.4" stroke="#1fd86a" stroke-width="1.2" fill="none"/></svg><span class="a t" style="left:88.2px;transform-origin:0 0;top:431.53px;font-size:12.7px;line-height:14.7px;color:#111;font-weight:normal;transform:scaleX(0.88);">14:31:01.26</span><span class="a t" style="left:181.8px;transform-origin:0 0;top:431.53px;font-size:12.7px;line-height:14.7px;color:#111;font-weight:normal;transform:scaleX(0.89);">(0:00:30.00)</span><span class="a t" style="left:252px;transform-origin:0 0;top:431.53px;font-size:12.7px;line-height:14.7px;color:#111;font-weight:normal;transform:scaleX(0.87);">0.10</span><span class="a t" style="left:342.6px;transform-origin:0 0;top:431.53px;font-size:12.7px;line-height:14.7px;color:#111;font-weight:normal;transform:scaleX(0.9);">golden.avi</span><div class="a" style="left:155.8px;top:449.3px;width:20.6px;height:20.15px;background:#ffccff"></div><div class="a" style="left:176.8px;top:449.3px;width:72.6px;height:20.15px;background:#ffffff"></div><div class="a" style="left:249.8px;top:449.3px;width:25px;height:20.15px;background:#ffffcc"></div><div class="a" style="left:275.2px;top:449.3px;width:20px;height:20.15px;background:#ffccff"></div><div class="a" style="left:31.2px;top:450.3px;width:51px;height:18.9px;background:#067c06"></div><span class="a t" style="left:35.8px;transform-origin:0 0;top:452.83px;font-size:13px;line-height:15px;color:#012a01;font-weight:normal;transform:scaleX(0.86);">READY</span><svg class="a" style="left:296.4px;top:450.5px" width="19.4" height="18.4" viewBox="0 0 19.4 18.4"><rect x=".5" y=".5" width="18.4" height="17.4" fill="#c9c5c9" stroke="#8a8a8a" stroke-width="1"/><rect x="1.6" y="1.6" width="16.2" height="15.2" fill="none" stroke="#f4fafa" stroke-width="1.1"/><text x="9.7" y="14.6" font-family="Liberation Sans" font-weight="normal" font-size="15" text-anchor="middle" fill="#6e6e6e">T</text></svg><svg class="a" style="left:318px;top:450.5px" width="20" height="18.4" viewBox="0 0 20 18.4"><path d="M.4 1 H19.6 V17.6 H.4 Z" fill="#f8b626" stroke="#8a5a08" stroke-width=".6"/><rect x="9.6" y="2.6" width="5.6" height="2.4" fill="#111"/><path d="M1.2 6.4 H18.8 M1.2 8.8 H18.8 M1.2 11.2 H18.8" stroke="#111" stroke-width="1.3" stroke-dasharray="2.4 .9"/><path d="M4.6 4.6 V12 M8.6 4.6 V12 M12.6 3 V12 M16.4 4.6 V12" stroke="#111" stroke-width="1.2"/><path d="M.6 12.4 H5.6 L4 14.4 H.6 Z" fill="#111"/></svg><span class="a t" style="left:88.2px;transform-origin:0 0;top:452.38px;font-size:12.7px;line-height:14.7px;color:#111;font-weight:normal;transform:scaleX(0.88);">14:31:01.26</span><span class="a t" style="left:181.8px;transform-origin:0 0;top:452.38px;font-size:12.7px;line-height:14.7px;color:#111;font-weight:normal;transform:scaleX(0.9);">0:00:29.92</span><span class="a t" style="left:342.6px;transform-origin:0 0;top:452.38px;font-size:12.7px;line-height:14.7px;color:#111;font-weight:normal;transform:scaleX(0.89);">golden.wav</span><div class="a" style="left:176.8px;top:470.15px;width:72.6px;height:20.15px;background:#ffffcc"></div><div class="a" style="left:275.2px;top:470.15px;width:20px;height:20.15px;background:#ffccff"></div><div class="a" style="left:31.2px;top:471.15px;width:51px;height:18.9px;background:#067c06"></div><span class="a t" style="left:35.8px;transform-origin:0 0;top:473.68px;font-size:13px;line-height:15px;color:#012a01;font-weight:normal;transform:scaleX(0.86);">READY</span><svg class="a" style="left:296.4px;top:471.35px" width="19.4" height="18.4" viewBox="0 0 19.4 18.4"><rect x=".5" y=".5" width="18.4" height="17.4" fill="#c9c5c9" stroke="#8a8a8a" stroke-width="1"/><rect x="1.6" y="1.6" width="16.2" height="15.2" fill="none" stroke="#f4fafa" stroke-width="1.1"/><text x="9.7" y="14.6" font-family="Liberation Sans" font-weight="normal" font-size="15" text-anchor="middle" fill="#6e6e6e">T</text></svg><svg class="a" style="left:320.6px;top:471.95px" width="14" height="17.2" viewBox="0 0 14 17.2"><path d="M1.4 1.4 H12.6 V3.4 L8.4 8.6 L12.6 13.8 V15.8 H1.4 V13.8 L5.6 8.6 L1.4 3.4 Z" fill="#f8f8f8" stroke="#333" stroke-width="1.1" stroke-linejoin="round"/><path d="M.8 1.2 H13.2 M.8 16 H13.2" stroke="#222" stroke-width="1.7"/><path d="M4 5 H10 L7 8.4 Z" fill="#aaa"/><path d="M3.4 14.4 L7 11.4 L10.6 14.4 Z" fill="#aaa"/></svg><span class="a t" style="left:88.2px;transform-origin:0 0;top:473.23px;font-size:12.7px;line-height:14.7px;color:#111;font-weight:normal;transform:scaleX(0.88);">14:31:31.18</span><span class="a t" style="left:181.8px;transform-origin:0 0;top:473.23px;font-size:12.7px;line-height:14.7px;color:#111;font-weight:normal;transform:scaleX(0.9);">0:00:01.00</span><div class="a" style="left:176.8px;top:491px;width:72.6px;height:20.15px;background:#ffffcc"></div><div class="a" style="left:249.8px;top:491px;width:25px;height:20.15px;background:#ffffcc"></div><div class="a" style="left:31.2px;top:492px;width:51px;height:18.9px;background:#067c06"></div><span class="a t" style="left:35.8px;transform-origin:0 0;top:494.53px;font-size:13px;line-height:15px;color:#012a01;font-weight:normal;transform:scaleX(0.86);">READY</span><svg class="a" style="left:296.4px;top:492.2px" width="19.4" height="18.4" viewBox="0 0 19.4 18.4"><rect x=".5" y=".5" width="18.4" height="17.4" fill="#c9c5c9" stroke="#8a8a8a" stroke-width="1"/><rect x="1.6" y="1.6" width="16.2" height="15.2" fill="none" stroke="#f4fafa" stroke-width="1.1"/><text x="9.7" y="14.6" font-family="Liberation Sans" font-weight="normal" font-size="15" text-anchor="middle" fill="#6e6e6e">T</text></svg><svg class="a" style="left:317.6px;top:492.4px" width="13.8" height="14" viewBox="0 0 13.8 14"><rect x=".6" y=".6" width="12.6" height="12.8" fill="#1fdc1f" stroke="#4a4a4a" stroke-width="1"/><rect x="1.7" y="1.7" width="10.4" height="10.6" fill="none" stroke="rgba(255,255,255,.55)" stroke-width=".8"/><text x="6.9" y="11.3" font-family="Liberation Sans" font-weight="bold" font-size="11.5" text-anchor="middle" fill="#000">T</text></svg><span class="a t" style="left:88.2px;transform-origin:0 0;top:494.08px;font-size:12.7px;line-height:14.7px;color:#111;font-weight:normal;transform:scaleX(0.88);">14:31:32.18</span><span class="a t" style="left:181.8px;transform-origin:0 0;top:494.08px;font-size:12.7px;line-height:14.7px;color:#111;font-weight:normal;transform:scaleX(0.9);">0:00:31.00</span><span class="a t" style="left:252px;transform-origin:0 0;top:494.08px;font-size:12.7px;line-height:14.7px;color:#111;font-weight:normal;transform:scaleX(0.87);">0.10</span><span class="a t" style="left:342.6px;transform-origin:0 0;top:494.08px;font-size:12.7px;line-height:14.7px;color:#111;font-weight:normal;transform:scaleX(0.89);">{TitleObject_1} On</span><div class="a" style="left:176.8px;top:511.85px;width:72.6px;height:20.15px;background:#ffffcc"></div><div class="a" style="left:249.8px;top:511.85px;width:25px;height:20.15px;background:#ffffcc"></div><div class="a" style="left:31.2px;top:512.85px;width:51px;height:18.9px;background:#067c06"></div><span class="a t" style="left:35.8px;transform-origin:0 0;top:515.38px;font-size:13px;line-height:15px;color:#012a01;font-weight:normal;transform:scaleX(0.86);">READY</span><svg class="a" style="left:296.4px;top:513.05px" width="19.4" height="18.4" viewBox="0 0 19.4 18.4"><rect x=".5" y=".5" width="18.4" height="17.4" fill="#c9c5c9" stroke="#8a8a8a" stroke-width="1"/><rect x="1.6" y="1.6" width="16.2" height="15.2" fill="none" stroke="#f4fafa" stroke-width="1.1"/><text x="9.7" y="14.6" font-family="Liberation Sans" font-weight="normal" font-size="15" text-anchor="middle" fill="#6e6e6e">T</text></svg><svg class="a" style="left:317.6px;top:513.25px" width="13.8" height="14" viewBox="0 0 13.8 14"><rect x=".6" y=".6" width="12.6" height="12.8" fill="#f4f01a" stroke="#4a4a4a" stroke-width="1"/><rect x="1.7" y="1.7" width="10.4" height="10.6" fill="none" stroke="rgba(255,255,255,.55)" stroke-width=".8"/><text x="6.9" y="11.3" font-family="Liberation Sans" font-weight="bold" font-size="11.5" text-anchor="middle" fill="#000">T</text></svg><span class="a t" style="left:88.2px;transform-origin:0 0;top:514.93px;font-size:12.7px;line-height:14.7px;color:#111;font-weight:normal;transform:scaleX(0.88);">14:32:03.18</span><span class="a t" style="left:181.8px;transform-origin:0 0;top:514.93px;font-size:12.7px;line-height:14.7px;color:#111;font-weight:normal;transform:scaleX(0.9);">0:00:01.00</span><span class="a t" style="left:252px;transform-origin:0 0;top:514.93px;font-size:12.7px;line-height:14.7px;color:#111;font-weight:normal;transform:scaleX(0.87);">0.10</span><span class="a t" style="left:342.6px;transform-origin:0 0;top:514.93px;font-size:12.7px;line-height:14.7px;color:#111;font-weight:normal;transform:scaleX(0.89);">{TitleObject_1} Off</span><div class="a" style="left:176.8px;top:532.7px;width:72.6px;height:20.15px;background:#ffffcc"></div><div class="a" style="left:275.2px;top:532.7px;width:20px;height:20.15px;background:#ffccff"></div><div class="a" style="left:31.2px;top:533.7px;width:51px;height:18.9px;background:#067c06"></div><span class="a t" style="left:35.8px;transform-origin:0 0;top:536.23px;font-size:13px;line-height:15px;color:#012a01;font-weight:normal;transform:scaleX(0.86);">READY</span><svg class="a" style="left:296.4px;top:533.9px" width="19.4" height="18.4" viewBox="0 0 19.4 18.4"><rect x=".5" y=".5" width="18.4" height="17.4" fill="#c9c5c9" stroke="#8a8a8a" stroke-width="1"/><rect x="1.6" y="1.6" width="16.2" height="15.2" fill="none" stroke="#f4fafa" stroke-width="1.1"/><text x="9.7" y="14.6" font-family="Liberation Sans" font-weight="normal" font-size="15" text-anchor="middle" fill="#6e6e6e">T</text></svg><svg class="a" style="left:320.6px;top:534.5px" width="14" height="17.2" viewBox="0 0 14 17.2"><path d="M1.4 1.4 H12.6 V3.4 L8.4 8.6 L12.6 13.8 V15.8 H1.4 V13.8 L5.6 8.6 L1.4 3.4 Z" fill="#f8f8f8" stroke="#333" stroke-width="1.1" stroke-linejoin="round"/><path d="M.8 1.2 H13.2 M.8 16 H13.2" stroke="#222" stroke-width="1.7"/><path d="M4 5 H10 L7 8.4 Z" fill="#aaa"/><path d="M3.4 14.4 L7 11.4 L10.6 14.4 Z" fill="#aaa"/></svg><span class="a t" style="left:88.2px;transform-origin:0 0;top:535.78px;font-size:12.7px;line-height:14.7px;color:#111;font-weight:normal;transform:scaleX(0.88);">14:32:04.18</span><span class="a t" style="left:181.8px;transform-origin:0 0;top:535.78px;font-size:12.7px;line-height:14.7px;color:#111;font-weight:normal;transform:scaleX(0.9);">0:00:01.00</span><div class="a" style="left:155.8px;top:553.55px;width:20.6px;height:20.15px;background:#ffccff"></div><div class="a" style="left:249.8px;top:553.55px;width:25px;height:20.15px;background:#ffffcc"></div><div class="a" style="left:31.2px;top:554.55px;width:51px;height:18.9px;background:#067c06"></div><span class="a t" style="left:35.8px;transform-origin:0 0;top:557.08px;font-size:13px;line-height:15px;color:#012a01;font-weight:normal;transform:scaleX(0.86);">READY</span><svg class="a" style="left:296.4px;top:554.75px" width="19.4" height="18.4" viewBox="0 0 19.4 18.4"><rect x=".5" y=".5" width="18.4" height="17.4" fill="#c9c5c9" stroke="#8a8a8a" stroke-width="1"/><rect x="1.6" y="1.6" width="16.2" height="15.2" fill="none" stroke="#f4fafa" stroke-width="1.1"/><text x="9.7" y="14.6" font-family="Liberation Sans" font-weight="normal" font-size="15" text-anchor="middle" fill="#6e6e6e">T</text></svg><svg class="a" style="left:317.2px;top:554.15px" width="20.68" height="19.74" viewBox="0 0 22 21"><rect x=".6" y=".6" width="17.4" height="16.6" fill="#cfe8ea" stroke="#8a8a8a" stroke-width="1"/><rect x="1.6" y="1.6" width="15.4" height="14.6" fill="none" stroke="#f2ffff" stroke-width=".9"/><text x="8.6" y="14.6" font-family="Liberation Sans" font-weight="bold" font-size="15" text-anchor="middle" fill="#111">T</text><path d="M11.6 8.6 H21 V17 L17.6 20.4 H11.6 Z" fill="#f08a1c" stroke="#7a3a08" stroke-width=".8"/><path d="M13.4 11 H19.4 M13.4 13.2 H19.4 M13.4 15.4 H17.4" stroke="#ffe4b0" stroke-width="1"/><path d="M17.6 20.4 V17 H21 Z" fill="#fff" stroke="#7a3a08" stroke-width=".5"/></svg><span class="a t" style="left:88.2px;transform-origin:0 0;top:556.63px;font-size:12.7px;line-height:14.7px;color:#111;font-weight:normal;transform:scaleX(0.88);">14:32:05.18</span><span class="a t" style="left:181.8px;transform-origin:0 0;top:556.63px;font-size:12.7px;line-height:14.7px;color:#111;font-weight:normal;transform:scaleX(0.9);">0:00:23.44</span><span class="a t" style="left:252px;transform-origin:0 0;top:556.63px;font-size:12.7px;line-height:14.7px;color:#111;font-weight:normal;transform:scaleX(0.87);">0.10</span><span class="a t" style="left:342.6px;transform-origin:0 0;top:556.63px;font-size:12.7px;line-height:14.7px;color:#111;font-weight:normal;transform:scaleX(0.88);">{TitleObject_3} proba.spt</span><div class="a" style="left:155.8px;top:574.4px;width:20.6px;height:20.15px;background:#ffccff"></div><div class="a" style="left:176.8px;top:574.4px;width:72.6px;height:20.15px;background:#ffffff"></div><div class="a" style="left:249.8px;top:574.4px;width:25px;height:20.15px;background:#ffffcc"></div><svg class="a" style="left:296.4px;top:575.6px" width="19.4" height="18.4" viewBox="0 0 19.4 18.4"><rect x=".5" y=".5" width="18.4" height="17.4" fill="#a2d2d6" stroke="#8a8a8a" stroke-width="1"/><rect x="1.6" y="1.6" width="16.2" height="15.2" fill="none" stroke="#f4fafa" stroke-width="1.1"/><text x="9.7" y="14.6" font-family="Liberation Sans" font-weight="bold" font-size="15" text-anchor="middle" fill="#000">T</text></svg><svg class="a" style="left:277.4px;top:576.8px" width="16" height="16" viewBox="0 0 16 16"><path d="M.9 .5 H11.9 L15.6 3.7 V15.4 H4.7 L.5 11.6 V.9 Z" fill="#181404"/><path d="M1.2 1.2 H12.2 V9.6 H9.8 V3.6 H3.6 V12.8 L1.2 10.8 Z" fill="#eba832"/><path d="M6.9 3.7 H9.7 V9.7 H12.5 V12.5 H6.9 Z" fill="#1c3c80"/><path d="M4.6 5.2 H6.8 V12.6 H12.7 V2.6 L14.9 4.4 V14.7 H5.2 L4.6 14.1 Z" fill="#4cc83c"/><path d="M7.6 4.6 L9 5.4 L8.2 6.6 Z M7.8 10.4 L10.6 9.8 L11.4 11 L8.6 11.6 Z" fill="#5a90d8"/><path d="M5 14.6 H14.9 V13.2 H6.2" fill="none" stroke="#1f7a16" stroke-width=".7"/></svg><svg class="a" style="left:318.2px;top:575.2px" width="20.2" height="20.4" viewBox="0 0 20.2 20.4"><rect x=".2" y=".6" width="19" height="17.4" fill="#161616"/><rect x="1.3" y="1.6" width="1.7" height="1.6" fill="#d8d8d8"/><rect x="1.3" y="15.4" width="1.7" height="1.6" fill="#d8d8d8"/><rect x="4.4" y="1.6" width="1.7" height="1.6" fill="#d8d8d8"/><rect x="4.4" y="15.4" width="1.7" height="1.6" fill="#d8d8d8"/><rect x="7.5" y="1.6" width="1.7" height="1.6" fill="#d8d8d8"/><rect x="7.5" y="15.4" width="1.7" height="1.6" fill="#d8d8d8"/><rect x="10.6" y="1.6" width="1.7" height="1.6" fill="#d8d8d8"/><rect x="10.6" y="15.4" width="1.7" height="1.6" fill="#d8d8d8"/><rect x="13.7" y="1.6" width="1.7" height="1.6" fill="#d8d8d8"/><rect x="13.7" y="15.4" width="1.7" height="1.6" fill="#d8d8d8"/><rect x="16.8" y="1.6" width="1.7" height="1.6" fill="#d8d8d8"/><rect x="16.8" y="15.4" width="1.7" height="1.6" fill="#d8d8d8"/><rect x="1.6" y="4.6" width="7.6" height="9.4" fill="#4a98a2"/><rect x="10.6" y="4.6" width="7.6" height="9.4" fill="#a4dade"/></svg><span class="a t" style="left:88.2px;transform-origin:0 0;top:577.48px;font-size:12.7px;line-height:14.7px;color:#111;font-weight:normal;transform:scaleX(0.88);">14:32:28.62</span><span class="a t" style="left:181.8px;transform-origin:0 0;top:577.48px;font-size:12.7px;line-height:14.7px;color:#111;font-weight:normal;transform:scaleX(0.9);">0:00:09.92</span><span class="a t" style="left:252px;transform-origin:0 0;top:577.48px;font-size:12.7px;line-height:14.7px;color:#111;font-weight:normal;transform:scaleX(0.87);">0.10</span><span class="a t" style="left:342.6px;transform-origin:0 0;top:577.48px;font-size:12.7px;line-height:14.7px;color:#111;font-weight:normal;transform:scaleX(0.89);">clip1.avi</span><div class="a" style="left:155.8px;top:595.25px;width:20.6px;height:20.15px;background:#ffccff"></div><div class="a" style="left:176.8px;top:595.25px;width:72.6px;height:20.15px;background:#ffffff"></div><div class="a" style="left:249.8px;top:595.25px;width:25px;height:20.15px;background:#ffffcc"></div><div class="a" style="left:275.2px;top:595.25px;width:20px;height:20.15px;background:#ffccff"></div><div class="a" style="left:337.4px;top:595.25px;width:143.8px;height:20.15px;background:#c4ffc4"></div><svg class="a" style="left:465.4px;top:595.65px" width="15.68" height="18.62" viewBox="0 0 16 19"><rect x="11.2" y=".8" width="3.6" height="3" fill="#d4ecf2" stroke="#2a3a4a" stroke-width="1"/><path d="M11.2 5.6 H14.8 V15 H7 V18 L.8 12.8 L7 7.8 V11 H11.2 Z" fill="#d4ecf2" stroke="#2a3a4a" stroke-width="1.1" stroke-linejoin="round"/></svg><svg class="a" style="left:296.4px;top:596.45px" width="19.4" height="18.4" viewBox="0 0 19.4 18.4"><rect x=".5" y=".5" width="18.4" height="17.4" fill="#c9c5c9" stroke="#8a8a8a" stroke-width="1"/><rect x="1.6" y="1.6" width="16.2" height="15.2" fill="none" stroke="#f4fafa" stroke-width="1.1"/><text x="9.7" y="14.6" font-family="Liberation Sans" font-weight="normal" font-size="15" text-anchor="middle" fill="#6e6e6e">T</text></svg><svg class="a" style="left:277.4px;top:597.65px" width="16" height="16" viewBox="0 0 16 16"><path d="M.9 .5 H11.9 L15.6 3.7 V15.4 H4.7 L.5 11.6 V.9 Z" fill="#181404"/><path d="M1.2 1.2 H12.2 V9.6 H9.8 V3.6 H3.6 V12.8 L1.2 10.8 Z" fill="#a8a8a8"/><path d="M6.9 3.7 H9.7 V9.7 H12.5 V12.5 H6.9 Z" fill="#8e8e8e"/><path d="M4.6 5.2 H6.8 V12.6 H12.7 V2.6 L14.9 4.4 V14.7 H5.2 L4.6 14.1 Z" fill="#bcbcbc"/><path d="M7.6 4.6 L9 5.4 L8.2 6.6 Z M7.8 10.4 L10.6 9.8 L11.4 11 L8.6 11.6 Z" fill="#a0a0a0"/><path d="M5 14.6 H14.9 V13.2 H6.2" fill="none" stroke="#1f7a16" stroke-width=".7"/></svg><svg class="a" style="left:318.2px;top:596.05px" width="20.2" height="20.4" viewBox="0 0 20.2 20.4"><rect x=".2" y=".6" width="19" height="17.4" fill="#161616"/><rect x="1.3" y="1.6" width="1.7" height="1.6" fill="#d8d8d8"/><rect x="1.3" y="15.4" width="1.7" height="1.6" fill="#d8d8d8"/><rect x="4.4" y="1.6" width="1.7" height="1.6" fill="#d8d8d8"/><rect x="4.4" y="15.4" width="1.7" height="1.6" fill="#d8d8d8"/><rect x="7.5" y="1.6" width="1.7" height="1.6" fill="#d8d8d8"/><rect x="7.5" y="15.4" width="1.7" height="1.6" fill="#d8d8d8"/><rect x="10.6" y="1.6" width="1.7" height="1.6" fill="#d8d8d8"/><rect x="10.6" y="15.4" width="1.7" height="1.6" fill="#d8d8d8"/><rect x="13.7" y="1.6" width="1.7" height="1.6" fill="#d8d8d8"/><rect x="13.7" y="15.4" width="1.7" height="1.6" fill="#d8d8d8"/><rect x="16.8" y="1.6" width="1.7" height="1.6" fill="#d8d8d8"/><rect x="16.8" y="15.4" width="1.7" height="1.6" fill="#d8d8d8"/><rect x="1.6" y="4.6" width="7.6" height="9.4" fill="#4a98a2"/><rect x="10.6" y="4.6" width="7.6" height="9.4" fill="#a4dade"/></svg><span class="a t" style="left:88.2px;transform-origin:0 0;top:598.33px;font-size:12.7px;line-height:14.7px;color:#111;font-weight:normal;transform:scaleX(0.88);">14:32:38.44</span><span class="a t" style="left:181.8px;transform-origin:0 0;top:598.33px;font-size:12.7px;line-height:14.7px;color:#111;font-weight:normal;transform:scaleX(0.9);">0:00:09.92</span><span class="a t" style="left:252px;transform-origin:0 0;top:598.33px;font-size:12.7px;line-height:14.7px;color:#111;font-weight:normal;transform:scaleX(0.87);">0.10</span><span class="a t" style="left:342.6px;transform-origin:0 0;top:598.33px;font-size:12.7px;line-height:14.7px;color:#111;font-weight:normal;transform:scaleX(0.89);">clip2.avi</span><span class="a t" style="left:88.2px;transform-origin:0 0;top:619.18px;font-size:12.7px;line-height:14.7px;color:#111;font-weight:normal;transform:scaleX(0.88);">14:32:48.36</span><span class="a t" style="left:181.8px;transform-origin:0 0;top:619.18px;font-size:12.7px;line-height:14.7px;color:#111;font-weight:normal;transform:scaleX(0.89);">=0:01:47.10</span><span class="a t" style="left:342.6px;transform-origin:0 0;top:620.35px;font-size:11px;line-height:13px;color:#333;font-weight:normal;transform:scaleX(0.99);">* * * * *</span><div class="a" style="left:275.2px;top:428.65px;width:20.6px;height:21.2px;border:1.2px dotted #333"></div><div class="a" style="left:30.2px;top:331px;width:1px;height:43px;background:rgba(255,255,255,.4)"></div><div class="a" style="left:30.2px;top:407.6px;width:1px;height:229.35px;background:rgba(255,255,255,.4)"></div><div class="a" style="left:82.4px;top:331px;width:1px;height:43px;background:rgba(255,255,255,.4)"></div><div class="a" style="left:82.4px;top:407.6px;width:1px;height:229.35px;background:rgba(255,255,255,.4)"></div><div class="a" style="left:155.1px;top:331px;width:1px;height:43px;background:rgba(255,255,255,.4)"></div><div class="a" style="left:155.1px;top:407.6px;width:1px;height:229.35px;background:rgba(255,255,255,.4)"></div><div class="a" style="left:176.1px;top:331px;width:1px;height:43px;background:rgba(255,255,255,.4)"></div><div class="a" style="left:176.1px;top:407.6px;width:1px;height:229.35px;background:rgba(255,255,255,.4)"></div><div class="a" style="left:249.1px;top:331px;width:1px;height:43px;background:rgba(255,255,255,.4)"></div><div class="a" style="left:249.1px;top:407.6px;width:1px;height:229.35px;background:rgba(255,255,255,.4)"></div><div class="a" style="left:274.5px;top:331px;width:1px;height:43px;background:rgba(255,255,255,.4)"></div><div class="a" style="left:274.5px;top:407.6px;width:1px;height:229.35px;background:rgba(255,255,255,.4)"></div><div class="a" style="left:294.9px;top:331px;width:1px;height:43px;background:rgba(255,255,255,.4)"></div><div class="a" style="left:294.9px;top:407.6px;width:1px;height:229.35px;background:rgba(255,255,255,.4)"></div><div class="a" style="left:315.9px;top:331px;width:1px;height:43px;background:rgba(255,255,255,.4)"></div><div class="a" style="left:315.9px;top:407.6px;width:1px;height:229.35px;background:rgba(255,255,255,.4)"></div><div class="a" style="left:336.7px;top:331px;width:1px;height:43px;background:rgba(255,255,255,.4)"></div><div class="a" style="left:336.7px;top:407.6px;width:1px;height:229.35px;background:rgba(255,255,255,.4)"></div><div class="a" style="left:466.5px;top:331px;width:1px;height:43px;background:rgba(255,255,255,.4)"></div><div class="a" style="left:466.5px;top:407.6px;width:1px;height:229.35px;background:rgba(255,255,255,.4)"></div><div class="a" style="left:11.4px;top:427.55px;width:469.6px;height:1px;background:rgba(255,255,255,.35)"></div><div class="a" style="left:11.4px;top:448.4px;width:469.6px;height:1px;background:rgba(255,255,255,.35)"></div><div class="a" style="left:11.4px;top:469.25px;width:469.6px;height:1px;background:rgba(255,255,255,.35)"></div><div class="a" style="left:11.4px;top:490.1px;width:469.6px;height:1px;background:rgba(255,255,255,.35)"></div><div class="a" style="left:11.4px;top:510.95px;width:469.6px;height:1px;background:rgba(255,255,255,.35)"></div><div class="a" style="left:11.4px;top:531.8px;width:469.6px;height:1px;background:rgba(255,255,255,.35)"></div><div class="a" style="left:11.4px;top:552.65px;width:469.6px;height:1px;background:rgba(255,255,255,.35)"></div><div class="a" style="left:11.4px;top:573.5px;width:469.6px;height:1px;background:rgba(255,255,255,.35)"></div><div class="a" style="left:11.4px;top:594.35px;width:469.6px;height:1px;background:rgba(255,255,255,.35)"></div><div class="a" style="left:11.4px;top:615.2px;width:469.6px;height:1px;background:rgba(255,255,255,.35)"></div><div class="a" style="left:11.4px;top:351.35px;width:469.6px;height:1px;background:rgba(255,255,255,.35)"></div>
<div class="a" style="left:506px;top:312.6px;width:100.6px;height:45.4px;background:linear-gradient(#023402,#033d03 55%,#044404);border:1px solid #0f7a0f;box-shadow:0 0 0 1px #141414, inset 0 0 0 1px rgba(0,0,0,.25)"><div class="a" style="left:5px;top:3.6px;right:5px;height:2.4px;border-radius:1.2px;filter:blur(.5px);background:rgba(60,120,60,.5)"></div></div><span class="a t" style="left:529.4px;transform-origin:0 0;top:324.54px;font-size:18px;line-height:20px;color:#dcefd6;font-weight:normal;transform:scaleX(1.08);">Start</span><svg class="a" style="left:581.4px;top:327px" width="15.6" height="15.6" viewBox="0 0 15.6 15.6"><path d="M.4 5.6 H7.6 V.6 L15.2 7.8 L7.6 15 V10 H.4 Z" fill="#f4fff4"/></svg><div class="a" style="left:506px;top:367px;width:100.6px;height:45.2px;background:radial-gradient(ellipse at 50% 45%,#ffff3c 0%,#fcfc14 60%,#f0f000 100%);border:1px solid #b0b010;box-shadow:0 0 0 1px #141414, inset 0 0 0 1px rgba(0,0,0,.25)"><div class="a" style="left:5px;top:3.6px;right:5px;height:2.4px;border-radius:1.2px;filter:blur(.5px);background:rgba(255,255,170,.55)"></div></div><span class="a t" style="left:519.8px;transform-origin:0 0;top:379.14px;font-size:18px;line-height:20px;color:#0a0a00;font-weight:normal;transform:scaleX(0.97);-webkit-text-stroke:.35px #0a0a00">Pause</span><div class="a" style="left:580.8px;top:381px;width:6.6px;height:16px;background:#cfe8ee;border:1.2px solid #2a2a14"></div><div class="a" style="left:589.4px;top:381px;width:6.6px;height:16px;background:#cfe8ee;border:1.2px solid #2a2a14"></div><div class="a" style="left:506px;top:421px;width:54.4px;height:37.2px;background:linear-gradient(#343200,#3e3c04 60%,#444006);border:1px solid #c29a3c;box-shadow:0 0 0 1px #141414, inset 0 0 0 1px rgba(0,0,0,.25)"><div class="a" style="left:5px;top:3.6px;right:5px;height:2.4px;border-radius:1.2px;filter:blur(.5px);background:rgba(120,115,60,.5)"></div></div><svg class="a" style="left:523px;top:431px" width="20.2" height="20.4" viewBox="0 0 20.2 20.4"><rect x=".2" y=".6" width="19" height="17.4" fill="#161616"/><rect x="1.3" y="1.6" width="1.7" height="1.6" fill="#d8d8d8"/><rect x="1.3" y="15.4" width="1.7" height="1.6" fill="#d8d8d8"/><rect x="4.4" y="1.6" width="1.7" height="1.6" fill="#d8d8d8"/><rect x="4.4" y="15.4" width="1.7" height="1.6" fill="#d8d8d8"/><rect x="7.5" y="1.6" width="1.7" height="1.6" fill="#d8d8d8"/><rect x="7.5" y="15.4" width="1.7" height="1.6" fill="#d8d8d8"/><rect x="10.6" y="1.6" width="1.7" height="1.6" fill="#d8d8d8"/><rect x="10.6" y="15.4" width="1.7" height="1.6" fill="#d8d8d8"/><rect x="13.7" y="1.6" width="1.7" height="1.6" fill="#d8d8d8"/><rect x="13.7" y="15.4" width="1.7" height="1.6" fill="#d8d8d8"/><rect x="16.8" y="1.6" width="1.7" height="1.6" fill="#d8d8d8"/><rect x="16.8" y="15.4" width="1.7" height="1.6" fill="#d8d8d8"/><rect x="1.6" y="4.6" width="7.6" height="9.4" fill="#4a98a2"/><rect x="10.6" y="4.6" width="7.6" height="9.4" fill="#a4dade"/></svg><div class="a" style="left:527.8px;top:429.8px;width:3.6px;height:19.8px;background:#e8201c"></div><div class="a dk" style="left:568.6px;top:421px;width:38px;height:37.2px;"></div><svg class="a" style="left:579px;top:431.6px" width="18" height="16.4" viewBox="0 0 18 16.4"><path d="M.6 5.8 H10.8 V8.8 L17.6 4.4 L10.8 0 V2.6 H.6 Z" fill="#d6eef6"/><path d="M17.4 10.6 H7.2 V7.6 L.4 12 L7.2 16.4 V13.8 H17.4 Z" fill="#d6eef6"/></svg><div class="a" style="left:506.4px;top:466.4px;width:29.2px;height:24.8px;background:linear-gradient(#9a9a9a 0%,#e2e2e2 12%,#d6d6d6 28%,#a8a8a8 55%,#6c6c6c 88%,#4c4c4c 100%);border:1px solid #0a0a0a"></div><div class="a" style="left:539.6px;top:466.4px;width:33.2px;height:24.8px;background:linear-gradient(#9a9a9a 0%,#e2e2e2 12%,#d6d6d6 28%,#a8a8a8 55%,#6c6c6c 88%,#4c4c4c 100%);border:1px solid #0a0a0a"></div><div class="a" style="left:572.6px;top:466.4px;width:34px;height:24.8px;background:linear-gradient(#6e6e6e 0%,#b4b4b4 12%,#bcbcbc 20%,#8e8e8e 50%,#565656 82%,#3c3c3c 100%);border:1px solid #0a0a0a"></div><svg class="a" style="left:513.8px;top:470.4px" width="13.6" height="16.6" viewBox="0 0 13.6 16.6"><clipPath id="lc1"><rect x="0" y="0" width="14" height="8.3"/></clipPath><path d="M12.8 4.8 H7.4 V1 L.8 8.3 L7.4 15.6 V11.8 H12.8 Z" fill="#cfe6ee"/><path d="M12.8 4.8 H7.4 V1 L.8 8.3 L7.4 15.6 V11.8 H12.8 Z" fill="#e8341c" clip-path="url(#lc1)"/><path d="M12.8 4.8 H7.4 V1 L.8 8.3 L7.4 15.6 V11.8 H12.8 Z" fill="none" stroke="#333" stroke-width=".8"/></svg><svg class="a" style="left:547.6px;top:469px" width="16" height="19" viewBox="0 0 16 19"><rect x="11.2" y=".8" width="3.6" height="3" fill="#d4ecf2" stroke="#2a3a4a" stroke-width="1"/><path d="M11.2 5.6 H14.8 V15 H7 V18 L.8 12.8 L7 7.8 V11 H11.2 Z" fill="#d4ecf2" stroke="#2a3a4a" stroke-width="1.1" stroke-linejoin="round"/></svg><svg class="a" style="left:581px;top:470.2px" width="17" height="17" viewBox="0 0 17 17"><path d="M12.6 .8 H16 V16 H12.6 V10.2 H8 V13.8 L.8 8.4 L8 3 V6.6 H12.6 Z" fill="#d2ecf0" stroke="#26343c" stroke-width="1.1" stroke-linejoin="round"/></svg><div class="a" style="left:506.4px;top:500px;width:54.2px;height:24.6px;background:linear-gradient(#6e6e6e 0%,#b4b4b4 12%,#bcbcbc 20%,#8e8e8e 50%,#565656 82%,#3c3c3c 100%);border:1px solid #0a0a0a"></div><svg class="a" style="left:524px;top:503.2px" width="18" height="18" viewBox="0 0 18 18"><path d="M2.4 2.4 L15.6 15.6 M15.6 2.4 L2.4 15.6" stroke="#ee1a10" stroke-width="3.4" stroke-linecap="round"/></svg><div class="a" style="left:571.6px;top:500px;width:34.6px;height:24.6px;background:linear-gradient(#6e6e6e 0%,#b4b4b4 12%,#bcbcbc 20%,#8e8e8e 50%,#565656 82%,#3c3c3c 100%);border:1px solid #0a0a0a"></div><svg class="a" style="left:579.4px;top:505.6px" width="19" height="13.6" viewBox="0 0 19 13.6"><path d="M1 1.4 L13.4 9.6 M1 12.4 L13.4 4.2" stroke="#111" stroke-width="1.2"/><path d="M1 1.4 L9 5.8 M1 12.4 L9 8" stroke="#eee" stroke-width=".5"/><ellipse cx="15.6" cy="3.6" rx="2.5" ry="2.1" fill="none" stroke="#111" stroke-width="1.2"/><ellipse cx="15.6" cy="10.4" rx="2.5" ry="2.1" fill="none" stroke="#111" stroke-width="1.2"/></svg><div class="a" style="left:506px;top:533.6px;width:33.6px;height:29.2px;background:linear-gradient(#6e5070 0%,#a882aa 12%,#cfa2d2 28%,#a274a4 50%,#5e3c60 82%,#48284a 100%);border:1px solid #0a0a0a"></div><div class="a" style="left:539.4px;top:533.6px;width:33.6px;height:29.2px;background:linear-gradient(#6e5070 0%,#a882aa 12%,#cfa2d2 28%,#a274a4 50%,#5e3c60 82%,#48284a 100%);border:1px solid #0a0a0a"></div><div class="a" style="left:572.8px;top:533.6px;width:33.6px;height:29.2px;background:linear-gradient(#6e5070 0%,#a882aa 12%,#cfa2d2 28%,#a274a4 50%,#5e3c60 82%,#48284a 100%);border:1px solid #0a0a0a"></div><div class="a" style="left:506px;top:562.8px;width:33.6px;height:25px;background:linear-gradient(#6e6e6e 0%,#b4b4b4 12%,#bcbcbc 20%,#8e8e8e 50%,#565656 82%,#3c3c3c 100%);border:1px solid #0a0a0a"></div><div class="a" style="left:539.4px;top:562.8px;width:33.6px;height:25px;background:linear-gradient(#6e6e6e 0%,#b4b4b4 12%,#bcbcbc 20%,#8e8e8e 50%,#565656 82%,#3c3c3c 100%);border:1px solid #0a0a0a"></div><div class="a" style="left:572.8px;top:562.8px;width:33.6px;height:25px;background:linear-gradient(#6e6e6e 0%,#b4b4b4 12%,#bcbcbc 20%,#8e8e8e 50%,#565656 82%,#3c3c3c 100%);border:1px solid #0a0a0a"></div><div class="a" style="left:506px;top:587.8px;width:33.6px;height:24.8px;background:linear-gradient(#6e6e6e 0%,#b4b4b4 12%,#bcbcbc 20%,#8e8e8e 50%,#565656 82%,#3c3c3c 100%);border:1px solid #0a0a0a"></div><div class="a" style="left:539.4px;top:587.8px;width:33.6px;height:24.8px;background:linear-gradient(#6e6e6e 0%,#b4b4b4 12%,#bcbcbc 20%,#8e8e8e 50%,#565656 82%,#3c3c3c 100%);border:1px solid #0a0a0a"></div><div class="a" style="left:572.8px;top:587.8px;width:33.6px;height:24.8px;background:linear-gradient(#6e6e6e 0%,#b4b4b4 12%,#bcbcbc 20%,#8e8e8e 50%,#565656 82%,#3c3c3c 100%);border:1px solid #0a0a0a"></div><div class="a" style="left:506px;top:612.6px;width:33.6px;height:25.2px;background:linear-gradient(#6e6e6e 0%,#b4b4b4 12%,#bcbcbc 20%,#8e8e8e 50%,#565656 82%,#3c3c3c 100%);border:1px solid #0a0a0a"></div><div class="a" style="left:539.4px;top:612.6px;width:33.6px;height:25.2px;background:linear-gradient(#6e6e6e 0%,#b4b4b4 12%,#bcbcbc 20%,#8e8e8e 50%,#565656 82%,#3c3c3c 100%);border:1px solid #0a0a0a"></div><div class="a" style="left:572.8px;top:612.6px;width:33.6px;height:25.2px;background:linear-gradient(#6e6e6e 0%,#b4b4b4 12%,#bcbcbc 20%,#8e8e8e 50%,#565656 82%,#3c3c3c 100%);border:1px solid #0a0a0a"></div><div class="a" style="left:506px;top:637.8px;width:33.6px;height:25px;background:linear-gradient(#6e6e6e 0%,#b4b4b4 12%,#bcbcbc 20%,#8e8e8e 50%,#565656 82%,#3c3c3c 100%);border:1px solid #0a0a0a"></div><div class="a" style="left:539.4px;top:637.8px;width:33.6px;height:25px;background:linear-gradient(#6e6e6e 0%,#b4b4b4 12%,#bcbcbc 20%,#8e8e8e 50%,#565656 82%,#3c3c3c 100%);border:1px solid #0a0a0a"></div><div class="a" style="left:572.8px;top:637.8px;width:33.6px;height:25px;background:linear-gradient(#6e6e6e 0%,#b4b4b4 12%,#bcbcbc 20%,#8e8e8e 50%,#565656 82%,#3c3c3c 100%);border:1px solid #0a0a0a"></div><div class="a" style="left:506px;top:662.8px;width:33.6px;height:24.8px;background:linear-gradient(#6e6e6e 0%,#b4b4b4 12%,#bcbcbc 20%,#8e8e8e 50%,#565656 82%,#3c3c3c 100%);border:1px solid #0a0a0a"></div><div class="a" style="left:539.4px;top:662.8px;width:33.6px;height:24.8px;background:linear-gradient(#6e6e6e 0%,#b4b4b4 12%,#bcbcbc 20%,#8e8e8e 50%,#565656 82%,#3c3c3c 100%);border:1px solid #0a0a0a"></div><div class="a" style="left:572.8px;top:662.8px;width:33.6px;height:24.8px;background:linear-gradient(#6e6e6e 0%,#b4b4b4 12%,#bcbcbc 20%,#8e8e8e 50%,#565656 82%,#3c3c3c 100%);border:1px solid #0a0a0a"></div><svg class="a" style="left:514.4px;top:538.4px" width="18.2" height="18.98" viewBox="0 0 14 14.6"><path d="M5.7 4.6 H8.1 V7.3 H9.5 V7.9 H10.9 V8.7 H11.7 V13.9 H3.7 V11 L2.5 9.6 L3.5 8.7 L5.7 10 Z" fill="#fff" stroke="#222" stroke-width=".8" stroke-linejoin="round"/><path d="M8.1 7.3 V9.8 M9.5 7.9 V9.8 M10.9 8.7 V9.9 M6.9 6 V9.4" stroke="#999" stroke-width=".8"/><circle cx="6.9" cy="3.3" r="3" fill="#d8101c"/></svg><svg class="a" style="left:546.6px;top:537.4px" width="20.4" height="20.4" viewBox="0 0 20 20"><circle cx="10" cy="10" r="8.8" fill="#f8f8f8" stroke="#c8882a" stroke-width="2"/><circle cx="10" cy="10" r="9.8" fill="none" stroke="#4a2a1a" stroke-width=".7"/><path d="M10 2.8 V4.2 M10 15.8 V17.2 M2.8 10 H4.2 M15.8 10 H17.2 M5 5 L5.9 5.9 M15 5 L14.1 5.9 M5 15 L5.9 14.1 M15 15 L14.1 14.1" stroke="#777" stroke-width=".9"/><path d="M10 10.4 V3.8" stroke="#e0202a" stroke-width="1.5"/><path d="M10 10 L6.8 9.2" stroke="#e0202a" stroke-width="1.2"/></svg><svg class="a" style="left:581.6px;top:540.4px" width="16.6" height="16.4" viewBox="0 0 16.6 16.4"><path d="M7 .8 L.8 7.6 H4.8 V15.4 H15.6 V11.6 H9.2 V7.6 H13.2 Z" fill="#d2ecf0" stroke="#26343c" stroke-width="1.1" stroke-linejoin="round"/></svg><svg class="a" style="left:512.2px;top:565.6px" width="21" height="19" viewBox="0 0 21 19"><g stroke="#111" stroke-width=".9" fill="#f4f4f4"><rect x="1" y="1.5" width="13.5" height="5.2" rx="1.8"/><rect x="3.2" y="6.6" width="11" height="5.5" rx="1"/><rect x="14.3" y="4.3" width="3" height="4.6"/><rect x="17" y="2.8" width="3.2" height="7.4" rx=".8"/></g><rect x="4.6" y="8" width="2.6" height="2" fill="#e0303a"/><path d="M2.2 3.1 H12.5" stroke="#888" stroke-width=".8"/><circle cx="10.8" cy="13.2" r="5.1" fill="#fff" stroke="#222" stroke-width=".8"/><text x="10.8" y="16.3" font-family="Liberation Sans" font-size="8.6" font-weight="bold" text-anchor="middle" fill="#111">1</text></svg><svg class="a" style="left:545.4px;top:565.6px" width="21" height="19" viewBox="0 0 21 19"><g stroke="#111" stroke-width=".9" fill="#f4f4f4"><rect x="1" y="1.5" width="13.5" height="5.2" rx="1.8"/><rect x="3.2" y="6.6" width="11" height="5.5" rx="1"/><rect x="14.3" y="4.3" width="3" height="4.6"/><rect x="17" y="2.8" width="3.2" height="7.4" rx=".8"/></g><rect x="4.6" y="8" width="2.6" height="2" fill="#e0303a"/><path d="M2.2 3.1 H12.5" stroke="#888" stroke-width=".8"/><circle cx="10.8" cy="13.2" r="5.1" fill="#fff" stroke="#222" stroke-width=".8"/><text x="10.8" y="16.3" font-family="Liberation Sans" font-size="8.6" font-weight="bold" text-anchor="middle" fill="#111">2</text></svg><svg class="a" style="left:581px;top:565.4px" width="16.24" height="19.95" viewBox="0 0 14 17.2"><path d="M1.4 1.4 H12.6 V3.4 L8.4 8.6 L12.6 13.8 V15.8 H1.4 V13.8 L5.6 8.6 L1.4 3.4 Z" fill="#f8f8f8" stroke="#333" stroke-width="1.1" stroke-linejoin="round"/><path d="M.8 1.2 H13.2 M.8 16 H13.2" stroke="#222" stroke-width="1.7"/><path d="M4 5 H10 L7 8.4 Z" fill="#aaa"/><path d="M3.4 14.4 L7 11.4 L10.6 14.4 Z" fill="#aaa"/></svg><svg class="a" style="left:512.2px;top:590.6px" width="21" height="19" viewBox="0 0 21 19"><g stroke="#111" stroke-width=".9" fill="#f4f4f4"><rect x="1" y="1.5" width="13.5" height="5.2" rx="1.8"/><rect x="3.2" y="6.6" width="11" height="5.5" rx="1"/><rect x="14.3" y="4.3" width="3" height="4.6"/><rect x="17" y="2.8" width="3.2" height="7.4" rx=".8"/></g><rect x="4.6" y="8" width="2.6" height="2" fill="#e0303a"/><path d="M2.2 3.1 H12.5" stroke="#888" stroke-width=".8"/><circle cx="10.8" cy="13.2" r="5.1" fill="#fff" stroke="#222" stroke-width=".8"/><text x="10.8" y="16.3" font-family="Liberation Sans" font-size="8.6" font-weight="bold" text-anchor="middle" fill="#111">3</text></svg><svg class="a" style="left:545.4px;top:590.6px" width="21" height="19" viewBox="0 0 21 19"><g stroke="#111" stroke-width=".9" fill="#f4f4f4"><rect x="1" y="1.5" width="13.5" height="5.2" rx="1.8"/><rect x="3.2" y="6.6" width="11" height="5.5" rx="1"/><rect x="14.3" y="4.3" width="3" height="4.6"/><rect x="17" y="2.8" width="3.2" height="7.4" rx=".8"/></g><rect x="4.6" y="8" width="2.6" height="2" fill="#e0303a"/><path d="M2.2 3.1 H12.5" stroke="#888" stroke-width=".8"/><circle cx="10.8" cy="13.2" r="5.1" fill="#fff" stroke="#222" stroke-width=".8"/><text x="10.8" y="16.3" font-family="Liberation Sans" font-size="8.6" font-weight="bold" text-anchor="middle" fill="#111">4</text></svg><svg class="a" style="left:579px;top:591.6px" width="20" height="17.2" viewBox="0 0 20 17.2"><rect x="2.4" y=".6" width="17" height="16" fill="#a6dadc" stroke="#e8f8f8" stroke-width=".8"/><path d="M11.4 2 H18 L15.6 8.4 L18 15 H11.4 L13.8 8.4 Z" fill="#e8545c"/><path d="M12.8 4.4 Q14.7 6.4 16.6 4.4" stroke="#fde" stroke-width="1" fill="none"/><path d="M12.6 13.4 Q14.7 10.4 16.8 13.4 Z" fill="#fde"/><path d="M.4 6.8 H6 V3.6 L11 8.4 L6 13.2 V10 H.4 Z" fill="#fff" stroke="#2a4a4a" stroke-width=".7"/></svg><svg class="a" style="left:512.2px;top:615.6px" width="21" height="19" viewBox="0 0 21 19"><g stroke="#111" stroke-width=".9" fill="#f4f4f4"><rect x="1" y="1.5" width="13.5" height="5.2" rx="1.8"/><rect x="3.2" y="6.6" width="11" height="5.5" rx="1"/><rect x="14.3" y="4.3" width="3" height="4.6"/><rect x="17" y="2.8" width="3.2" height="7.4" rx=".8"/></g><rect x="4.6" y="8" width="2.6" height="2" fill="#e0303a"/><path d="M2.2 3.1 H12.5" stroke="#888" stroke-width=".8"/><circle cx="10.8" cy="13.2" r="5.1" fill="#fff" stroke="#222" stroke-width=".8"/><text x="10.8" y="16.3" font-family="Liberation Sans" font-size="8.6" font-weight="bold" text-anchor="middle" fill="#111">5</text></svg><svg class="a" style="left:545.4px;top:615.6px" width="21" height="19" viewBox="0 0 21 19"><g stroke="#111" stroke-width=".9" fill="#f4f4f4"><rect x="1" y="1.5" width="13.5" height="5.2" rx="1.8"/><rect x="3.2" y="6.6" width="11" height="5.5" rx="1"/><rect x="14.3" y="4.3" width="3" height="4.6"/><rect x="17" y="2.8" width="3.2" height="7.4" rx=".8"/></g><rect x="4.6" y="8" width="2.6" height="2" fill="#e0303a"/><path d="M2.2 3.1 H12.5" stroke="#888" stroke-width=".8"/><circle cx="10.8" cy="13.2" r="5.1" fill="#fff" stroke="#222" stroke-width=".8"/><text x="10.8" y="16.3" font-family="Liberation Sans" font-size="8.6" font-weight="bold" text-anchor="middle" fill="#111">6</text></svg><svg class="a" style="left:579.4px;top:615.6px" width="20" height="19" viewBox="0 0 20 19"><rect x="0.6" y="0.6" width="8" height="2.2" fill="#1414e0"/><rect x="3.6" y="4.7" width="5" height="2.2" fill="#1414e0"/><rect x="0.6" y="8.8" width="8" height="2.2" fill="#1414e0"/><rect x="3.6" y="12.9" width="5" height="2.2" fill="#1414e0"/><rect x="3.6" y="17" width="5" height="2.2" fill="#1414e0"/><path d="M11.6 17.8 H15.8 Q19 17.8 19 14.8 V12.6 Q19 9.6 15.4 9.6 H13.6" fill="none" stroke="#111" stroke-width="1.5"/><path d="M14 6.4 V12.8 L10 9.6 Z" fill="#111"/></svg><svg class="a" style="left:513px;top:639.4px" width="19.4" height="19.4" viewBox="0 -0.6 20 20"><rect x=".7" y=".9" width="17.6" height="16.6" fill="#a6d8da" stroke="#f0fafa" stroke-width="1.3"/><path d="M1.5 16.8 V5.4 L8.8 16.8 Z" fill="#4f9ea6" opacity=".85"/><path d="M10 11.2 L18 5.4 V11 Z" fill="#d4eef0" opacity=".8"/><path d="M2.6 15.2 L7.2 7.6 L10.6 5.2 L11.4 8.4 L8.4 12.6 Z" fill="#0c0c0c"/><path d="M8.2 6.4 L12.2 2.4 L14 4.2 L10.6 8.4 Z" fill="#fbfbf4" stroke="#555" stroke-width=".4"/><path d="M12.2 2.4 L15.4 -.4 L17.2 .6 L14 4.2 Z" fill="#f0bc38"/><circle cx="14" cy="13.4" r="5.5" fill="#fff" stroke="#222" stroke-width=".8"/><text x="14" y="16.78" font-family="Liberation Sans" font-size="9.4" font-weight="bold" text-anchor="middle" fill="#111">1</text></svg><svg class="a" style="left:546.4px;top:639.4px" width="19.4" height="19.4" viewBox="0 -0.6 20 20"><rect x=".7" y=".9" width="17.6" height="16.6" fill="#a6d8da" stroke="#f0fafa" stroke-width="1.3"/><path d="M1.5 16.8 V5.4 L8.8 16.8 Z" fill="#4f9ea6" opacity=".85"/><path d="M10 11.2 L18 5.4 V11 Z" fill="#d4eef0" opacity=".8"/><path d="M2.6 15.2 L7.2 7.6 L10.6 5.2 L11.4 8.4 L8.4 12.6 Z" fill="#0c0c0c"/><path d="M8.2 6.4 L12.2 2.4 L14 4.2 L10.6 8.4 Z" fill="#fbfbf4" stroke="#555" stroke-width=".4"/><path d="M12.2 2.4 L15.4 -.4 L17.2 .6 L14 4.2 Z" fill="#f0bc38"/><circle cx="14" cy="13.4" r="5.5" fill="#fff" stroke="#222" stroke-width=".8"/><text x="14" y="16.78" font-family="Liberation Sans" font-size="9.4" font-weight="bold" text-anchor="middle" fill="#111">2</text></svg><svg class="a" style="left:579.4px;top:640.6px" width="20" height="19" viewBox="0 0 20 19"><rect x="0.6" y="0.6" width="8" height="2.2" fill="#1414e0"/><rect x="3.6" y="4.7" width="5" height="2.2" fill="#1414e0"/><rect x="0.6" y="8.8" width="8" height="2.2" fill="#1414e0"/><rect x="3.6" y="12.9" width="5" height="2.2" fill="#1414e0"/><rect x="3.6" y="17" width="5" height="2.2" fill="#1414e0"/><path d="M11.6 17.8 H18.6 V8 L13 2.2" fill="none" stroke="#111" stroke-width="1.5"/><path d="M10.6 .4 H16.2 L10.6 6 Z" fill="#111"/></svg><svg class="a" style="left:512.4px;top:664.6px" width="20" height="21" viewBox="0 0 20 21"><path d="M2 19.4 L11.6 8" stroke="#1a6a6a" stroke-width="4.6" stroke-linecap="round"/><path d="M2.2 19.2 L11.4 8.2" stroke="#3fb0b0" stroke-width="2.8" stroke-linecap="round"/><path d="M4 17 L9.4 10.6" stroke="#eaffff" stroke-width=".9"/><circle cx="14" cy="5.4" r="4.9" fill="#3fb0b0" stroke="#1a6a6a" stroke-width="1"/><circle cx="12.8" cy="4" r="1.6" fill="#d8f8f8" opacity=".8"/><path d="M9.4 13.6 L14.6 17.6" stroke="#1a6a6a" stroke-width="1.2"/><circle cx="15.6" cy="18.2" r="1.7" fill="#e8ffff" stroke="#1a6a6a" stroke-width="1"/></svg><svg class="a" style="left:545.6px;top:664.6px" width="20" height="21" viewBox="0 0 20 21"><path d="M2 19.4 L11.6 8" stroke="#8a8a8a" stroke-width="4.6" stroke-linecap="round"/><path d="M2.2 19.2 L11.4 8.2" stroke="#c4c4c4" stroke-width="2.8" stroke-linecap="round"/><path d="M4 17 L9.4 10.6" stroke="#eaffff" stroke-width=".9"/><circle cx="14" cy="5.4" r="4.9" fill="#c4c4c4" stroke="#8a8a8a" stroke-width="1"/><circle cx="12.8" cy="4" r="1.6" fill="#d8f8f8" opacity=".8"/><path d="M6.2 9.2 L16.6 19.6 M16.6 9.2 L6.2 19.6" stroke="#e01010" stroke-width="2.6" stroke-linecap="round"/></svg><svg class="a" style="left:578.2px;top:665.8px" width="22" height="19.4" viewBox="0 0 22 19.4"><rect x=".4" y="0.4" width="3.4" height="2" fill="#1414e0"/><rect x="18.2" y="0.4" width="3.4" height="2" fill="#1414e0"/><rect x=".4" y="4.6" width="3.4" height="2" fill="#1414e0"/><rect x="18.2" y="4.6" width="3.4" height="2" fill="#1414e0"/><rect x=".4" y="8.8" width="3.4" height="2" fill="#1414e0"/><rect x="18.2" y="8.8" width="3.4" height="2" fill="#1414e0"/><rect x=".4" y="13" width="3.4" height="2" fill="#1414e0"/><rect x="18.2" y="13" width="3.4" height="2" fill="#1414e0"/><rect x=".4" y="17.2" width="3.4" height="2" fill="#1414e0"/><rect x="18.2" y="17.2" width="3.4" height="2" fill="#1414e0"/><path d="M16.4 5.2 H10.6 V2 L6 5.8 L10.6 9.6 V6.4 H16.4 Z" fill="#111"/><path d="M6 13.2 H11.8 V10 L16.4 13.8 L11.8 17.6 V14.4 H6 Z" fill="#111"/></svg><div class="a" style="left:506px;top:696.8px;width:33.6px;height:28.4px;background:linear-gradient(#6e6e6e 0%,#b4b4b4 12%,#bcbcbc 20%,#8e8e8e 50%,#565656 82%,#3c3c3c 100%);border:1px solid #0a0a0a"></div><svg class="a" style="left:514px;top:700.6px" width="17.68" height="19.34" viewBox="0 0 17 18.6"><rect x="1.4" y=".8" width="11" height="15.6" fill="#d6d6d6" stroke="#9a9a9a" stroke-width=".6"/><path d="M3 9 H11 M3 11 H11 M3 13 H11" stroke="#aaa" stroke-width=".8"/><path d="M6.8 8.4 L16 17.6 M16 8.4 L6.8 17.6" stroke="#e01010" stroke-width="2.4" stroke-linecap="round"/></svg><div class="a" style="left:539.4px;top:696.8px;width:33.6px;height:28.4px;background:linear-gradient(#6e6e6e 0%,#b4b4b4 12%,#bcbcbc 20%,#8e8e8e 50%,#565656 82%,#3c3c3c 100%);border:1px solid #0a0a0a"></div><svg class="a" style="left:547.4px;top:700.6px" width="17.68" height="19.34" viewBox="0 0 17 18.6"><rect x="1.8" y="8.6" width="12" height="9" fill="#d6d6d6" stroke="#9a9a9a" stroke-width=".6"/><path d="M3 12 H13 M3 14 H13 M3 16 H13" stroke="#aaa" stroke-width=".8"/><path d="M2 9.4 H14.4" stroke="#22d022" stroke-width="1.8"/><path d="M6.2 0.8 L15.4 10 M15.4 0.8 L6.2 10" stroke="#e01010" stroke-width="2.4" stroke-linecap="round"/></svg><div class="a" style="left:572.8px;top:696.8px;width:33.6px;height:28.4px;background:linear-gradient(#6e6e6e 0%,#b4b4b4 12%,#bcbcbc 20%,#8e8e8e 50%,#565656 82%,#3c3c3c 100%);border:1px solid #0a0a0a"></div><svg class="a" style="left:580.8px;top:700.6px" width="17.68" height="19.34" viewBox="0 0 17 18.6"><rect x="1.8" y=".6" width="11.6" height="14.6" fill="#cfcfcf" stroke="#9a9a9a" stroke-width=".6"/><path d="M2 6.6 H14.4" stroke="#22d022" stroke-width="1.8"/><path d="M6.6 6.8 L15.8 16 M15.8 6.8 L6.6 16" stroke="#e01010" stroke-width="2.4" stroke-linecap="round"/></svg><div class="a" style="left:506px;top:734.6px;width:33.6px;height:28.6px;background:linear-gradient(#6e6e6e 0%,#b4b4b4 12%,#bcbcbc 20%,#8e8e8e 50%,#565656 82%,#3c3c3c 100%);border:1px solid #0a0a0a"></div><div class="a" style="left:539.4px;top:734.6px;width:33.6px;height:28.6px;background:linear-gradient(#6e6e6e 0%,#b4b4b4 12%,#bcbcbc 20%,#8e8e8e 50%,#565656 82%,#3c3c3c 100%);border:1px solid #0a0a0a"></div><div class="a" style="left:572.8px;top:734.6px;width:33.6px;height:28.6px;background:linear-gradient(#6e6e6e 0%,#b4b4b4 12%,#bcbcbc 20%,#8e8e8e 50%,#565656 82%,#3c3c3c 100%);border:1px solid #0a0a0a"></div><svg class="a" style="left:514.6px;top:741.6px" width="17.5" height="16.5" viewBox="0 0 17.5 16.5"><path d="M6.4 .9 H13.2" stroke="#222" stroke-width="1.3"/><path d="M4.8 15.7 H11.6" stroke="#222" stroke-width="1.3"/><path d="M2.6 5.6 L7.4 .8 L9.6 2.8 L4.8 7.6 Z" fill="#f7a81c" stroke="#5a3a08" stroke-width=".5" stroke-linejoin="round"/><path d="M.6 2.2 V9.5 H7.9 Z" fill="#f7a81c" stroke="#5a3a08" stroke-width=".5" stroke-linejoin="round"/><path d="M12.7 8.9 L15 11.1 L10.2 16 L7.9 13.8 Z" fill="#f7a81c" stroke="#5a3a08" stroke-width=".5" stroke-linejoin="round"/><path d="M17 7 H9.7 L17 14.3 Z" fill="#f7a81c" stroke="#5a3a08" stroke-width=".5" stroke-linejoin="round"/></svg><svg class="a" style="left:546.6px;top:738.6px" width="20.4" height="20.4" viewBox="0 0 20 20"><circle cx="10" cy="10" r="8.8" fill="#f8f8f8" stroke="#c8882a" stroke-width="2"/><circle cx="10" cy="10" r="9.8" fill="none" stroke="#4a2a1a" stroke-width=".7"/><path d="M10 3.4 L13 7.4 H11.2 V12.6 H13 L10 16.6 L7 12.6 H8.8 V7.4 H7 Z" fill="#111"/><path d="M3.4 10 H5.4 M14.6 10 H16.6" stroke="#555" stroke-width=".9"/></svg><svg class="a" style="left:580.6px;top:738.4px" width="18" height="20.4" viewBox="0 0 18 20.4"><path d="M.8 .8 H12.4 V3.6 H3.6 V17.8 H.8 Z" fill="#f8d21c" stroke="#7a5a08" stroke-width=".7"/><path d="M4.6 5 H15.2 L17.2 7 V19.6 H4.6 Z" fill="#d8d8d8" stroke="#222" stroke-width="1"/><rect x="7" y="5.6" width="7" height="5.4" fill="#f4f4f4" stroke="#444" stroke-width=".6"/><rect x="7.4" y="14" width="7.4" height="5.2" fill="#222"/><rect x="12.2" y="15" width="1.8" height="3.2" fill="#eee"/></svg><div class="a" style="left:610px;top:308px;width:8.4px;height:616px;background:linear-gradient(90deg,#8a8a8a 0,#d8d8d8 18%,#5a5a5a 30%,#3a3a3a 42%,#9a9a9a 55%,#e0e0e0 68%,#6a6a6a 84%,#3a3a3a 100%)"></div>
<div class="a" style="left:623.2px;top:313px;width:33.2px;height:28px;background:linear-gradient(#6e6e6e 0%,#b4b4b4 12%,#bcbcbc 20%,#8e8e8e 50%,#565656 82%,#3c3c3c 100%);border:1px solid #0a0a0a"></div><div class="a" style="left:661.8px;top:313px;width:33.2px;height:28px;background:linear-gradient(#6e6e6e 0%,#b4b4b4 12%,#bcbcbc 20%,#8e8e8e 50%,#565656 82%,#3c3c3c 100%);border:1px solid #0a0a0a"></div><div class="a" style="left:700.4px;top:313px;width:33.2px;height:28px;background:linear-gradient(#6e6e6e 0%,#b4b4b4 12%,#bcbcbc 20%,#8e8e8e 50%,#565656 82%,#3c3c3c 100%);border:1px solid #0a0a0a"></div><div class="a" style="left:739px;top:313px;width:33.2px;height:28px;background:linear-gradient(#6e6e6e 0%,#b4b4b4 12%,#bcbcbc 20%,#8e8e8e 50%,#565656 82%,#3c3c3c 100%);border:1px solid #0a0a0a"></div><div class="a" style="left:788.6px;top:313px;width:33.2px;height:28px;background:linear-gradient(#6e6e6e 0%,#b4b4b4 12%,#bcbcbc 20%,#8e8e8e 50%,#565656 82%,#3c3c3c 100%);border:1px solid #0a0a0a"></div><div class="a" style="left:827.2px;top:313px;width:33.2px;height:28px;background:linear-gradient(#6e6e6e 0%,#b4b4b4 12%,#bcbcbc 20%,#8e8e8e 50%,#565656 82%,#3c3c3c 100%);border:1px solid #0a0a0a"></div><div class="a" style="left:865.8px;top:313px;width:33.2px;height:28px;background:linear-gradient(#6e6e6e 0%,#b4b4b4 12%,#bcbcbc 20%,#8e8e8e 50%,#565656 82%,#3c3c3c 100%);border:1px solid #0a0a0a"></div><div class="a" style="left:904.6px;top:313px;width:33.2px;height:28px;background:linear-gradient(#6e6e6e 0%,#b4b4b4 12%,#bcbcbc 20%,#8e8e8e 50%,#565656 82%,#3c3c3c 100%);border:1px solid #0a0a0a"></div><div class="a" style="left:954.6px;top:313px;width:33.2px;height:28px;background:linear-gradient(#6e6e6e 0%,#b4b4b4 12%,#bcbcbc 20%,#8e8e8e 50%,#565656 82%,#3c3c3c 100%);border:1px solid #0a0a0a"></div><div class="a" style="left:993.6px;top:313px;width:33.2px;height:28px;background:linear-gradient(#c8c870 0%,#fcfcb0 14%,#f4f49a 30%,#e4e480 60%,#a8a850 90%,#80803a 100%);border:1px solid #0a0a0a"></div><svg class="a" style="left:629px;top:316.4px" width="22" height="21" viewBox="0 0 22 21"><circle cx="11" cy="10.4" r="8.6" fill="none" stroke="#2222e6" stroke-width="2.6"/><circle cx="11" cy="10.4" r="6" fill="#fff" stroke="#1a1ad0" stroke-width="1.2"/><text x="11" y="14.6" font-family="Liberation Serif" font-weight="bold" font-size="11.5" text-anchor="middle" fill="#1414c8">R</text><path d="M.2 9 L3 13.4 L5.4 8.6 Z" fill="#2222e6"/><path d="M21.8 11.6 L19 7.2 L16.6 12 Z" fill="#2222e6"/></svg><svg class="a" style="left:667.8px;top:316.8px" width="20" height="20" viewBox="0 -0.6 20 20"><rect x=".7" y=".9" width="17.6" height="16.6" fill="#a6d8da" stroke="#f0fafa" stroke-width="1.3"/><path d="M1.5 16.8 V5.4 L8.8 16.8 Z" fill="#4f9ea6" opacity=".85"/><path d="M10 11.2 L18 5.4 V11 Z" fill="#d4eef0" opacity=".8"/><path d="M2.6 15.2 L7.2 7.6 L10.6 5.2 L11.4 8.4 L8.4 12.6 Z" fill="#0c0c0c"/><path d="M8.2 6.4 L12.2 2.4 L14 4.2 L10.6 8.4 Z" fill="#fbfbf4" stroke="#555" stroke-width=".4"/><path d="M12.2 2.4 L15.4 -.4 L17.2 .6 L14 4.2 Z" fill="#f0bc38"/></svg><svg class="a" style="left:707px;top:318px" width="19.8" height="19.99" viewBox="0 0 20.2 20.4"><rect x=".2" y=".6" width="19" height="17.4" fill="#161616"/><rect x="1.3" y="1.6" width="1.7" height="1.6" fill="#d8d8d8"/><rect x="1.3" y="15.4" width="1.7" height="1.6" fill="#d8d8d8"/><rect x="4.4" y="1.6" width="1.7" height="1.6" fill="#d8d8d8"/><rect x="4.4" y="15.4" width="1.7" height="1.6" fill="#d8d8d8"/><rect x="7.5" y="1.6" width="1.7" height="1.6" fill="#d8d8d8"/><rect x="7.5" y="15.4" width="1.7" height="1.6" fill="#d8d8d8"/><rect x="10.6" y="1.6" width="1.7" height="1.6" fill="#d8d8d8"/><rect x="10.6" y="15.4" width="1.7" height="1.6" fill="#d8d8d8"/><rect x="13.7" y="1.6" width="1.7" height="1.6" fill="#d8d8d8"/><rect x="13.7" y="15.4" width="1.7" height="1.6" fill="#d8d8d8"/><rect x="16.8" y="1.6" width="1.7" height="1.6" fill="#d8d8d8"/><rect x="16.8" y="15.4" width="1.7" height="1.6" fill="#d8d8d8"/><rect x="1.6" y="4.6" width="7.6" height="9.4" fill="#4a98a2"/><rect x="10.6" y="4.6" width="7.6" height="9.4" fill="#a4dade"/></svg><svg class="a" style="left:745.8px;top:318.2px" width="19.6" height="18.03" viewBox="0 0 20 18.4"><path d="M.4 1 H19.6 V17.6 H.4 Z" fill="#f8b626" stroke="#8a5a08" stroke-width=".6"/><rect x="9.6" y="2.6" width="5.6" height="2.4" fill="#111"/><path d="M1.2 6.4 H18.8 M1.2 8.8 H18.8 M1.2 11.2 H18.8" stroke="#111" stroke-width="1.3" stroke-dasharray="2.4 .9"/><path d="M4.6 4.6 V12 M8.6 4.6 V12 M12.6 3 V12 M16.4 4.6 V12" stroke="#111" stroke-width="1.2"/><path d="M.6 12.4 H5.6 L4 14.4 H.6 Z" fill="#111"/></svg><svg class="a" style="left:795.2px;top:318px" width="20" height="18" viewBox="0 0 20 18"><rect x=".5" y=".8" width="19" height="16.4" fill="#9fd6dc" stroke="#e8f4f4" stroke-width="1"/><rect x="10.4" y="7" width="9" height="10" fill="#f4f4f4"/><rect x="10.4" y="7" width="1.5" height="1.5" fill="#8a8a8a"/><rect x="13.4" y="7" width="1.5" height="1.5" fill="#8a8a8a"/><rect x="16.4" y="7" width="1.5" height="1.5" fill="#8a8a8a"/><rect x="11.9" y="8.5" width="1.5" height="1.5" fill="#8a8a8a"/><rect x="14.9" y="8.5" width="1.5" height="1.5" fill="#8a8a8a"/><rect x="17.9" y="8.5" width="1.5" height="1.5" fill="#8a8a8a"/><rect x="10.4" y="10" width="1.5" height="1.5" fill="#8a8a8a"/><rect x="13.4" y="10" width="1.5" height="1.5" fill="#8a8a8a"/><rect x="16.4" y="10" width="1.5" height="1.5" fill="#8a8a8a"/><rect x="11.9" y="11.5" width="1.5" height="1.5" fill="#8a8a8a"/><rect x="14.9" y="11.5" width="1.5" height="1.5" fill="#8a8a8a"/><rect x="17.9" y="11.5" width="1.5" height="1.5" fill="#8a8a8a"/><rect x="10.4" y="13" width="1.5" height="1.5" fill="#8a8a8a"/><rect x="13.4" y="13" width="1.5" height="1.5" fill="#8a8a8a"/><rect x="16.4" y="13" width="1.5" height="1.5" fill="#8a8a8a"/><rect x="11.9" y="14.5" width="1.5" height="1.5" fill="#8a8a8a"/><rect x="14.9" y="14.5" width="1.5" height="1.5" fill="#8a8a8a"/><rect x="17.9" y="14.5" width="1.5" height="1.5" fill="#8a8a8a"/><rect x="10.4" y="16" width="1.5" height="1.5" fill="#8a8a8a"/><rect x="13.4" y="16" width="1.5" height="1.5" fill="#8a8a8a"/><rect x="16.4" y="16" width="1.5" height="1.5" fill="#8a8a8a"/><path d="M1.2 16.8 L9 16.8 L9 10 Z" fill="#3d8f98"/><path d="M2.6 15 L7 7.6 L10.8 10.6 L5 15.4 Z" fill="#111"/><path d="M7 7.6 L12.6 1.4 L15 3.6 L10.8 10.6 Z" fill="#f4f0e4" stroke="#444" stroke-width=".5"/><path d="M12 1.8 L14.4 .2 L16 2 L15 3.8 Z" fill="#f0b428"/></svg><svg class="a" style="left:833.6px;top:318px" width="20.2" height="18.6" viewBox="0 0 20.2 18.6"><rect x=".2" y=".6" width="19.6" height="17.4" fill="#161616"/><rect x="1.3" y="1.6" width="1.7" height="1.6" fill="#d8d8d8"/><rect x="1.3" y="15.4" width="1.7" height="1.6" fill="#d8d8d8"/><rect x="4.5" y="1.6" width="1.7" height="1.6" fill="#d8d8d8"/><rect x="4.5" y="15.4" width="1.7" height="1.6" fill="#d8d8d8"/><rect x="7.7" y="1.6" width="1.7" height="1.6" fill="#d8d8d8"/><rect x="7.7" y="15.4" width="1.7" height="1.6" fill="#d8d8d8"/><rect x="10.9" y="1.6" width="1.7" height="1.6" fill="#d8d8d8"/><rect x="10.9" y="15.4" width="1.7" height="1.6" fill="#d8d8d8"/><rect x="14.1" y="1.6" width="1.7" height="1.6" fill="#d8d8d8"/><rect x="14.1" y="15.4" width="1.7" height="1.6" fill="#d8d8d8"/><rect x="17.3" y="1.6" width="1.7" height="1.6" fill="#d8d8d8"/><rect x="17.3" y="15.4" width="1.7" height="1.6" fill="#d8d8d8"/><rect x="1.6" y="4.6" width="7.8" height="9.4" fill="#4a8ef0"/><rect x="10.6" y="4.6" width="7.8" height="9.4" fill="#6aa6f8"/><rect x="9.6" y="8" width="10.4" height="10.4" fill="#f4f4f4"/><rect x="9.6" y="8" width="1.5" height="1.5" fill="#8a8a8a"/><rect x="12.6" y="8" width="1.5" height="1.5" fill="#8a8a8a"/><rect x="15.6" y="8" width="1.5" height="1.5" fill="#8a8a8a"/><rect x="18.6" y="8" width="1.5" height="1.5" fill="#8a8a8a"/><rect x="11.1" y="9.5" width="1.5" height="1.5" fill="#8a8a8a"/><rect x="14.1" y="9.5" width="1.5" height="1.5" fill="#8a8a8a"/><rect x="17.1" y="9.5" width="1.5" height="1.5" fill="#8a8a8a"/><rect x="9.6" y="11" width="1.5" height="1.5" fill="#8a8a8a"/><rect x="12.6" y="11" width="1.5" height="1.5" fill="#8a8a8a"/><rect x="15.6" y="11" width="1.5" height="1.5" fill="#8a8a8a"/><rect x="18.6" y="11" width="1.5" height="1.5" fill="#8a8a8a"/><rect x="11.1" y="12.5" width="1.5" height="1.5" fill="#8a8a8a"/><rect x="14.1" y="12.5" width="1.5" height="1.5" fill="#8a8a8a"/><rect x="17.1" y="12.5" width="1.5" height="1.5" fill="#8a8a8a"/><rect x="9.6" y="14" width="1.5" height="1.5" fill="#8a8a8a"/><rect x="12.6" y="14" width="1.5" height="1.5" fill="#8a8a8a"/><rect x="15.6" y="14" width="1.5" height="1.5" fill="#8a8a8a"/><rect x="18.6" y="14" width="1.5" height="1.5" fill="#8a8a8a"/><rect x="11.1" y="15.5" width="1.5" height="1.5" fill="#8a8a8a"/><rect x="14.1" y="15.5" width="1.5" height="1.5" fill="#8a8a8a"/><rect x="17.1" y="15.5" width="1.5" height="1.5" fill="#8a8a8a"/><rect x="9.6" y="17" width="1.5" height="1.5" fill="#8a8a8a"/><rect x="12.6" y="17" width="1.5" height="1.5" fill="#8a8a8a"/><rect x="15.6" y="17" width="1.5" height="1.5" fill="#8a8a8a"/><rect x="18.6" y="17" width="1.5" height="1.5" fill="#8a8a8a"/></svg><svg class="a" style="left:872px;top:317.2px" width="22" height="21" viewBox="0 0 22 21"><rect x=".6" y=".6" width="17.4" height="16.6" fill="#a4d6d6" stroke="#8a8a8a" stroke-width="1"/><rect x="1.6" y="1.6" width="15.4" height="14.6" fill="none" stroke="#f2ffff" stroke-width=".9"/><text x="8.6" y="14.6" font-family="Liberation Sans" font-weight="bold" font-size="15" text-anchor="middle" fill="#111">T</text><path d="M11.6 8.6 H21 V17 L17.6 20.4 H11.6 Z" fill="#f08a1c" stroke="#7a3a08" stroke-width=".8"/><path d="M13.4 11 H19.4 M13.4 13.2 H19.4 M13.4 15.4 H17.4" stroke="#ffe4b0" stroke-width="1"/><path d="M17.6 20.4 V17 H21 Z" fill="#fff" stroke="#7a3a08" stroke-width=".5"/></svg><svg class="a" style="left:910.6px;top:316.6px" width="21.42" height="21.42" viewBox="0 0 21 21"><rect x=".5" y=".5" width="11" height="11" fill="#35e6f2" stroke="#e8ffff" stroke-width=".8"/><text x="6" y="9.6" font-family="Liberation Sans" font-weight="bold" font-size="10.5" text-anchor="middle" fill="#062a3a">T</text><rect x="9.5" y="4.5" width="10.5" height="10.5" fill="#12e21a" stroke="#0a7a0a" stroke-width=".6"/><path d="M12.5 6.6 H18.5" stroke="#053a05" stroke-width="1.6"/><rect x="4" y="8.5" width="11" height="11.5" fill="#a6d6d6" stroke="#f4ffff" stroke-width=".8"/><text x="9.5" y="18.4" font-family="Liberation Sans" font-weight="bold" font-size="11.5" text-anchor="middle" fill="#0a0a0a">T</text></svg><svg class="a" style="left:960.6px;top:318.6px" width="21" height="17" viewBox="0 0 21 17"><rect x=".6" y=".6" width="19.6" height="15.6" fill="#a4d6d8" stroke="#e4f4f4" stroke-width="1"/><rect x="3.8" y="3" width="2" height="7" fill="#555"/><rect x="3.8" y="11.4" width="2" height="2" fill="#555"/><path d="M8 6 H13 V3 L18.6 8.4 L13 13.8 V10.8 H8 Z" fill="#9a9a9a" stroke="#555" stroke-width=".7"/></svg><svg class="a" style="left:1001.4px;top:316.6px" width="18" height="20.8" viewBox="0 0 18 20.8"><path d="M.8 .8 H17.2 V14.6 L12 20 H.8 Z" fill="#9cc8cc" stroke="#4a5a5e" stroke-width="1.1" stroke-linejoin="round"/><path d="M3.2 4 H14.8 M3.2 6.6 H14.8 M3.2 9.2 H14.8 M3.2 11.8 H14.8 M3.2 14.4 H11 M3.2 17 H9" stroke="#4a5a5e" stroke-width="1" opacity=".8"/><path d="M12 20 V14.6 H17.2 Z" fill="#fff" stroke="#4a5a5e" stroke-width=".8" stroke-linejoin="round"/></svg><div class="a" style="left:619px;top:346.6px;width:564.4px;height:577.2px;background:#ece9d8;border-right:2px solid #8a8678;border-bottom:2px solid #8a8678"></div><div class="a" style="left:619px;top:368px;width:564px;height:1.4px;background:#fff"></div><div class="a" style="left:620.4px;top:347.4px;width:68.6px;height:22.2px;background:#ece9d8;border-right:1.6px solid #7a7668;box-shadow:inset 1px 1px 0 #fff"></div><span class="a t" style="left:628px;transform-origin:0 0;top:350.4px;font-size:12.6px;line-height:14.6px;color:#111;font-weight:normal;transform:scaleX(0.86);">Schedule1</span><div class="a" style="left:623.6px;top:372.4px;width:557.4px;height:549px;background:#e3e1d9;overflow:hidden"><svg width="558" height="549" style="position:absolute;left:0;top:0"><filter id="nz3" x="0" y="0" width="100%" height="100%"><feTurbulence type="fractalNoise" baseFrequency="0.5 0.4" numOctaves="2" seed="7"/><feColorMatrix type="matrix" values="0 0 0 0 1  0 0 0 0 1  0 0 0 0 1  1.2 0 0 0 -0.45"/></filter><rect width="558" height="549" filter="url(#nz3)" opacity="0.55"/></svg></div><svg class="a" style="left:633px;top:380.6px" width="18" height="20.8" viewBox="0 0 18 20.8"><path d="M.8 .8 H17.2 V14.6 L12 20 H.8 Z" fill="#a6d8da" stroke="#3a5a5e" stroke-width="1.1" stroke-linejoin="round"/><path d="M3.2 4 H14.8 M3.2 6.6 H14.8 M3.2 9.2 H14.8 M3.2 11.8 H14.8 M3.2 14.4 H11 M3.2 17 H9" stroke="#3a5a5e" stroke-width="1" opacity=".8"/><path d="M12 20 V14.6 H17.2 Z" fill="#fff" stroke="#3a5a5e" stroke-width=".8" stroke-linejoin="round"/></svg><div class="a" style="left:667px;top:376.4px;width:35.2px;height:30.4px;background:linear-gradient(#525252 0%,#7e7e7e 8%,#9c9c9c 30%,#747474 60%,#4a4a4a 86%,#1c1c1c 100%);border:1.5px solid #080808;border-radius:2px"></div><svg class="a" style="left:676.6px;top:381.4px" width="16.64" height="19.76" viewBox="0 0 16 19"><rect x="11.2" y=".8" width="3.6" height="3" fill="#d4ecf2" stroke="#2a3a4a" stroke-width="1"/><path d="M11.2 5.6 H14.8 V15 H7 V18 L.8 12.8 L7 7.8 V11 H11.2 Z" fill="#d4ecf2" stroke="#2a3a4a" stroke-width="1.1" stroke-linejoin="round"/></svg><div class="a" style="left:711px;top:376.4px;width:34.6px;height:30.4px;background:linear-gradient(#b88400 0%,#ffd400 10%,#fff000 30%,#ffc400 55%,#cc9000 82%,#805800 100%);border:1.5px solid #0a0600;border-radius:2px"></div><svg class="a" style="left:719.6px;top:382.6px" width="17.68" height="17.68" viewBox="0 0 17 17"><path d="M12.6 .8 H16 V16 H12.6 V10.2 H8 V13.8 L.8 8.4 L8 3 V6.6 H12.6 Z" fill="#dff0f4" stroke="#3a2a08" stroke-width="1.1" stroke-linejoin="round"/></svg><div class="a" style="left:1023.8px;top:376.4px;width:34.6px;height:30.4px;background:linear-gradient(#525252 0%,#7e7e7e 8%,#9c9c9c 30%,#747474 60%,#4a4a4a 86%,#1c1c1c 100%);border:1.5px solid #080808;border-radius:2px"></div><div class="a" style="left:1062.4px;top:376.4px;width:34.6px;height:30.4px;background:linear-gradient(#525252 0%,#7e7e7e 8%,#9c9c9c 30%,#747474 60%,#4a4a4a 86%,#1c1c1c 100%);border:1.5px solid #080808;border-radius:2px"></div><div class="a" style="left:1101px;top:376.4px;width:34.6px;height:30.4px;background:linear-gradient(#525252 0%,#7e7e7e 8%,#9c9c9c 30%,#747474 60%,#4a4a4a 86%,#1c1c1c 100%);border:1.5px solid #080808;border-radius:2px"></div><div class="a" style="left:1139.8px;top:376.4px;width:34.6px;height:30.4px;background:linear-gradient(#525252 0%,#7e7e7e 8%,#9c9c9c 30%,#747474 60%,#4a4a4a 86%,#1c1c1c 100%);border:1.5px solid #080808;border-radius:2px"></div><svg class="a" style="left:1032.6px;top:383.4px" width="17.5" height="16.5" viewBox="0 0 17.5 16.5"><path d="M6.4 .9 H13.2" stroke="#222" stroke-width="1.3"/><path d="M4.8 15.7 H11.6" stroke="#222" stroke-width="1.3"/><path d="M2.6 5.6 L7.4 .8 L9.6 2.8 L4.8 7.6 Z" fill="#f7a81c" stroke="#5a3a08" stroke-width=".5" stroke-linejoin="round"/><path d="M.6 2.2 V9.5 H7.9 Z" fill="#f7a81c" stroke="#5a3a08" stroke-width=".5" stroke-linejoin="round"/><path d="M12.7 8.9 L15 11.1 L10.2 16 L7.9 13.8 Z" fill="#f7a81c" stroke="#5a3a08" stroke-width=".5" stroke-linejoin="round"/><path d="M17 7 H9.7 L17 14.3 Z" fill="#f7a81c" stroke="#5a3a08" stroke-width=".5" stroke-linejoin="round"/></svg><svg class="a" style="left:1070.8px;top:382.4px" width="18" height="18" viewBox="0 0 18 18"><rect x=".8" y="1" width="3.4" height="4.2" fill="#35dfe6" stroke="#0a3a3a" stroke-width=".8"/><path d="M6.6 3.1 H17" stroke="#111" stroke-width="1.1" stroke-dasharray="2.6 1.2"/><rect x=".8" y="7" width="3.4" height="4.2" fill="#35dfe6" stroke="#0a3a3a" stroke-width=".8"/><path d="M6.6 9.1 H17" stroke="#111" stroke-width="1.1" stroke-dasharray="2.6 1.2"/><rect x=".8" y="13" width="3.4" height="4.2" fill="#35dfe6" stroke="#0a3a3a" stroke-width=".8"/><path d="M6.6 15.1 H17" stroke="#111" stroke-width="1.1" stroke-dasharray="2.6 1.2"/></svg><svg class="a" style="left:1109px;top:382px" width="19" height="19" viewBox="0 0 19 19"><circle cx="11.4" cy="7.4" r="6.4" fill="none" stroke="#111" stroke-width="1.3"/><path d="M6.8 12 L1.4 17.2" stroke="#111" stroke-width="2.4" stroke-linecap="round"/><path d="M6.4 12.4 L2 16.8" stroke="#bbb" stroke-width=".7"/></svg><svg class="a" style="left:1147.4px;top:381.4px" width="19" height="19.4" viewBox="0 0 19 19.4"><path d="M.8 6 V18.4 H15.6 V7.4 H8.6 L7 5 H1.8 Z" fill="#9edadc" stroke="#3a7a7e" stroke-width=".9"/><rect x="9.2" y=".8" width="9" height="3.4" fill="#e8e8e8" stroke="#222" stroke-width=".8"/><rect x="12.6" y="4" width="2" height="14" fill="#e6a21c" stroke="#5a3a08" stroke-width=".5"/><path d="M5.4 12.6 L17.8 16.6 M5.4 16.6 L17.8 12.6" stroke="#d01818" stroke-width="1.6"/><circle cx="5" cy="12.4" r="1.7" fill="none" stroke="#111" stroke-width="1"/><circle cx="5" cy="16.8" r="1.7" fill="none" stroke="#111" stroke-width="1"/></svg><div class="a" style="left:627.6px;top:413px;width:546.6px;height:137.4px;background:#ece9d8;border:1px solid;border-color:#8a8678 #fff #fff #8a8678"></div><span class="a t" style="left:684.6px;transform-origin:0 0;top:421.6px;font-size:12.6px;line-height:14.6px;color:#111;font-weight:normal;transform:scaleX(0.87);">Page name</span><div class="a" style="left:755.4px;top:418.6px;width:412.2px;height:20.4px;background:#fff;border:1px solid;border-color:#7f7c6c #fff #fff #7f7c6c;box-shadow:inset 1px 1px 0 #b4b09e"></div><span class="a t" style="left:758.6px;transform-origin:0 0;top:420.8px;font-size:12.6px;line-height:14.6px;color:#111;font-weight:normal;transform:scaleX(0.86);">Schedule1</span><span class="a t" style="left:703.6px;transform-origin:0 0;top:453.8px;font-size:12.6px;line-height:14.6px;color:#111;font-weight:normal;transform:scaleX(0.82);">File filter</span><div class="a" style="left:755.4px;top:451px;width:412.2px;height:20.4px;background:#fff;border:1px solid;border-color:#7f7c6c #fff #fff #7f7c6c;box-shadow:inset 1px 1px 0 #b4b09e"></div><div class="a" style="left:757.8px;top:454.2px;width:19.6px;height:13px;background:#2f64c8"></div><span class="a t" style="left:758.6px;transform-origin:0 0;top:453.4px;font-size:12.6px;line-height:14.6px;color:#fff;font-weight:normal;transform:scaleX(0.82);">*.air</span><div class="a" style="left:1149.2px;top:453px;width:17.4px;height:17.2px;background:#ece9d8;border:1px solid;border-color:#fff #6a675a #6a675a #fff;box-shadow:1px 1px 0 #3a3a30"></div><svg class="a" style="left:1154.2px;top:460px" width="7.6" height="4" viewBox="0 0 7.6 4"><path d="M0 0 H7.6 L3.8 4 Z" fill="#111"/></svg><div class="a" style="left:633px;top:483.2px;width:34.4px;height:29.6px;background:linear-gradient(#525252 0%,#7e7e7e 8%,#9c9c9c 30%,#747474 60%,#4a4a4a 86%,#1c1c1c 100%);border:1.5px solid #080808;border-radius:2px"></div><svg class="a" style="left:640.4px;top:489px" width="20" height="19" viewBox="0 0 20 19"><path d="M1 5 V17.5 H18.4 V6.6 H9.4 L7.6 4 H2.2 Z" fill="#7adadc" stroke="#2a8a8e" stroke-width="1.1" stroke-linejoin="round"/><path d="M9.4 6.4 L11 2.2 H16.2 L17.4 4.4 V6.4" fill="#7adadc" stroke="#2a8a8e" stroke-width="1.1" stroke-linejoin="round"/></svg><div class="a" style="left:671.6px;top:481px;width:496px;height:33.4px;background:#ece9d8;border:1px solid;border-color:#7f7c6c #fff #fff #7f7c6c;box-shadow:inset 1px 1px 0 #b4b09e"></div><span class="a t" style="left:674.2px;transform-origin:0 0;top:491.4px;font-size:12.6px;line-height:14.6px;color:#111;font-weight:normal;transform:scaleX(0.94);">D:\Users\Schedule\</span><div class="a" style="left:841px;top:520.4px;width:35px;height:30.2px;background:#ece9d8;border:1.3px solid #222"></div><div class="a" style="left:879.8px;top:520.4px;width:35px;height:30.2px;background:#ece9d8;border:1.3px solid #222"></div><div class="a" style="left:953px;top:520.6px;width:120.2px;height:29.6px;background:linear-gradient(#525252 0%,#8c8c8c 8%,#a8a8a8 30%,#747474 60%,#4a4a4a 86%,#1c1c1c 100%);border:1.5px solid #080808;border-radius:2px"></div><span class="a t" style="left:987px;transform-origin:0 0;top:527.8px;font-size:12.6px;line-height:14.6px;color:#0a0a0a;font-weight:normal;transform:scaleX(0.92);">New page</span><div class="a" style="left:1113.8px;top:520.4px;width:59.6px;height:30.2px;background:#ece9d8;border:1.3px solid #222"></div><div class="a" style="left:628.6px;top:559px;width:544.6px;height:355.4px;background:#c6c3c6;border-left:1px solid #8a8678"></div><div class="a" style="left:628.6px;top:559px;width:544.6px;height:16.4px;background:#ece9d8"></div><div class="a" style="left:628.6px;top:575px;width:544.6px;height:1.6px;background:#8f8b7c"></div><span class="a t" style="left:635.8px;transform-origin:0 0;top:560.6px;font-size:12.6px;line-height:14.6px;color:#111;font-weight:normal;transform:scaleX(0.84);">Name &lt;&lt;</span><div class="a" style="left:774.8px;top:560px;width:1.2px;height:14.4px;background:#aca899"></div><div class="a" style="left:776px;top:560px;width:1.2px;height:14.4px;background:#fff"></div><span class="a t" style="left:783.6px;transform-origin:0 0;top:560.6px;font-size:12.6px;line-height:14.6px;color:#111;font-weight:normal;transform:scaleX(0.88);">Duration</span><div class="a" style="left:848.2px;top:560px;width:1.2px;height:14.4px;background:#aca899"></div><div class="a" style="left:849.4px;top:560px;width:1.2px;height:14.4px;background:#fff"></div><span class="a t" style="left:856.2px;transform-origin:0 0;top:560.6px;font-size:12.6px;line-height:14.6px;color:#111;font-weight:normal;transform:scaleX(0.86);">Start</span><div class="a" style="left:921.2px;top:560px;width:1.2px;height:14.4px;background:#aca899"></div><div class="a" style="left:922.4px;top:560px;width:1.2px;height:14.4px;background:#fff"></div><span class="a t" style="left:929.6px;transform-origin:0 0;top:560.6px;font-size:12.6px;line-height:14.6px;color:#111;font-weight:normal;transform:scaleX(0.85);">Finish</span><div class="a" style="left:994.4px;top:560px;width:1.2px;height:14.4px;background:#aca899"></div><div class="a" style="left:995.6px;top:560px;width:1.2px;height:14.4px;background:#fff"></div><span class="a t" style="left:1003px;transform-origin:0 0;top:560.6px;font-size:12.6px;line-height:14.6px;color:#111;font-weight:normal;transform:scaleX(0.89);">Logo</span><div class="a" style="left:1035.8px;top:560px;width:1.2px;height:14.4px;background:#aca899"></div><div class="a" style="left:1037px;top:560px;width:1.2px;height:14.4px;background:#fff"></div><span class="a t" style="left:1044.4px;transform-origin:0 0;top:560.6px;font-size:12.6px;line-height:14.6px;color:#111;font-weight:normal;transform:scaleX(0.9);">Title</span><div class="a" style="left:1077.8px;top:560px;width:1.2px;height:14.4px;background:#aca899"></div><div class="a" style="left:1079px;top:560px;width:1.2px;height:14.4px;background:#fff"></div><span class="a t" style="left:1086.2px;transform-origin:0 0;top:560.6px;font-size:12.6px;line-height:14.6px;color:#111;font-weight:normal;transform:scaleX(0.89);">Lock</span><div class="a" style="left:1119.4px;top:560px;width:1.2px;height:14.4px;background:#aca899"></div><div class="a" style="left:1120.6px;top:560px;width:1.2px;height:14.4px;background:#fff"></div><svg class="a" style="left:632px;top:578.8px" width="18" height="20.8" viewBox="0 0 18 20.8"><path d="M.8 .8 H17.2 V14.6 L12 20 H.8 Z" fill="#a6d8da" stroke="#3a6a6e" stroke-width="1.1" stroke-linejoin="round"/><path d="M3.2 4 H14.8 M3.2 6.6 H14.8 M3.2 9.2 H14.8 M3.2 11.8 H14.8 M3.2 14.4 H11 M3.2 17 H9" stroke="#3a6a6e" stroke-width="1" opacity=".8"/><path d="M12 20 V14.6 H17.2 Z" fill="#fff" stroke="#3a6a6e" stroke-width=".8" stroke-linejoin="round"/></svg><span class="a t" style="left:654.6px;transform-origin:0 0;top:582.3px;font-size:12.6px;line-height:14.6px;color:#111;font-weight:normal;transform:scaleX(0.87);">all_day.air</span><svg class="a" style="left:632px;top:600.85px" width="18" height="20.8" viewBox="0 0 18 20.8"><path d="M.8 .8 H17.2 V14.6 L12 20 H.8 Z" fill="#a6d8da" stroke="#3a6a6e" stroke-width="1.1" stroke-linejoin="round"/><path d="M3.2 4 H14.8 M3.2 6.6 H14.8 M3.2 9.2 H14.8 M3.2 11.8 H14.8 M3.2 14.4 H11 M3.2 17 H9" stroke="#3a6a6e" stroke-width="1" opacity=".8"/><path d="M12 20 V14.6 H17.2 Z" fill="#fff" stroke="#3a6a6e" stroke-width=".8" stroke-linejoin="round"/></svg><span class="a t" style="left:654.6px;transform-origin:0 0;top:604.35px;font-size:12.6px;line-height:14.6px;color:#111;font-weight:normal;transform:scaleX(0.84);">big.air</span><svg class="a" style="left:632px;top:622.9px" width="18" height="20.8" viewBox="0 0 18 20.8"><path d="M.8 .8 H17.2 V14.6 L12 20 H.8 Z" fill="#a6d8da" stroke="#3a6a6e" stroke-width="1.1" stroke-linejoin="round"/><path d="M3.2 4 H14.8 M3.2 6.6 H14.8 M3.2 9.2 H14.8 M3.2 11.8 H14.8 M3.2 14.4 H11 M3.2 17 H9" stroke="#3a6a6e" stroke-width="1" opacity=".8"/><path d="M12 20 V14.6 H17.2 Z" fill="#fff" stroke="#3a6a6e" stroke-width=".8" stroke-linejoin="round"/></svg><span class="a t" style="left:654.6px;transform-origin:0 0;top:626.4px;font-size:12.6px;line-height:14.6px;color:#111;font-weight:normal;transform:scaleX(0.87);">different.air</span><svg class="a" style="left:632px;top:644.95px" width="18" height="20.8" viewBox="0 0 18 20.8"><path d="M.8 .8 H17.2 V14.6 L12 20 H.8 Z" fill="#a6d8da" stroke="#3a6a6e" stroke-width="1.1" stroke-linejoin="round"/><path d="M3.2 4 H14.8 M3.2 6.6 H14.8 M3.2 9.2 H14.8 M3.2 11.8 H14.8 M3.2 14.4 H11 M3.2 17 H9" stroke="#3a6a6e" stroke-width="1" opacity=".8"/><path d="M12 20 V14.6 H17.2 Z" fill="#fff" stroke="#3a6a6e" stroke-width=".8" stroke-linejoin="round"/></svg><span class="a t" style="left:654.6px;transform-origin:0 0;top:648.45px;font-size:12.6px;line-height:14.6px;color:#111;font-weight:normal;transform:scaleX(0.86);">test.air</span><svg class="a" style="left:632px;top:667px" width="18" height="20.8" viewBox="0 0 18 20.8"><path d="M.8 .8 H17.2 V14.6 L12 20 H.8 Z" fill="#a6d8da" stroke="#3a6a6e" stroke-width="1.1" stroke-linejoin="round"/><path d="M3.2 4 H14.8 M3.2 6.6 H14.8 M3.2 9.2 H14.8 M3.2 11.8 H14.8 M3.2 14.4 H11 M3.2 17 H9" stroke="#3a6a6e" stroke-width="1" opacity=".8"/><path d="M12 20 V14.6 H17.2 Z" fill="#fff" stroke="#3a6a6e" stroke-width=".8" stroke-linejoin="round"/></svg><span class="a t" style="left:654.6px;transform-origin:0 0;top:670.5px;font-size:12.6px;line-height:14.6px;color:#111;font-weight:normal;transform:scaleX(0.84);">title.air</span><svg class="a" style="left:880px;top:828px" width="275" height="60" viewBox="880 828 275 60" ><defs><radialGradient id="fl" cx="50%" cy="50%" r="50%"><stop offset="0" stop-color="#fff" stop-opacity="1"/><stop offset=".25" stop-color="#8fe0c8" stop-opacity=".9"/><stop offset="1" stop-color="#2a9a80" stop-opacity="0"/></radialGradient></defs><path d="M888 851 L940 852 L994 851.6 L940 855.4 Z" fill="#2f9680"/><path d="M941.6 833.6 L943.6 852 L941.6 866 L939.8 852 Z" fill="#2f9680"/><ellipse cx="941.8" cy="853" rx="11" ry="6.4" fill="url(#fl)"/><g fill="#1d1b1c"><path d="M941 880 V854 H948.6 L959.3 871.6 L970 854 H977.6 V880 H970.6 V864.6 L961.6 879 H957 L948 864.6 V880 Z"/><path d="M988.4 854 H995.6 V880 H988.4 Z"/><path d="M1008 880 V854 H1029 Q1038 854 1038 862.4 Q1038 869.6 1030.6 870.6 L1039.6 880 H1030.2 L1022.4 871.2 H1015.2 V880 Z M1015.2 859.6 V865.8 H1028 Q1030.8 865.8 1030.8 862.6 Q1030.8 859.6 1028 859.6 Z" fill-rule="evenodd"/><path d="M1044 880 L1059.4 854 H1067.4 L1082.8 880 H1074.6 L1071.4 874.4 H1055.2 L1052 880 Z M1058.2 869.2 H1068.4 L1063.3 860 Z" fill-rule="evenodd"/><path d="M1088.4 880 V854 H1106 Q1119.6 854 1119.6 867 Q1119.6 880 1106 880 Z M1095.6 859.8 V874.2 H1105.4 Q1112.2 874.2 1112.2 867 Q1112.2 859.8 1105.4 859.8 Z" fill-rule="evenodd"/></g><g fill="#3a8a7c"><path d="M1126.6 855 H1128.2 V857.6 H1132.8 V855 H1134.4 V861.6 H1132.8 V858.9 H1128.2 V861.6 H1126.6 Z"/><path d="M1136.6 855 H1141.6 Q1145.6 855 1145.6 858.3 Q1145.6 861.6 1141.6 861.6 H1136.6 Z M1138.2 856.3 V860.3 H1141.4 Q1144 860.3 1144 858.3 Q1144 856.3 1141.4 856.3 Z" fill-rule="evenodd"/></g></svg><div class="a" style="left:1173.2px;top:559px;width:2px;height:357px;background:#fff"></div><div class="a" style="left:628.6px;top:914.4px;width:546.6px;height:2px;background:#fff"></div></div></body></html>
